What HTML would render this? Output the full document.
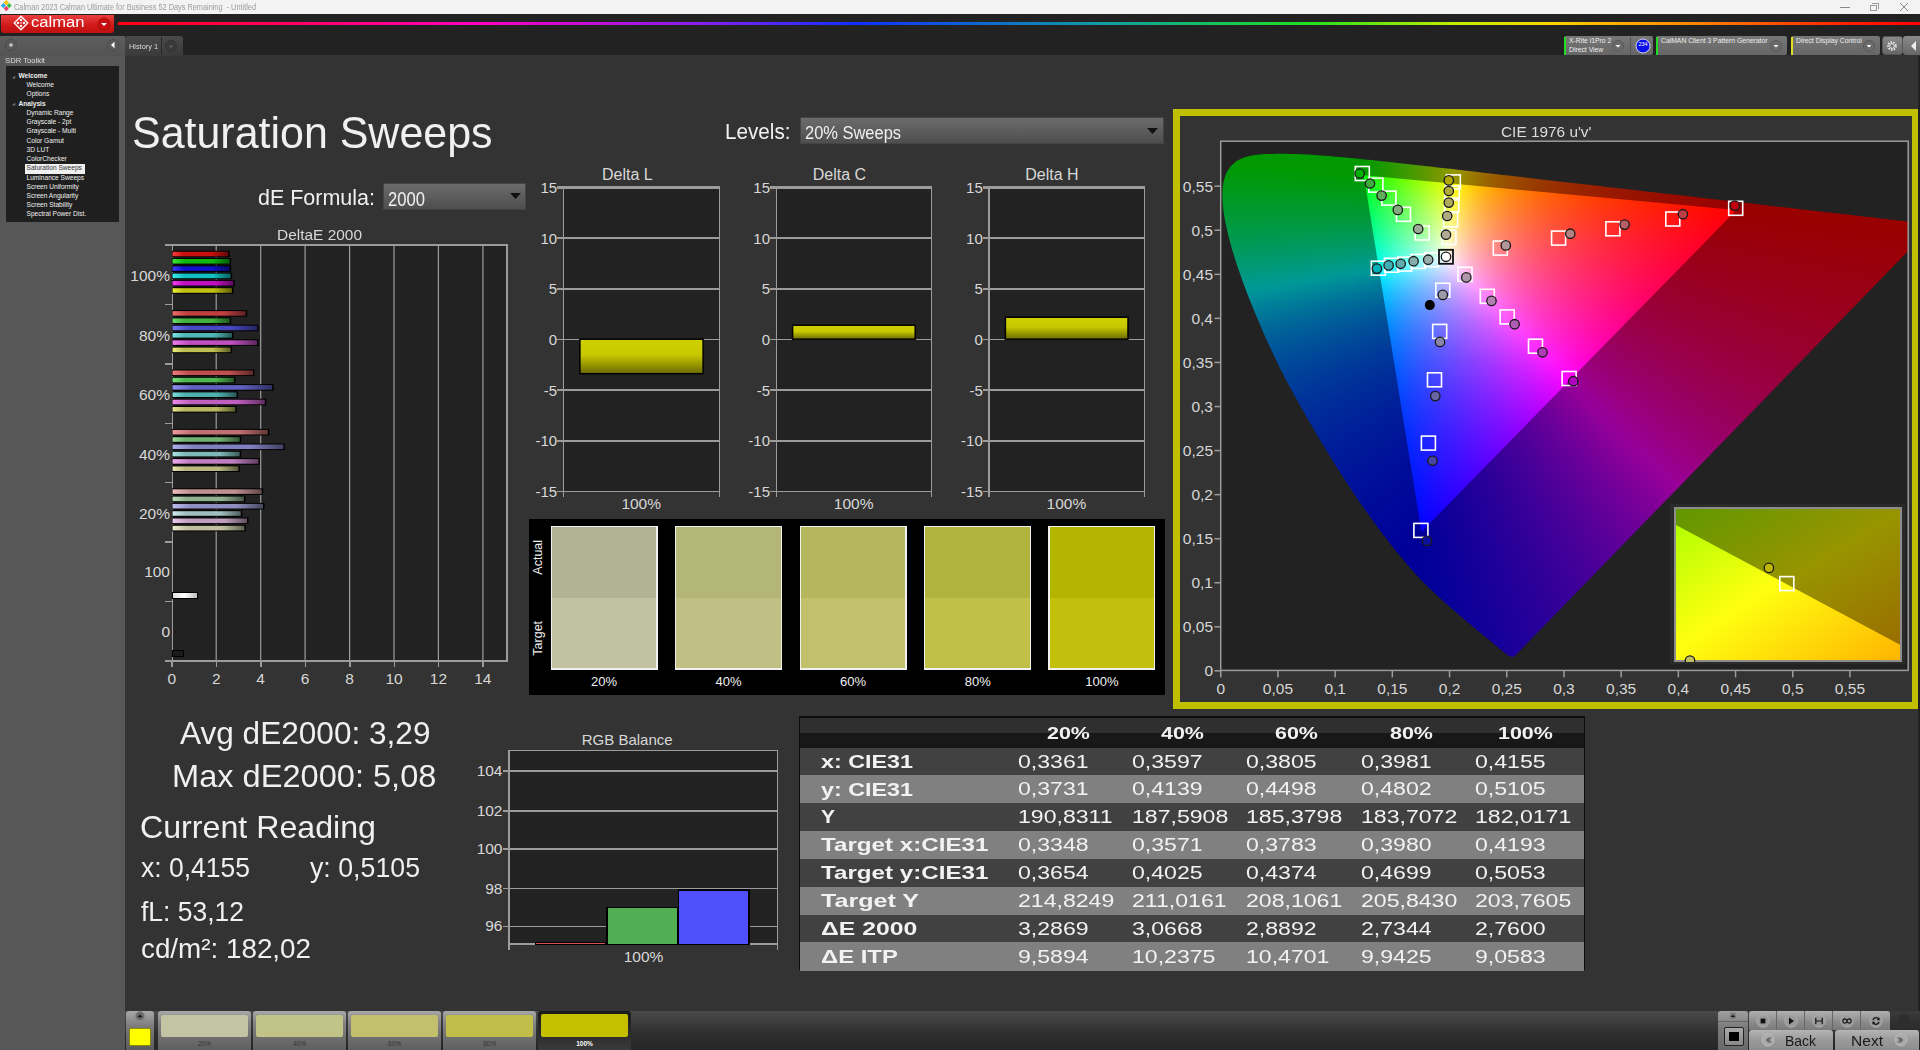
<!DOCTYPE html>
<html><head><meta charset="utf-8"><title>Calman</title><style>
*{margin:0;padding:0;box-sizing:border-box}
html,body{width:1920px;height:1050px;overflow:hidden;background:#333333;font-family:"Liberation Sans",sans-serif}
.t{position:absolute;white-space:nowrap;line-height:1;font-family:"Liberation Sans",sans-serif}
svg{position:absolute;left:0;top:0}
</style></head><body>
<div style="position:absolute;left:0px;top:0px;width:1920px;height:14px;background:#f3f3f3"></div>
<svg width="14" height="14" style="left:0;top:0"><rect x="4.5" y="0.8" width="3.6" height="3.6" fill="#f6c400" transform="rotate(45 6.3 2.6)"/><rect x="1.6" y="3.8" width="3.6" height="3.6" fill="#2aa8e8" transform="rotate(45 3.4 5.6)"/><rect x="7.4" y="3.8" width="3.6" height="3.6" fill="#3cc040" transform="rotate(45 9.2 5.6)"/><rect x="4.5" y="6.8" width="3.6" height="3.6" fill="#f03c6c" transform="rotate(45 6.3 8.6)"/></svg>
<div class="t" style="left:14.00px;top:2.78px;font-size:8.5px;color:#9c9c9c;transform:scaleX(0.8638);transform-origin:0 0;">Calman 2023 Calman Ultimate for Business 52 Days Remaining&nbsp; - Untitled</div>
<div style="position:absolute;left:1840px;top:7px;width:10px;height:1px;background:#888"></div>
<div style="position:absolute;left:1870px;top:5px;width:7px;height:6px;border:1px solid #999"></div>
<div style="position:absolute;left:1872px;top:3px;width:7px;height:6px;border-top:1px solid #999;border-right:1px solid #999"></div>
<svg width="12" height="12" style="left:1898px;top:1px"><path d="M2 2 L10 10 M10 2 L2 10" stroke="#888" stroke-width="1"/></svg>
<div style="position:absolute;left:0px;top:14px;width:1920px;height:41px;background:#222222"></div>
<div style="position:absolute;left:118px;top:22px;width:1802px;height:3px;background:linear-gradient(90deg,#ff0010 0%,#ff00c0 20%,#8020f0 33%,#1030ff 41%,#10a0a0 55%,#20e020 66%,#c0f000 74%,#ffd000 80%,#ff8000 88%,#ff2000 96%,#ff0000 100%)"></div>
<div style="position:absolute;left:1px;top:15px;width:113px;height:18px;background:linear-gradient(#e84040,#d01818 60%,#c01010);border-radius:0 0 3px 3px"></div>
<svg width="20" height="20" style="left:11.4px;top:13.4px"><g transform="rotate(45 10 10)" fill="none" stroke="#fff" stroke-width="1.3"><rect x="5.2" y="5.2" width="9.6" height="9.6"/></g><circle cx="10" cy="7" r="1.25" fill="#fff"/><circle cx="10" cy="13" r="1.25" fill="#fff"/><circle cx="7" cy="10" r="1.25" fill="#fff"/><circle cx="13" cy="10" r="1.25" fill="#fff"/><circle cx="10" cy="10" r="0.8" fill="#fff"/></svg>
<div class="t" style="left:31.00px;top:14.43px;font-size:15.5px;color:#ffffff;transform:scaleX(1.0707);transform-origin:0 0;">calman</div>
<svg width="14" height="14" style="left:97px;top:17px"><circle cx="7" cy="7" r="6" fill="#c81010" stroke="#b00a0a"/><path d="M4 6 L10 6 L7 9 Z" fill="#fff"/></svg>
<div style="position:absolute;left:1564px;top:36px;width:89px;height:19px;background:linear-gradient(#777,#666);border-radius:2px"></div>
<div style="position:absolute;left:1564px;top:37px;width:2px;height:18px;background:#22dd22"></div>
<div class="t" style="left:1569.00px;top:37.72px;font-size:6.8px;color:#eeeeee;">X-Rite i1Pro 2</div>
<div class="t" style="left:1569.00px;top:46.72px;font-size:6.8px;color:#eeeeee;">Direct View</div>
<div style="position:absolute;left:1630px;top:37px;width:1px;height:18px;background:#555"></div>
<svg width="16" height="16" style="left:1635px;top:38px"><circle cx="8" cy="8" r="7" fill="#0a10e8" stroke="#fff" stroke-width="0.8"/></svg>
<div class="t" style="left:1638.41px;top:42.33px;font-size:5.5px;color:#ffffff;">234</div>
<div style="position:absolute;left:1656px;top:36px;width:131px;height:19px;background:linear-gradient(#777,#666);border-radius:2px"></div>
<div style="position:absolute;left:1656px;top:37px;width:2px;height:18px;background:#22dd22"></div>
<div class="t" style="left:1661.00px;top:37.72px;font-size:6.8px;color:#eeeeee;">CalMAN Client 3 Pattern Generator</div>
<div style="position:absolute;left:1791px;top:36px;width:89px;height:19px;background:linear-gradient(#777,#666);border-radius:2px"></div>
<div style="position:absolute;left:1791px;top:37px;width:2px;height:18px;background:#e0e020"></div>
<div class="t" style="left:1796.00px;top:37.72px;font-size:6.8px;color:#eeeeee;">Direct Display Control</div>
<svg width="14" height="14" style="left:1611px;top:39px"><circle cx="7" cy="7" r="5.5" fill="#6a6a6a" stroke="#5a5a5a"/><path d="M4.6 6 L9.4 6 L7 8.6 Z" fill="#fff"/></svg>
<svg width="14" height="14" style="left:1769px;top:39px"><circle cx="7" cy="7" r="5.5" fill="#6a6a6a" stroke="#5a5a5a"/><path d="M4.6 6 L9.4 6 L7 8.6 Z" fill="#fff"/></svg>
<svg width="14" height="14" style="left:1862px;top:39px"><circle cx="7" cy="7" r="5.5" fill="#6a6a6a" stroke="#5a5a5a"/><path d="M4.6 6 L9.4 6 L7 8.6 Z" fill="#fff"/></svg>
<div style="position:absolute;left:1882px;top:36px;width:21px;height:19px;background:linear-gradient(#8a8a8a,#666);border-radius:3px;border:1px solid #555"></div>
<svg width="14" height="14" style="left:1885px;top:39px"><circle cx="7" cy="7" r="4" fill="none" stroke="#eee" stroke-width="1.6" stroke-dasharray="1.6 1.2"/><circle cx="7" cy="7" r="2.4" fill="none" stroke="#eee" stroke-width="1"/></svg>
<div style="position:absolute;left:1903px;top:36px;width:17px;height:19px;background:linear-gradient(#8a8a8a,#666);border-radius:3px 0 0 3px"></div>
<svg width="10" height="12" style="left:1909px;top:40px"><path d="M7 1 L2 6 L7 11 Z" fill="#eee"/></svg>
<div style="position:absolute;left:0px;top:36px;width:125px;height:1014px;background:#575757"></div>
<div style="position:absolute;left:0px;top:36px;width:125px;height:20px;background:linear-gradient(#5e5e5e,#545454);border-radius:3px 3px 0 0"></div>
<svg width="14" height="14" style="left:4px;top:38px"><circle cx="7" cy="7" r="5.5" fill="#5a5a5a" stroke="#4c4c4c"/><circle cx="7" cy="7" r="1.8" fill="#c8c8c8"/></svg>
<svg width="14" height="14" style="left:106px;top:38px"><circle cx="7" cy="7" r="5.5" fill="#5a5a5a" stroke="#4c4c4c"/><path d="M8.5 3.8 L5 7 L8.5 10.2 Z" fill="#fff"/></svg>
<div class="t" style="left:5.00px;top:57.20px;font-size:8px;color:#dddddd;transform:scaleX(0.9605);transform-origin:0 0;">SDR Toolkit</div>
<div style="position:absolute;left:6px;top:66px;width:113px;height:156px;background:#1f1f1f"></div>
<div class="t" style="left:18.50px;top:72.89px;font-size:6.6px;color:#f0f0f0;font-weight:bold;">Welcome</div>
<div class="t" style="left:12.00px;top:75.53px;font-size:3.5px;color:#777777;">&#9698;</div>
<div class="t" style="left:26.50px;top:82.13px;font-size:6.6px;color:#f0f0f0;">Welcome</div>
<div class="t" style="left:26.50px;top:91.37px;font-size:6.6px;color:#f0f0f0;">Options</div>
<div class="t" style="left:18.50px;top:100.61px;font-size:6.6px;color:#f0f0f0;font-weight:bold;">Analysis</div>
<div class="t" style="left:12.00px;top:103.25px;font-size:3.5px;color:#777777;">&#9698;</div>
<div class="t" style="left:26.50px;top:109.85px;font-size:6.6px;color:#f0f0f0;">Dynamic Range</div>
<div class="t" style="left:26.50px;top:119.09px;font-size:6.6px;color:#f0f0f0;">Grayscale - 2pt</div>
<div class="t" style="left:26.50px;top:128.33px;font-size:6.6px;color:#f0f0f0;">Grayscale - Multi</div>
<div class="t" style="left:26.50px;top:137.57px;font-size:6.6px;color:#f0f0f0;">Color Gamut</div>
<div class="t" style="left:26.50px;top:146.81px;font-size:6.6px;color:#f0f0f0;">3D LUT</div>
<div class="t" style="left:26.50px;top:156.05px;font-size:6.6px;color:#f0f0f0;">ColorChecker</div>
<div style="position:absolute;left:25px;top:163.5px;width:60px;height:10px;background:#f0f0f0"></div>
<div class="t" style="left:26.50px;top:165.29px;font-size:6.6px;color:#333333;">Saturation Sweeps</div>
<div class="t" style="left:26.50px;top:174.53px;font-size:6.6px;color:#f0f0f0;">Luminance Sweeps</div>
<div class="t" style="left:26.50px;top:183.77px;font-size:6.6px;color:#f0f0f0;">Screen Uniformity</div>
<div class="t" style="left:26.50px;top:193.01px;font-size:6.6px;color:#f0f0f0;">Screen Angularity</div>
<div class="t" style="left:26.50px;top:202.25px;font-size:6.6px;color:#f0f0f0;">Screen Stability</div>
<div class="t" style="left:26.50px;top:211.49px;font-size:6.6px;color:#f0f0f0;">Spectral Power Dist.</div>
<div style="position:absolute;left:125px;top:36px;width:58px;height:20px;background:linear-gradient(#4a4a4a,#3a3a3a);border-radius:3px 3px 0 0"></div>
<div style="position:absolute;left:161px;top:37px;width:1px;height:18px;background:#2a2a2a"></div>
<div class="t" style="left:128.50px;top:43.05px;font-size:7px;color:#dddddd;transform:scaleX(1.0500);transform-origin:0 0;">History 1</div>
<svg width="14" height="14" style="left:164px;top:39px"><circle cx="7" cy="7" r="5.5" fill="#3a3a3a" stroke="#333"/><path d="M5.5 7.5 H8.5 M7 6 V9" stroke="#777" stroke-width="0.6"/></svg>
<div class="t" style="left:131.80px;top:109.75px;font-size:45px;color:#f0f0f0;transform:scaleX(0.9544);transform-origin:0 0;">Saturation Sweeps</div>
<div class="t" style="left:257.60px;top:186.60px;font-size:22px;color:#f0f0f0;transform:scaleX(0.9764);transform-origin:0 0;">dE Formula:</div>
<div style="position:absolute;left:383px;top:183px;width:143px;height:27px;background:linear-gradient(#6c6c6c,#4e4e4e);border:1px solid #444"></div>
<div class="t" style="left:388.00px;top:188.50px;font-size:20px;color:#f0f0f0;transform:scaleX(0.8316);transform-origin:0 0;">2000</div>
<svg width="12" height="8" style="left:510px;top:193px"><path d="M0 0 H11 L5.5 6 Z" fill="#111"/></svg>
<div class="t" style="left:724.80px;top:121.10px;font-size:22px;color:#f0f0f0;transform:scaleX(0.9396);transform-origin:0 0;">Levels:</div>
<div style="position:absolute;left:800px;top:117px;width:364px;height:27px;background:linear-gradient(#6c6c6c,#4e4e4e);border:1px solid #444"></div>
<div class="t" style="left:804.80px;top:124.20px;font-size:18px;color:#f0f0f0;transform:scaleX(0.9137);transform-origin:0 0;">20% Sweeps</div>
<svg width="12" height="8" style="left:1147px;top:128px"><path d="M0 0 H11 L5.5 6 Z" fill="#111"/></svg>
<div class="t" style="left:179.50px;top:717.10px;font-size:32px;color:#f0f0f0;transform:scaleX(0.9868);transform-origin:0 0;">Avg dE2000: 3,29</div>
<div class="t" style="left:172.20px;top:760.10px;font-size:32px;color:#f0f0f0;transform:scaleX(1.0179);transform-origin:0 0;">Max dE2000: 5,08</div>
<div class="t" style="left:139.60px;top:811.40px;font-size:32px;color:#f0f0f0;transform:scaleX(1.0051);transform-origin:0 0;">Current Reading</div>
<div class="t" style="left:141.20px;top:854.85px;font-size:27px;color:#f0f0f0;transform:scaleX(0.9812);transform-origin:0 0;">x: 0,4155</div>
<div class="t" style="left:309.50px;top:854.85px;font-size:27px;color:#f0f0f0;transform:scaleX(0.9902);transform-origin:0 0;">y: 0,5105</div>
<div class="t" style="left:141.20px;top:899.45px;font-size:27px;color:#f0f0f0;transform:scaleX(0.9801);transform-origin:0 0;">fL: 53,12</div>
<div class="t" style="left:141.20px;top:935.65px;font-size:27px;color:#f0f0f0;transform:scaleX(1.0298);transform-origin:0 0;">cd/m&#178;: 182,02</div>
<div class="t" style="left:277.30px;top:226.82px;font-size:15.5px;color:#d8d8d8;transform:scaleX(0.9963);transform-origin:0 0;">DeltaE 2000</div>
<svg width="520" height="700" style="left:0px;top:0px" shape-rendering="crispEdges"><defs><linearGradient id="bg0"><stop offset="0" stop-color="rgb(245,61,61)"/><stop offset="0.2" stop-color="rgb(200,16,16)"/><stop offset="0.7" stop-color="rgb(200,16,16)"/><stop offset="1" stop-color="rgb(100,8,8)"/></linearGradient><linearGradient id="bg1"><stop offset="0" stop-color="rgb(61,229,61)"/><stop offset="0.2" stop-color="rgb(16,184,16)"/><stop offset="0.7" stop-color="rgb(16,184,16)"/><stop offset="1" stop-color="rgb(8,92,8)"/></linearGradient><linearGradient id="bg2"><stop offset="0" stop-color="rgb(61,61,245)"/><stop offset="0.2" stop-color="rgb(16,16,200)"/><stop offset="0.7" stop-color="rgb(16,16,200)"/><stop offset="1" stop-color="rgb(8,8,100)"/></linearGradient><linearGradient id="bg3"><stop offset="0" stop-color="rgb(61,237,237)"/><stop offset="0.2" stop-color="rgb(16,192,192)"/><stop offset="0.7" stop-color="rgb(16,192,192)"/><stop offset="1" stop-color="rgb(8,96,96)"/></linearGradient><linearGradient id="bg4"><stop offset="0" stop-color="rgb(237,61,237)"/><stop offset="0.2" stop-color="rgb(192,16,192)"/><stop offset="0.7" stop-color="rgb(192,16,192)"/><stop offset="1" stop-color="rgb(96,8,96)"/></linearGradient><linearGradient id="bg5"><stop offset="0" stop-color="rgb(237,237,61)"/><stop offset="0.2" stop-color="rgb(192,192,16)"/><stop offset="0.7" stop-color="rgb(192,192,16)"/><stop offset="1" stop-color="rgb(96,96,8)"/></linearGradient><linearGradient id="bg6"><stop offset="0" stop-color="rgb(237,109,109)"/><stop offset="0.2" stop-color="rgb(192,64,64)"/><stop offset="0.7" stop-color="rgb(192,64,64)"/><stop offset="1" stop-color="rgb(96,32,32)"/></linearGradient><linearGradient id="bg7"><stop offset="0" stop-color="rgb(109,221,109)"/><stop offset="0.2" stop-color="rgb(64,176,64)"/><stop offset="0.7" stop-color="rgb(64,176,64)"/><stop offset="1" stop-color="rgb(32,88,32)"/></linearGradient><linearGradient id="bg8"><stop offset="0" stop-color="rgb(117,117,237)"/><stop offset="0.2" stop-color="rgb(72,72,192)"/><stop offset="0.7" stop-color="rgb(72,72,192)"/><stop offset="1" stop-color="rgb(36,36,96)"/></linearGradient><linearGradient id="bg9"><stop offset="0" stop-color="rgb(125,229,229)"/><stop offset="0.2" stop-color="rgb(80,184,184)"/><stop offset="0.7" stop-color="rgb(80,184,184)"/><stop offset="1" stop-color="rgb(40,92,92)"/></linearGradient><linearGradient id="bg10"><stop offset="0" stop-color="rgb(237,125,237)"/><stop offset="0.2" stop-color="rgb(192,80,192)"/><stop offset="0.7" stop-color="rgb(192,80,192)"/><stop offset="1" stop-color="rgb(96,40,96)"/></linearGradient><linearGradient id="bg11"><stop offset="0" stop-color="rgb(237,237,125)"/><stop offset="0.2" stop-color="rgb(192,192,80)"/><stop offset="0.7" stop-color="rgb(192,192,80)"/><stop offset="1" stop-color="rgb(96,96,40)"/></linearGradient><linearGradient id="bg12"><stop offset="0" stop-color="rgb(237,125,125)"/><stop offset="0.2" stop-color="rgb(192,80,80)"/><stop offset="0.7" stop-color="rgb(192,80,80)"/><stop offset="1" stop-color="rgb(96,40,40)"/></linearGradient><linearGradient id="bg13"><stop offset="0" stop-color="rgb(125,229,125)"/><stop offset="0.2" stop-color="rgb(80,184,80)"/><stop offset="0.7" stop-color="rgb(80,184,80)"/><stop offset="1" stop-color="rgb(40,92,40)"/></linearGradient><linearGradient id="bg14"><stop offset="0" stop-color="rgb(141,141,237)"/><stop offset="0.2" stop-color="rgb(96,96,192)"/><stop offset="0.7" stop-color="rgb(96,96,192)"/><stop offset="1" stop-color="rgb(48,48,96)"/></linearGradient><linearGradient id="bg15"><stop offset="0" stop-color="rgb(125,221,221)"/><stop offset="0.2" stop-color="rgb(80,176,176)"/><stop offset="0.7" stop-color="rgb(80,176,176)"/><stop offset="1" stop-color="rgb(40,88,88)"/></linearGradient><linearGradient id="bg16"><stop offset="0" stop-color="rgb(237,141,237)"/><stop offset="0.2" stop-color="rgb(192,96,192)"/><stop offset="0.7" stop-color="rgb(192,96,192)"/><stop offset="1" stop-color="rgb(96,48,96)"/></linearGradient><linearGradient id="bg17"><stop offset="0" stop-color="rgb(229,229,141)"/><stop offset="0.2" stop-color="rgb(184,184,96)"/><stop offset="0.7" stop-color="rgb(184,184,96)"/><stop offset="1" stop-color="rgb(92,92,48)"/></linearGradient><linearGradient id="bg18"><stop offset="0" stop-color="rgb(237,157,157)"/><stop offset="0.2" stop-color="rgb(192,112,112)"/><stop offset="0.7" stop-color="rgb(192,112,112)"/><stop offset="1" stop-color="rgb(96,56,56)"/></linearGradient><linearGradient id="bg19"><stop offset="0" stop-color="rgb(157,221,157)"/><stop offset="0.2" stop-color="rgb(112,176,112)"/><stop offset="0.7" stop-color="rgb(112,176,112)"/><stop offset="1" stop-color="rgb(56,88,56)"/></linearGradient><linearGradient id="bg20"><stop offset="0" stop-color="rgb(173,173,237)"/><stop offset="0.2" stop-color="rgb(128,128,192)"/><stop offset="0.7" stop-color="rgb(128,128,192)"/><stop offset="1" stop-color="rgb(64,64,96)"/></linearGradient><linearGradient id="bg21"><stop offset="0" stop-color="rgb(173,229,229)"/><stop offset="0.2" stop-color="rgb(128,184,184)"/><stop offset="0.7" stop-color="rgb(128,184,184)"/><stop offset="1" stop-color="rgb(64,92,92)"/></linearGradient><linearGradient id="bg22"><stop offset="0" stop-color="rgb(237,173,237)"/><stop offset="0.2" stop-color="rgb(192,128,192)"/><stop offset="0.7" stop-color="rgb(192,128,192)"/><stop offset="1" stop-color="rgb(96,64,96)"/></linearGradient><linearGradient id="bg23"><stop offset="0" stop-color="rgb(229,229,173)"/><stop offset="0.2" stop-color="rgb(184,184,128)"/><stop offset="0.7" stop-color="rgb(184,184,128)"/><stop offset="1" stop-color="rgb(92,92,64)"/></linearGradient><linearGradient id="bg24"><stop offset="0" stop-color="rgb(237,189,189)"/><stop offset="0.2" stop-color="rgb(192,144,144)"/><stop offset="0.7" stop-color="rgb(192,144,144)"/><stop offset="1" stop-color="rgb(96,72,72)"/></linearGradient><linearGradient id="bg25"><stop offset="0" stop-color="rgb(189,221,189)"/><stop offset="0.2" stop-color="rgb(144,176,144)"/><stop offset="0.7" stop-color="rgb(144,176,144)"/><stop offset="1" stop-color="rgb(72,88,72)"/></linearGradient><linearGradient id="bg26"><stop offset="0" stop-color="rgb(189,189,237)"/><stop offset="0.2" stop-color="rgb(144,144,192)"/><stop offset="0.7" stop-color="rgb(144,144,192)"/><stop offset="1" stop-color="rgb(72,72,96)"/></linearGradient><linearGradient id="bg27"><stop offset="0" stop-color="rgb(205,237,237)"/><stop offset="0.2" stop-color="rgb(160,192,192)"/><stop offset="0.7" stop-color="rgb(160,192,192)"/><stop offset="1" stop-color="rgb(80,96,96)"/></linearGradient><linearGradient id="bg28"><stop offset="0" stop-color="rgb(237,205,237)"/><stop offset="0.2" stop-color="rgb(192,160,192)"/><stop offset="0.7" stop-color="rgb(192,160,192)"/><stop offset="1" stop-color="rgb(96,80,96)"/></linearGradient><linearGradient id="bg29"><stop offset="0" stop-color="rgb(237,237,205)"/><stop offset="0.2" stop-color="rgb(192,192,160)"/><stop offset="0.7" stop-color="rgb(192,192,160)"/><stop offset="1" stop-color="rgb(96,96,80)"/></linearGradient><linearGradient id="bw"><stop offset="0" stop-color="#e0e0e0"/><stop offset="0.5" stop-color="#ffffff"/><stop offset="1" stop-color="#c0c0c0"/></linearGradient></defs><rect x="172" y="245" width="335" height="415.5" fill="#222222"/><rect x="215.6" y="245" width="1.2" height="415.5" fill="#9c9c9c" shape-rendering="auto"/><rect x="260.1" y="245" width="1.2" height="415.5" fill="#9c9c9c" shape-rendering="auto"/><rect x="304.5" y="245" width="1.2" height="415.5" fill="#9c9c9c" shape-rendering="auto"/><rect x="349.0" y="245" width="1.2" height="415.5" fill="#9c9c9c" shape-rendering="auto"/><rect x="393.4" y="245" width="1.2" height="415.5" fill="#9c9c9c" shape-rendering="auto"/><rect x="437.8" y="245" width="1.2" height="415.5" fill="#9c9c9c" shape-rendering="auto"/><rect x="482.3" y="245" width="1.2" height="415.5" fill="#9c9c9c" shape-rendering="auto"/><rect x="165" y="244" width="343" height="2" fill="#9c9c9c"/><rect x="171.5" y="245" width="1.5" height="421.5" fill="#9c9c9c"/><rect x="506" y="245" width="1.5" height="415.5" fill="#9c9c9c"/><rect x="165" y="659.5" width="343" height="2" fill="#9c9c9c"/><rect x="165" y="244.5" width="7" height="1.5" fill="#9c9c9c"/><rect x="165" y="303.9" width="7" height="1.5" fill="#9c9c9c"/><rect x="165" y="363.2" width="7" height="1.5" fill="#9c9c9c"/><rect x="165" y="422.6" width="7" height="1.5" fill="#9c9c9c"/><rect x="165" y="481.9" width="7" height="1.5" fill="#9c9c9c"/><rect x="165" y="541.3" width="7" height="1.5" fill="#9c9c9c"/><rect x="165" y="600.6" width="7" height="1.5" fill="#9c9c9c"/><rect x="165" y="660.0" width="7" height="1.5" fill="#9c9c9c"/><rect x="171.3" y="660.5" width="1.5" height="6" fill="#9c9c9c"/><rect x="215.7" y="660.5" width="1.5" height="6" fill="#9c9c9c"/><rect x="260.2" y="660.5" width="1.5" height="6" fill="#9c9c9c"/><rect x="304.6" y="660.5" width="1.5" height="6" fill="#9c9c9c"/><rect x="349.1" y="660.5" width="1.5" height="6" fill="#9c9c9c"/><rect x="393.5" y="660.5" width="1.5" height="6" fill="#9c9c9c"/><rect x="437.9" y="660.5" width="1.5" height="6" fill="#9c9c9c"/><rect x="482.4" y="660.5" width="1.5" height="6" fill="#9c9c9c"/><rect x="172" y="250.7" width="57.7" height="6.6" fill="#000" shape-rendering="auto"/><rect x="172.5" y="251.7" width="55.7" height="4.6" fill="url(#bg0)" shape-rendering="auto"/><rect x="172" y="258.0" width="59.2" height="6.6" fill="#000" shape-rendering="auto"/><rect x="172.5" y="259.0" width="57.2" height="4.6" fill="url(#bg1)" shape-rendering="auto"/><rect x="172" y="265.3" width="59.2" height="6.6" fill="#000" shape-rendering="auto"/><rect x="172.5" y="266.3" width="57.2" height="4.6" fill="url(#bg2)" shape-rendering="auto"/><rect x="172" y="272.6" width="60.1" height="6.6" fill="#000" shape-rendering="auto"/><rect x="172.5" y="273.6" width="58.1" height="4.6" fill="url(#bg3)" shape-rendering="auto"/><rect x="172" y="279.9" width="62.8" height="6.6" fill="#000" shape-rendering="auto"/><rect x="172.5" y="280.9" width="60.8" height="4.6" fill="url(#bg4)" shape-rendering="auto"/><rect x="172" y="287.2" width="61.4" height="6.6" fill="#000" shape-rendering="auto"/><rect x="172.5" y="288.2" width="59.4" height="4.6" fill="url(#bg5)" shape-rendering="auto"/><rect x="172" y="310.1" width="75.2" height="6.6" fill="#000" shape-rendering="auto"/><rect x="172.5" y="311.1" width="73.2" height="4.6" fill="url(#bg6)" shape-rendering="auto"/><rect x="172" y="317.4" width="59.2" height="6.6" fill="#000" shape-rendering="auto"/><rect x="172.5" y="318.4" width="57.2" height="4.6" fill="url(#bg7)" shape-rendering="auto"/><rect x="172" y="324.7" width="86.5" height="6.6" fill="#000" shape-rendering="auto"/><rect x="172.5" y="325.7" width="84.5" height="4.6" fill="url(#bg8)" shape-rendering="auto"/><rect x="172" y="332.0" width="61.4" height="6.6" fill="#000" shape-rendering="auto"/><rect x="172.5" y="333.0" width="59.4" height="4.6" fill="url(#bg9)" shape-rendering="auto"/><rect x="172" y="339.3" width="86.5" height="6.6" fill="#000" shape-rendering="auto"/><rect x="172.5" y="340.3" width="84.5" height="4.6" fill="url(#bg10)" shape-rendering="auto"/><rect x="172" y="346.6" width="60.1" height="6.6" fill="#000" shape-rendering="auto"/><rect x="172.5" y="347.6" width="58.1" height="4.6" fill="url(#bg11)" shape-rendering="auto"/><rect x="172" y="369.5" width="82.5" height="6.6" fill="#000" shape-rendering="auto"/><rect x="172.5" y="370.5" width="80.5" height="4.6" fill="url(#bg12)" shape-rendering="auto"/><rect x="172" y="376.8" width="63.4" height="6.6" fill="#000" shape-rendering="auto"/><rect x="172.5" y="377.8" width="61.4" height="4.6" fill="url(#bg13)" shape-rendering="auto"/><rect x="172" y="384.1" width="101.7" height="6.6" fill="#000" shape-rendering="auto"/><rect x="172.5" y="385.1" width="99.7" height="4.6" fill="url(#bg14)" shape-rendering="auto"/><rect x="172" y="391.4" width="66.1" height="6.6" fill="#000" shape-rendering="auto"/><rect x="172.5" y="392.4" width="64.1" height="4.6" fill="url(#bg15)" shape-rendering="auto"/><rect x="172" y="398.7" width="94.3" height="6.6" fill="#000" shape-rendering="auto"/><rect x="172.5" y="399.7" width="92.3" height="4.6" fill="url(#bg16)" shape-rendering="auto"/><rect x="172" y="406.0" width="64.8" height="6.6" fill="#000" shape-rendering="auto"/><rect x="172.5" y="407.0" width="62.8" height="4.6" fill="url(#bg17)" shape-rendering="auto"/><rect x="172" y="428.9" width="97.4" height="6.6" fill="#000" shape-rendering="auto"/><rect x="172.5" y="429.9" width="95.4" height="4.6" fill="url(#bg18)" shape-rendering="auto"/><rect x="172" y="436.2" width="69.2" height="6.6" fill="#000" shape-rendering="auto"/><rect x="172.5" y="437.2" width="67.2" height="4.6" fill="url(#bg19)" shape-rendering="auto"/><rect x="172" y="443.5" width="113.0" height="6.6" fill="#000" shape-rendering="auto"/><rect x="172.5" y="444.5" width="111.0" height="4.6" fill="url(#bg20)" shape-rendering="auto"/><rect x="172" y="450.8" width="69.2" height="6.6" fill="#000" shape-rendering="auto"/><rect x="172.5" y="451.8" width="67.2" height="4.6" fill="url(#bg21)" shape-rendering="auto"/><rect x="172" y="458.1" width="87.9" height="6.6" fill="#000" shape-rendering="auto"/><rect x="172.5" y="459.1" width="85.9" height="4.6" fill="url(#bg22)" shape-rendering="auto"/><rect x="172" y="465.4" width="67.9" height="6.6" fill="#000" shape-rendering="auto"/><rect x="172.5" y="466.4" width="65.9" height="4.6" fill="url(#bg23)" shape-rendering="auto"/><rect x="172" y="488.3" width="91.2" height="6.6" fill="#000" shape-rendering="auto"/><rect x="172.5" y="489.3" width="89.2" height="4.6" fill="url(#bg24)" shape-rendering="auto"/><rect x="172" y="495.6" width="73.4" height="6.6" fill="#000" shape-rendering="auto"/><rect x="172.5" y="496.6" width="71.4" height="4.6" fill="url(#bg25)" shape-rendering="auto"/><rect x="172" y="502.9" width="92.5" height="6.6" fill="#000" shape-rendering="auto"/><rect x="172.5" y="503.9" width="90.5" height="4.6" fill="url(#bg26)" shape-rendering="auto"/><rect x="172" y="510.2" width="70.3" height="6.6" fill="#000" shape-rendering="auto"/><rect x="172.5" y="511.2" width="68.3" height="4.6" fill="url(#bg27)" shape-rendering="auto"/><rect x="172" y="517.5" width="76.5" height="6.6" fill="#000" shape-rendering="auto"/><rect x="172.5" y="518.5" width="74.5" height="4.6" fill="url(#bg28)" shape-rendering="auto"/><rect x="172" y="524.8" width="73.9" height="6.6" fill="#000" shape-rendering="auto"/><rect x="172.5" y="525.8" width="71.9" height="4.6" fill="url(#bg29)" shape-rendering="auto"/><rect x="172" y="592" width="26" height="6.5" fill="#000"/><rect x="172.5" y="593" width="24" height="4.5" fill="url(#bw)"/><rect x="172" y="650" width="12" height="7" fill="#000"/><rect x="173" y="651" width="10" height="5" fill="#1a1a1a"/></svg>
<div class="t" style="left:130.36px;top:268.32px;font-size:15.5px;color:#d8d8d8;">100%</div>
<div class="t" style="left:138.98px;top:327.72px;font-size:15.5px;color:#d8d8d8;">80%</div>
<div class="t" style="left:138.98px;top:387.12px;font-size:15.5px;color:#d8d8d8;">60%</div>
<div class="t" style="left:138.98px;top:446.52px;font-size:15.5px;color:#d8d8d8;">40%</div>
<div class="t" style="left:138.98px;top:505.93px;font-size:15.5px;color:#d8d8d8;">20%</div>
<div class="t" style="left:144.14px;top:564.33px;font-size:15.5px;color:#d8d8d8;">100</div>
<div class="t" style="left:161.38px;top:624.33px;font-size:15.5px;color:#d8d8d8;">0</div>
<div class="t" style="left:167.49px;top:671.33px;font-size:15.5px;color:#d8d8d8;">0</div>
<div class="t" style="left:211.93px;top:671.33px;font-size:15.5px;color:#d8d8d8;">2</div>
<div class="t" style="left:256.37px;top:671.33px;font-size:15.5px;color:#d8d8d8;">4</div>
<div class="t" style="left:300.81px;top:671.33px;font-size:15.5px;color:#d8d8d8;">6</div>
<div class="t" style="left:345.25px;top:671.33px;font-size:15.5px;color:#d8d8d8;">8</div>
<div class="t" style="left:385.38px;top:671.33px;font-size:15.5px;color:#d8d8d8;">10</div>
<div class="t" style="left:429.82px;top:671.33px;font-size:15.5px;color:#d8d8d8;">12</div>
<div class="t" style="left:474.26px;top:671.33px;font-size:15.5px;color:#d8d8d8;">14</div>
<svg width="1170" height="520" style="left:0px;top:0px" shape-rendering="crispEdges"><defs><linearGradient id="yb" x1="0" y1="0" x2="0" y2="1"><stop offset="0" stop-color="#d0d000"/><stop offset="0.45" stop-color="#c8c800"/><stop offset="1" stop-color="#6a6a00"/></linearGradient></defs><rect x="563.2" y="187.2" width="156.0" height="304.0" fill="#222222"/><rect x="557.2" y="186.2" width="162.5" height="2.5" fill="#9c9c9c"/><rect x="557.2" y="237.4" width="162.5" height="1.5" fill="#9c9c9c"/><rect x="557.2" y="288.0" width="162.5" height="1.5" fill="#9c9c9c"/><rect x="557.2" y="338.7" width="162.5" height="1.5" fill="#9c9c9c"/><rect x="557.2" y="389.4" width="162.5" height="1.5" fill="#9c9c9c"/><rect x="557.2" y="440.0" width="162.5" height="1.5" fill="#9c9c9c"/><rect x="557.2" y="490.7" width="162.5" height="1.5" fill="#9c9c9c"/><rect x="562.7" y="187.2" width="1.5" height="310.0" fill="#9c9c9c"/><rect x="718.7" y="187.2" width="1.5" height="310.0" fill="#9c9c9c"/><rect x="579.9" y="339.2" width="123.2" height="34.5" fill="url(#yb)" stroke="#000" stroke-width="1.5" shape-rendering="auto"/><rect x="776" y="187.2" width="155.20000000000005" height="304.0" fill="#222222"/><rect x="770" y="186.2" width="161.70000000000005" height="2.5" fill="#9c9c9c"/><rect x="770" y="237.4" width="161.70000000000005" height="1.5" fill="#9c9c9c"/><rect x="770" y="288.0" width="161.70000000000005" height="1.5" fill="#9c9c9c"/><rect x="770" y="338.7" width="161.70000000000005" height="1.5" fill="#9c9c9c"/><rect x="770" y="389.4" width="161.70000000000005" height="1.5" fill="#9c9c9c"/><rect x="770" y="440.0" width="161.70000000000005" height="1.5" fill="#9c9c9c"/><rect x="770" y="490.7" width="161.70000000000005" height="1.5" fill="#9c9c9c"/><rect x="775.5" y="187.2" width="1.5" height="310.0" fill="#9c9c9c"/><rect x="930.7" y="187.2" width="1.5" height="310.0" fill="#9c9c9c"/><rect x="792.6" y="325.2" width="122.6" height="14.0" fill="url(#yb)" stroke="#000" stroke-width="1.5" shape-rendering="auto"/><rect x="988.8" y="187.2" width="155.20000000000005" height="304.0" fill="#222222"/><rect x="982.8" y="186.2" width="161.70000000000005" height="2.5" fill="#9c9c9c"/><rect x="982.8" y="237.4" width="161.70000000000005" height="1.5" fill="#9c9c9c"/><rect x="982.8" y="288.0" width="161.70000000000005" height="1.5" fill="#9c9c9c"/><rect x="982.8" y="338.7" width="161.70000000000005" height="1.5" fill="#9c9c9c"/><rect x="982.8" y="389.4" width="161.70000000000005" height="1.5" fill="#9c9c9c"/><rect x="982.8" y="440.0" width="161.70000000000005" height="1.5" fill="#9c9c9c"/><rect x="982.8" y="490.7" width="161.70000000000005" height="1.5" fill="#9c9c9c"/><rect x="988.3" y="187.2" width="1.5" height="310.0" fill="#9c9c9c"/><rect x="1143.5" y="187.2" width="1.5" height="310.0" fill="#9c9c9c"/><rect x="1005.4" y="317.2" width="122.6" height="22.0" fill="url(#yb)" stroke="#000" stroke-width="1.5" shape-rendering="auto"/></svg>
<div class="t" style="left:602.05px;top:167.40px;font-size:16px;color:#d8d8d8;">Delta L</div>
<div class="t" style="left:540.51px;top:179.95px;font-size:15px;color:#d8d8d8;">15</div>
<div class="t" style="left:540.51px;top:230.62px;font-size:15px;color:#d8d8d8;">10</div>
<div class="t" style="left:548.86px;top:281.28px;font-size:15px;color:#d8d8d8;">5</div>
<div class="t" style="left:548.86px;top:331.95px;font-size:15px;color:#d8d8d8;">0</div>
<div class="t" style="left:543.86px;top:382.62px;font-size:15px;color:#d8d8d8;">-5</div>
<div class="t" style="left:535.52px;top:433.28px;font-size:15px;color:#d8d8d8;">-10</div>
<div class="t" style="left:535.52px;top:483.95px;font-size:15px;color:#d8d8d8;">-15</div>
<div class="t" style="left:621.38px;top:495.82px;font-size:15.5px;color:#d8d8d8;">100%</div>
<div class="t" style="left:812.82px;top:167.40px;font-size:16px;color:#d8d8d8;">Delta C</div>
<div class="t" style="left:753.31px;top:179.95px;font-size:15px;color:#d8d8d8;">15</div>
<div class="t" style="left:753.31px;top:230.62px;font-size:15px;color:#d8d8d8;">10</div>
<div class="t" style="left:761.66px;top:281.28px;font-size:15px;color:#d8d8d8;">5</div>
<div class="t" style="left:761.66px;top:331.95px;font-size:15px;color:#d8d8d8;">0</div>
<div class="t" style="left:756.66px;top:382.62px;font-size:15px;color:#d8d8d8;">-5</div>
<div class="t" style="left:748.32px;top:433.28px;font-size:15px;color:#d8d8d8;">-10</div>
<div class="t" style="left:748.32px;top:483.95px;font-size:15px;color:#d8d8d8;">-15</div>
<div class="t" style="left:833.78px;top:495.82px;font-size:15.5px;color:#d8d8d8;">100%</div>
<div class="t" style="left:1025.32px;top:167.40px;font-size:16px;color:#d8d8d8;">Delta H</div>
<div class="t" style="left:966.11px;top:179.95px;font-size:15px;color:#d8d8d8;">15</div>
<div class="t" style="left:966.11px;top:230.62px;font-size:15px;color:#d8d8d8;">10</div>
<div class="t" style="left:974.46px;top:281.28px;font-size:15px;color:#d8d8d8;">5</div>
<div class="t" style="left:974.46px;top:331.95px;font-size:15px;color:#d8d8d8;">0</div>
<div class="t" style="left:969.46px;top:382.62px;font-size:15px;color:#d8d8d8;">-5</div>
<div class="t" style="left:961.12px;top:433.28px;font-size:15px;color:#d8d8d8;">-10</div>
<div class="t" style="left:961.12px;top:483.95px;font-size:15px;color:#d8d8d8;">-15</div>
<div class="t" style="left:1046.58px;top:495.82px;font-size:15.5px;color:#d8d8d8;">100%</div>
<div style="position:absolute;left:528.5px;top:518.5px;width:636.5px;height:176px;background:#000"></div>
<div style="position:absolute;left:550.5px;top:526px;width:107px;height:143.5px;background:#f0f0f0"></div>
<div style="position:absolute;left:551.7px;top:527.2px;width:104.6px;height:70.8px;background:rgb(177, 180, 148)"></div>
<div style="position:absolute;left:551.7px;top:598px;width:104.6px;height:70.3px;background:rgb(193, 194, 161)"></div>
<div class="t" style="left:590.99px;top:674.95px;font-size:13px;color:#f0f0f0;">20%</div>
<div style="position:absolute;left:675.0px;top:526px;width:107px;height:143.5px;background:#f0f0f0"></div>
<div style="position:absolute;left:676.2px;top:527.2px;width:104.6px;height:70.8px;background:rgb(179, 182, 119)"></div>
<div style="position:absolute;left:676.2px;top:598px;width:104.6px;height:70.3px;background:rgb(192, 192, 132)"></div>
<div class="t" style="left:715.49px;top:674.95px;font-size:13px;color:#f0f0f0;">40%</div>
<div style="position:absolute;left:799.6px;top:526px;width:107px;height:143.5px;background:#f0f0f0"></div>
<div style="position:absolute;left:800.8px;top:527.2px;width:104.6px;height:70.8px;background:rgb(180, 183, 94)"></div>
<div style="position:absolute;left:800.8px;top:598px;width:104.6px;height:70.3px;background:rgb(194, 192, 106)"></div>
<div class="t" style="left:840.09px;top:674.95px;font-size:13px;color:#f0f0f0;">60%</div>
<div style="position:absolute;left:924.2px;top:526px;width:107px;height:143.5px;background:#f0f0f0"></div>
<div style="position:absolute;left:925.4px;top:527.2px;width:104.6px;height:70.8px;background:rgb(177, 179, 63)"></div>
<div style="position:absolute;left:925.4px;top:598px;width:104.6px;height:70.3px;background:rgb(192, 191, 72)"></div>
<div class="t" style="left:964.69px;top:674.95px;font-size:13px;color:#f0f0f0;">80%</div>
<div style="position:absolute;left:1048.4px;top:526px;width:107px;height:143.5px;background:#f0f0f0"></div>
<div style="position:absolute;left:1049.6px;top:527.2px;width:104.6px;height:70.8px;background:rgb(179, 181, 0)"></div>
<div style="position:absolute;left:1049.6px;top:598px;width:104.6px;height:70.3px;background:rgb(194, 192, 12)"></div>
<div class="t" style="left:1085.28px;top:674.95px;font-size:13px;color:#f0f0f0;">100%</div>
<div class="t" style="left:530px;top:557px;font-size:12.5px;color:#f0f0f0;transform:translate(0,0) rotate(-90deg);transform-origin:0 0;width:0">&nbsp;</div>
<div class="t" style="left:521.2px;top:551.1px;font-size:12.5px;color:#f0f0f0;transform:rotate(-90deg);transform-origin:17.4px 6.25px">Actual</div>
<div class="t" style="left:521.2px;top:631.8px;font-size:12.5px;color:#f0f0f0;transform:rotate(-90deg);transform-origin:17.4px 6.25px">Target</div>
<svg width="800" height="1000" style="left:0px;top:0px" shape-rendering="crispEdges"><rect x="508.5" y="750.3" width="269.20000000000005" height="194.10000000000002" fill="#222222"/><rect x="508.5" y="749.8" width="269.20000000000005" height="1.5" fill="#9c9c9c"/><rect x="502.5" y="770.3" width="275.20000000000005" height="1.5" fill="#9c9c9c"/><rect x="502.5" y="810.0" width="275.20000000000005" height="1.5" fill="#9c9c9c"/><rect x="502.5" y="848.25" width="275.20000000000005" height="1.5" fill="#9c9c9c"/><rect x="502.5" y="887.9" width="275.20000000000005" height="1.5" fill="#9c9c9c"/><rect x="502.5" y="925.5" width="275.20000000000005" height="1.5" fill="#9c9c9c"/><rect x="508.0" y="750.3" width="1.5" height="200.10000000000002" fill="#9c9c9c"/><rect x="776.7" y="750.3" width="1.5" height="200.10000000000002" fill="#9c9c9c"/><rect x="508.5" y="943.4" width="269.20000000000005" height="1.5" fill="#9c9c9c"/><rect x="535" y="941.5" width="71" height="3" fill="#000"/><rect x="536" y="942.5" width="69" height="1.5" fill="#d85050"/><rect x="606" y="906.5" width="72" height="38" fill="#000"/><rect x="607.5" y="908" width="69" height="36" fill="#52ae52"/><rect x="677.5" y="889" width="72" height="55.5" fill="#000"/><rect x="679" y="890.5" width="69" height="53.5" fill="#5050fa"/></svg>
<div class="t" style="left:581.76px;top:732.25px;font-size:15px;color:#d8d8d8;">RGB Balance</div>
<div class="t" style="left:476.64px;top:763.23px;font-size:15.5px;color:#d8d8d8;">104</div>
<div class="t" style="left:476.64px;top:802.93px;font-size:15.5px;color:#d8d8d8;">102</div>
<div class="t" style="left:476.64px;top:841.18px;font-size:15.5px;color:#d8d8d8;">100</div>
<div class="t" style="left:485.26px;top:880.83px;font-size:15.5px;color:#d8d8d8;">98</div>
<div class="t" style="left:485.26px;top:918.43px;font-size:15.5px;color:#d8d8d8;">96</div>
<div class="t" style="left:623.68px;top:948.83px;font-size:15.5px;color:#d8d8d8;">100%</div>
<div style="position:absolute;left:1173px;top:109px;width:746px;height:600px;border:7.3px solid #c0c000;background:#333333"></div>
<div class="t" style="left:1500.55px;top:123.75px;font-size:15px;color:#dcdcdc;transform:scaleX(1.0251);transform-origin:0 0;">CIE 1976 u'v'</div>
<div style="position:absolute;left:1220.7px;top:141.2px;width:687.5px;height:529.2px;background:#222222"></div>
<div style="position:absolute;left:1220.7px;top:141.2px;width:687.5px;height:529.2px;overflow:hidden"><div style="position:absolute;left:-1220.7px;top:-141.2px;width:1920px;height:700px"><div style="position:absolute;left:1200px;top:125px;width:736px;height:560px;clip-path:path('M314.5,531.3 L314.4,531.4 L314.3,531.5 L314.2,531.6 L313.9,531.7 L313.7,531.8 L313.3,531.9 L312.8,531.8 L312.3,531.8 L311.6,531.8 L310.9,531.7 L310.1,531.4 L309.3,531.0 L308.4,530.5 L307.4,529.9 L306.4,529.1 L305.2,528.2 L303.9,527.2 L302.3,526.0 L300.6,524.6 L298.7,523.0 L296.7,521.3 L294.4,519.4 L292.0,517.3 L289.2,515.0 L286.3,512.6 L283.2,510.1 L279.8,507.3 L276.2,504.4 L272.2,501.1 L267.9,497.5 L263.0,493.3 L257.5,488.6 L251.7,483.6 L245.9,478.5 L240.4,473.6 L235.5,469.1 L231.4,465.2 L227.8,461.8 L224.5,458.6 L221.3,455.2 L217.9,451.5 L214.0,447.2 L209.8,442.4 L205.3,437.2 L200.6,431.6 L195.7,425.7 L190.7,419.4 L185.6,412.8 L180.3,405.9 L174.9,398.5 L169.3,390.8 L163.6,382.8 L157.8,374.4 L152.0,365.8 L146.0,356.7 L140.0,347.3 L133.8,337.5 L127.7,327.5 L121.5,317.4 L115.5,307.2 L109.5,296.9 L103.4,286.4 L97.4,275.7 L91.5,265.0 L85.8,254.4 L80.4,243.9 L75.3,233.5 L70.4,223.1 L65.6,212.7 L61.2,202.6 L56.9,192.6 L53.0,183.1 L49.2,173.8 L45.8,164.8 L42.5,156.0 L39.6,147.6 L36.8,139.5 L34.4,131.8 L32.1,124.6 L30.2,117.7 L28.5,111.2 L27.1,105.1 L25.8,99.3 L24.7,93.7 L23.8,88.5 L23.2,83.7 L22.7,79.2 L22.5,75.0 L22.4,71.0 L22.4,67.2 L22.6,63.6 L23.0,60.3 L23.5,57.2 L24.2,54.3 L25.1,51.5 L26.1,49.0 L27.2,46.6 L28.5,44.4 L29.9,42.4 L31.4,40.6 L33.1,38.9 L34.8,37.4 L36.6,36.1 L38.6,34.9 L40.6,33.9 L42.8,33.0 L45.0,32.2 L47.2,31.5 L49.5,30.9 L51.9,30.5 L54.3,30.1 L56.8,29.8 L59.4,29.6 L61.9,29.3 L64.5,29.1 L67.2,29.0 L69.9,28.9 L72.6,28.9 L75.3,28.8 L78.0,28.8 L80.7,28.8 L83.4,28.8 L86.1,28.8 L88.8,28.9 L91.6,28.9 L94.3,29.0 L97.1,29.1 L99.9,29.2 L102.7,29.3 L105.6,29.5 L108.5,29.6 L111.4,29.8 L114.3,30.0 L117.3,30.2 L120.4,30.4 L123.5,30.6 L126.6,30.9 L129.7,31.1 L132.9,31.4 L136.2,31.7 L139.5,32.0 L142.8,32.3 L146.2,32.6 L149.7,32.9 L153.2,33.3 L156.8,33.6 L160.4,34.0 L164.0,34.4 L167.8,34.7 L171.6,35.1 L175.5,35.5 L179.4,36.0 L183.4,36.4 L187.5,36.8 L191.7,37.3 L195.9,37.7 L200.2,38.2 L204.6,38.7 L209.0,39.2 L213.5,39.7 L218.1,40.2 L222.8,40.8 L227.5,41.3 L232.4,41.8 L237.3,42.4 L242.3,43.0 L247.4,43.5 L252.5,44.1 L257.8,44.7 L263.1,45.3 L268.5,45.9 L274.0,46.6 L279.6,47.2 L285.2,47.9 L290.9,48.5 L296.8,49.2 L302.7,49.9 L308.7,50.6 L314.7,51.3 L320.9,52.0 L327.1,52.7 L333.4,53.4 L339.8,54.2 L346.2,54.9 L352.8,55.7 L359.3,56.4 L366.0,57.2 L372.7,57.9 L379.5,58.7 L386.3,59.5 L393.1,60.3 L400.0,61.1 L406.9,61.9 L413.9,62.7 L420.9,63.5 L427.9,64.3 L434.9,65.1 L441.8,65.9 L448.2,66.7 L454.1,67.3 L460.0,68.0 L466.3,68.7 L473.6,69.6 L482.3,70.6 L493.0,71.8 L505.4,73.2 L518.8,74.8 L532.4,76.3 L545.5,77.8 L557.5,79.2 L568.4,80.5 L578.8,81.7 L588.8,82.8 L598.3,83.9 L607.4,85.0 L615.9,86.0 L623.9,86.9 L631.4,87.7 L638.4,88.5 L645.0,89.3 L651.3,90.0 L657.4,90.7 L663.2,91.4 L668.7,92.0 L673.9,92.6 L678.8,93.2 L683.4,93.7 L687.7,94.2 L691.6,94.7 L694.9,95.0 L698.0,95.4 L701.0,95.7 L704.1,96.1 L707.7,96.5 L712.0,97.0 L717.0,97.6 L722.1,98.2 L726.9,98.7 L731.0,99.2 L733.9,99.5 Z')"><div style="filter:blur(3px)"><div style="height:8px;background:linear-gradient(90deg,#009900,#009900,#009900,#009900,#009900,#009900,#009900,#009900,#009900,#009900,#009900,#009900,#009900,#009900,#009900,#009900,#009900,#009900,#009900,#009900,#049900,#0e9900,#189900,#229900,#2d9900,#389900,#439900,#4f9900,#5c9900,#699900,#769900,#849900,#939900,#999000,#998300,#997800,#996e00,#996500,#995d00,#995600,#995000,#994a00,#994500,#994000,#993c00,#993700,#993400,#993000,#992d00,#992a00,#992700,#992400,#992200,#992000,#991d00,#991b00,#991900,#991800,#991600,#991400,#991300,#991100,#991000,#990e00,#990d00,#990c00,#990a00,#990900,#990800,#990700,#990600,#990500,#990400,#990300,#990200,#990200,#990100,#990000,#990000,#990000,#990000,#990000,#990000,#990000,#990000,#990000,#990000,#990000,#990000,#990000,#990000,#990000,#990000)"></div><div style="height:8px;background:linear-gradient(90deg,#009900,#009900,#009900,#009900,#009900,#009900,#009900,#009900,#009900,#009900,#009900,#009900,#009900,#009900,#009900,#009900,#009900,#009900,#009900,#009900,#039900,#0d9900,#179900,#219900,#2c9900,#379900,#439900,#4f9900,#5c9900,#699900,#779900,#859900,#949900,#998f00,#998200,#997600,#996c00,#996300,#995c00,#995500,#994e00,#994900,#994300,#993f00,#993a00,#993600,#993200,#992f00,#992c00,#992900,#992600,#992300,#992100,#991e00,#991c00,#991a00,#991800,#991600,#991500,#991300,#991200,#991000,#990f00,#990d00,#990c00,#990b00,#990a00,#990800,#990700,#990600,#990500,#990400,#990300,#990200,#990200,#990100,#990000,#990000,#990000,#990000,#990000,#990000,#990000,#990000,#990000,#990000,#990000,#990000,#990000,#990000,#990000,#990000,#990000)"></div><div style="height:8px;background:linear-gradient(90deg,#009900,#009900,#009900,#009900,#009900,#009900,#009900,#009900,#009900,#009900,#009900,#009900,#009900,#009900,#009900,#009900,#009900,#009900,#009900,#009900,#019900,#0b9900,#159900,#209900,#2b9900,#379900,#429900,#4f9900,#5c9900,#699900,#779900,#869900,#969900,#998d00,#998000,#997500,#996b00,#996200,#995a00,#995300,#994d00,#994700,#994200,#993d00,#993900,#993500,#993100,#992e00,#992a00,#992700,#992500,#992200,#992000,#991d00,#991b00,#991900,#991700,#991500,#991400,#991200,#991100,#990f00,#990e00,#990c00,#990b00,#990a00,#990900,#990800,#990600,#990500,#990400,#990300,#990300,#990200,#990100,#990000,#990000,#990000,#990000,#990000,#990000,#990000,#990000,#990000,#990000,#990000,#990000,#990000,#990000,#990000,#990000,#990000,#990000)"></div><div style="height:8px;background:linear-gradient(90deg,#009900,#009900,#009900,#009900,#009900,#009900,#009900,#009900,#009900,#009900,#009900,#009900,#009900,#009900,#009900,#009900,#009900,#009900,#009900,#009900,#009900,#0a9900,#149900,#1f9900,#2a9900,#369900,#429900,#4f9900,#5c9900,#6a9900,#789900,#879900,#979900,#998c00,#997e00,#997300,#996900,#996000,#995800,#995200,#994b00,#994600,#994000,#993c00,#993700,#993300,#993000,#992c00,#992900,#992600,#992300,#992100,#991e00,#991c00,#991a00,#991800,#991600,#991400,#991300,#991100,#991000,#990e00,#990d00,#990b00,#990a00,#990900,#990800,#990700,#990600,#990500,#990400,#990300,#990200,#990100,#990000,#990000,#990000,#990000,#990000,#990000,#990000,#990000,#990000,#990000,#990000,#990000,#990000,#990000,#990000,#990000,#990000,#990000,#990000)"></div><div style="height:8px;background:linear-gradient(90deg,#009900,#009900,#009900,#009900,#009900,#009900,#009900,#009900,#009900,#009900,#009900,#009900,#009900,#009900,#009900,#009900,#009900,#009900,#009900,#009900,#009900,#089900,#139900,#1e9900,#299900,#359900,#429900,#4e9900,#5c9900,#6a9900,#799900,#889900,#999900,#998a00,#997d00,#997100,#996700,#995f00,#995700,#995000,#994a00,#994400,#993f00,#993a00,#993600,#993200,#992e00,#992b00,#992800,#992500,#992200,#992000,#991d00,#991b00,#991900,#991700,#991500,#991300,#991200,#991000,#990e00,#990d00,#990c00,#990a00,#990900,#990800,#990700,#990600,#990500,#990400,#990300,#990200,#990100,#990000,#990000,#990000,#990000,#990000,#990000,#990000,#990000,#990000,#990000,#990000,#990000,#990000,#990000,#990000,#990000,#990000,#990000,#990000,#990000)"></div><div style="height:8px;background:linear-gradient(90deg,#009906,#009906,#009906,#009906,#009906,#009905,#009904,#009904,#009903,#009902,#009902,#009901,#009900,#009900,#009900,#009900,#009900,#009900,#009900,#009900,#009900,#079900,#129900,#1d9900,#289900,#349900,#419900,#4e9900,#5c9900,#6b9900,#7a9900,#8a9900,#999800,#998800,#997b00,#997000,#996600,#995d00,#995500,#994e00,#994800,#994200,#993d00,#993900,#993400,#993000,#992d00,#992a00,#992600,#992400,#992100,#991e00,#991c00,#991a00,#991800,#991600,#991400,#991200,#991100,#990f00,#990d00,#990c00,#990b00,#990900,#990800,#990700,#990600,#990500,#990400,#990300,#990200,#990100,#990000,#990000,#990000,#990000,#990000,#990000,#990000,#990000,#990000,#990000,#990000,#990000,#990000,#990000,#990000,#990000,#990000,#990000,#990000,#990000,#990000)"></div><div style="height:8px;background:linear-gradient(90deg,#00990e,#00990e,#00990e,#00990e,#00990d,#00990d,#00990c,#00990b,#00990b,#00990a,#00990a,#009909,#009909,#009908,#009907,#009907,#009906,#009905,#009904,#009903,#009903,#059902,#109901,#1b9900,#279900,#349900,#419900,#4e9900,#5c9900,#6b9900,#7a9900,#8b9900,#999600,#998700,#997900,#996e00,#996400,#995b00,#995400,#994d00,#994600,#994100,#993c00,#993700,#993300,#992f00,#992b00,#992800,#992500,#992200,#992000,#991d00,#991b00,#991900,#991700,#991500,#991300,#991100,#990f00,#990e00,#990c00,#990b00,#990a00,#990800,#990700,#990600,#990500,#990400,#990300,#990200,#990100,#990000,#990000,#990000,#990000,#990000,#990000,#990000,#990000,#990000,#990000,#990000,#990000,#990000,#990000,#990000,#990000,#990000,#990000,#990000,#990000,#990000,#990000)"></div><div style="height:8px;background:linear-gradient(90deg,#009915,#009915,#009915,#009915,#009915,#009914,#009914,#009913,#009913,#009913,#009912,#009912,#009911,#009911,#009910,#009910,#00990f,#00990e,#00990e,#00990d,#00990d,#04990c,#0f990b,#1a990a,#26990a,#339909,#409908,#4e9907,#5c9906,#6b9905,#7b9904,#8c9903,#999502,#998501,#997800,#996c00,#996200,#995a00,#995200,#994b00,#994500,#993f00,#993a00,#993600,#993100,#992e00,#992a00,#992700,#992400,#992100,#991e00,#991c00,#991a00,#991700,#991500,#991300,#991200,#991000,#990e00,#990d00,#990b00,#990a00,#990900,#990700,#990600,#990500,#990400,#990300,#990200,#990100,#990000,#990000,#990000,#990000,#990000,#990000,#990000,#990000,#990000,#990000,#990000,#990000,#990000,#990000,#990000,#990000,#990000,#990000,#990000,#990000,#990000,#990000,#990000)"></div><div style="height:8px;background:linear-gradient(90deg,#00991d,#00991d,#00991d,#00991d,#00991d,#00991c,#00991c,#00991c,#00991b,#00991b,#00991b,#00991a,#00991a,#00991a,#009919,#009919,#009919,#009918,#009918,#009917,#009917,#029916,#0d9916,#199915,#259915,#329914,#409914,#4e9913,#5c9912,#6c9912,#7c9911,#8d9910,#99930f,#99830c,#99760a,#996a09,#996007,#995806,#995005,#994904,#994303,#993e02,#993901,#993401,#993000,#992c00,#992900,#992500,#992200,#992000,#991d00,#991b00,#991800,#991600,#991400,#991200,#991100,#990f00,#990d00,#990c00,#990a00,#990900,#990800,#990600,#990500,#990400,#990300,#990200,#990100,#990000,#990000,#990000,#990000,#990000,#990000,#990000,#990000,#990000,#990000,#990000,#990000,#990000,#990000,#990000,#990000,#990000,#990000,#990000,#990000,#990000,#990000,#990000,#990000)"></div><div style="height:8px;background:linear-gradient(90deg,#009925,#009925,#009925,#009925,#009925,#009925,#009924,#009924,#009924,#009924,#009924,#009923,#009923,#009923,#009923,#009923,#009922,#009922,#009922,#009922,#009921,#009921,#0c9921,#189921,#249920,#319920,#3f9920,#4d991f,#5d991f,#6c991f,#7d991e,#8f991e,#99911c,#998118,#997415,#996913,#995f11,#99560f,#994e0d,#99470c,#99410a,#993c09,#993708,#993207,#992e06,#992b06,#992705,#992404,#992103,#991e03,#991c02,#991902,#991701,#991501,#991300,#991100,#990f00,#990e00,#990c00,#990b00,#990900,#990800,#990700,#990500,#990400,#990300,#990200,#990100,#990000,#990000,#990000,#990000,#990000,#990000,#990000,#990000,#990000,#990000,#990000,#990000,#990000,#990000,#990000,#990000,#990000,#990000,#990000,#990000,#990000,#990000,#990000,#990000,#990000)"></div><div style="height:8px;background:linear-gradient(90deg,#00992d,#00992d,#00992d,#00992d,#00992d,#00992d,#00992d,#00992d,#00992d,#00992d,#00992d,#00992d,#00992d,#00992d,#00992d,#00992d,#00992d,#00992d,#00992d,#00992d,#00992d,#00992d,#0a992d,#16992d,#23992c,#30992c,#3e992c,#4d992c,#5d992c,#6d992c,#7e992c,#90992c,#998f29,#997f25,#997221,#99671d,#995d1b,#995418,#994c16,#994614,#994012,#993a11,#99350f,#99310e,#992d0d,#99290c,#99260b,#99220a,#992009,#991d08,#991a07,#991807,#991606,#991405,#991205,#991004,#990e04,#990d03,#990b03,#990a02,#990802,#990702,#990601,#990401,#990301,#990200,#990100,#990000,#990000,#990000,#990000,#990000,#990000,#990000,#990000,#990000,#990000,#990000,#990000,#990000,#990000,#990000,#990000,#990000,#990000,#990000,#990000,#990000,#990000,#990000,#990000,#990000,#990000)"></div><div style="height:8px;background:linear-gradient(90deg,#009935,#009935,#009935,#009936,#009936,#009936,#009936,#009936,#009936,#009936,#009936,#009937,#009937,#009937,#009937,#009937,#009937,#009938,#009938,#009938,#009938,#009938,#089939,#159939,#229939,#2f9939,#3e993a,#4d993a,#5d993a,#6e993b,#7f993b,#92993b,#998d37,#997d31,#99702c,#996528,#995b25,#995221,#994b1f,#99441c,#993e1a,#993918,#993416,#992f14,#992b13,#992812,#992410,#99210f,#991e0e,#991b0d,#99190c,#99170b,#99140b,#99120a,#991009,#990f08,#990d08,#990b07,#990a07,#990806,#990706,#990605,#990505,#990304,#990204,#990103,#990003,#990003,#990002,#990002,#990002,#990001,#990001,#990001,#990001,#990000,#990000,#990000,#990000,#990000,#990000,#990000,#990000,#990000,#990000,#990000,#990000,#990000,#990000,#990000,#990000,#990000,#990000)"></div><div style="height:8px;background:linear-gradient(90deg,#00993e,#00993e,#00993e,#00993e,#00993f,#00993f,#00993f,#00993f,#009940,#009940,#009940,#009941,#009941,#009941,#009942,#009942,#009943,#009943,#009943,#009944,#009944,#009945,#069945,#139946,#209947,#2e9947,#3d9948,#4d9948,#5d9949,#6e994a,#80994b,#94994c,#998b46,#997b3e,#996e38,#996333,#99592f,#99502b,#994927,#994224,#993c22,#99371f,#99321d,#992e1b,#992a19,#992618,#992316,#992015,#991d14,#991a12,#991811,#991510,#99130f,#99110e,#990f0e,#990d0d,#990c0c,#990a0b,#99090b,#99070a,#990609,#990509,#990408,#990208,#990107,#990007,#990006,#990006,#990005,#990005,#990005,#990004,#990004,#990004,#990003,#990003,#990003,#990002,#990002,#990002,#990002,#990001,#990001,#990001,#990001,#990000,#990000,#990000,#990000,#990000,#990000,#990000,#990000)"></div><div style="height:8px;background:linear-gradient(90deg,#009947,#009947,#009947,#009947,#009948,#009948,#009949,#009949,#00994a,#00994a,#00994b,#00994b,#00994c,#00994c,#00994d,#00994d,#00994e,#00994f,#009950,#009950,#009951,#009952,#059953,#129954,#1f9954,#2d9955,#3c9956,#4c9958,#5d9959,#6f995a,#81995b,#95995d,#998954,#99794c,#996c45,#99613e,#995739,#994e35,#994731,#99402d,#993a2a,#993527,#993024,#992c22,#992820,#99241e,#99211c,#991e1b,#991b19,#991918,#991616,#991415,#991214,#991013,#990e12,#990c11,#990b10,#99090f,#99080f,#99060e,#99050d,#99040c,#99020c,#99010b,#99000b,#99000a,#99000a,#990009,#990009,#990008,#990008,#990007,#990007,#990006,#990006,#990006,#990005,#990005,#990005,#990004,#990004,#990004,#990003,#990003,#990003,#990003,#990002,#990002,#990002,#990002,#990001,#990001,#990001)"></div><div style="height:8px;background:linear-gradient(90deg,#009950,#009950,#009950,#009951,#009951,#009952,#009953,#009953,#009954,#009955,#009955,#009956,#009957,#009958,#009958,#009959,#00995a,#00995b,#00995c,#00995d,#00995e,#00995f,#039961,#109962,#1e9963,#2c9965,#3c9966,#4c9968,#5d9969,#6f996b,#83996d,#97996f,#998764,#99775a,#996a51,#995f4a,#995544,#994c3f,#99453a,#993e36,#993832,#99332f,#992e2c,#992a29,#992627,#992324,#992022,#991d20,#991a1f,#99171d,#99151c,#99131a,#991019,#990f18,#990d16,#990b15,#990914,#990813,#990613,#990512,#990411,#990310,#99010f,#99000f,#99000e,#99000d,#99000d,#99000c,#99000c,#99000b,#99000b,#99000a,#99000a,#990009,#990009,#990008,#990008,#990008,#990007,#990007,#990006,#990006,#990006,#990006,#990005,#990005,#990005,#990004,#990004,#990004,#990004,#990003,#990003)"></div><div style="height:8px;background:linear-gradient(90deg,#00995a,#00995a,#00995a,#00995a,#00995b,#00995c,#00995d,#00995e,#00995e,#00995f,#009960,#009961,#009962,#009963,#009964,#009966,#009967,#009968,#009969,#00996b,#00996c,#00996e,#00996f,#0e9971,#1c9973,#2b9974,#3b9976,#4c9978,#5d997b,#70997d,#84997f,#999982,#998573,#997568,#99685e,#995c56,#99534f,#994a49,#994343,#993c3f,#99373a,#993137,#992d33,#992830,#99252d,#99212b,#991e28,#991b26,#991824,#991622,#991321,#99111f,#990f1e,#990d1c,#990b1b,#990a1a,#990819,#990718,#990517,#990416,#990315,#990114,#990013,#990012,#990011,#990011,#990010,#99000f,#99000f,#99000e,#99000e,#99000d,#99000d,#99000c,#99000c,#99000b,#99000b,#99000a,#99000a,#990009,#990009,#990009,#990008,#990008,#990008,#990007,#990007,#990007,#990006,#990006,#990006,#990005,#990005)"></div><div style="height:8px;background:linear-gradient(90deg,#009964,#009964,#009964,#009964,#009965,#009966,#009967,#009968,#009969,#00996b,#00996c,#00996d,#00996e,#009970,#009971,#009972,#009974,#009975,#009977,#009979,#00997b,#00997c,#00997e,#0c9981,#1b9983,#2a9985,#3a9988,#4b998a,#5e998d,#719990,#859993,#999794,#998384,#997376,#99666b,#995a62,#99515a,#994853,#99414d,#993a48,#993543,#99303f,#992b3b,#992737,#992334,#991f31,#991c2f,#99192c,#99172a,#991428,#991226,#991024,#990e23,#990c21,#990a20,#99081e,#99071d,#99051c,#99041b,#99031a,#990219,#990018,#990017,#990016,#990015,#990014,#990013,#990013,#990012,#990011,#990011,#990010,#99000f,#99000f,#99000e,#99000e,#99000d,#99000d,#99000c,#99000c,#99000b,#99000b,#99000b,#99000a,#99000a,#990009,#990009,#990009,#990008,#990008,#990008,#990007,#990007)"></div><div style="height:8px;background:linear-gradient(90deg,#00996e,#00996e,#00996e,#00996f,#009970,#009971,#009972,#009973,#009975,#009976,#009978,#009979,#00997b,#00997c,#00997e,#009980,#009982,#009983,#009985,#009988,#00998a,#00998c,#00998f,#0a9991,#199994,#299997,#399899,#499599,#599299,#6a8f99,#7b8b99,#8c8899,#998195,#997185,#996379,#99586e,#994e65,#99465e,#993f57,#993851,#99334b,#992e47,#992942,#99253f,#99213b,#991e38,#991b35,#991832,#991530,#99132e,#99102b,#990e29,#990c28,#990b26,#990924,#990723,#990621,#990420,#99031f,#99021e,#99001c,#99001b,#99001a,#990019,#990018,#990017,#990017,#990016,#990015,#990014,#990014,#990013,#990012,#990012,#990011,#990011,#990010,#99000f,#99000f,#99000e,#99000e,#99000d,#99000d,#99000d,#99000c,#99000c,#99000b,#99000b,#99000b,#99000a,#99000a,#99000a,#990009)"></div><div style="height:8px;background:linear-gradient(90deg,#009979,#009979,#009979,#009979,#00997b,#00997c,#00997e,#00997f,#009981,#009982,#009984,#009986,#009988,#009989,#00998c,#00998e,#009990,#009992,#009995,#009997,#009899,#009699,#009399,#089099,#158d99,#248a99,#328799,#408499,#4f8199,#5e7e99,#6e7b99,#7d7899,#8d7599,#996e95,#996187,#99567b,#994c71,#994468,#993d61,#99365a,#993154,#992c4f,#99274a,#992346,#991f42,#991c3f,#99193b,#991638,#991436,#991133,#990f31,#990d2f,#990b2d,#99092b,#990729,#990627,#990426,#990324,#990223,#990022,#990020,#99001f,#99001e,#99001d,#99001c,#99001b,#99001a,#990019,#990018,#990017,#990017,#990016,#990015,#990015,#990014,#990013,#990013,#990012,#990012,#990011,#990010,#990010,#99000f,#99000f,#99000f,#99000e,#99000e,#99000d,#99000d,#99000c,#99000c,#99000c,#99000b)"></div><div style="height:8px;background:linear-gradient(90deg,#009984,#009984,#009984,#009984,#009986,#009988,#009989,#00998b,#00998d,#00998f,#009991,#009993,#009995,#009997,#009899,#009699,#009399,#009199,#008e99,#008c99,#008999,#008799,#008499,#058199,#127f99,#1f7c99,#2c7999,#397699,#477399,#557099,#636d99,#716a99,#7f6799,#8e6499,#995e95,#995388,#994a7d,#994273,#993a6b,#993464,#992f5d,#992a57,#992552,#99214e,#991e49,#991a45,#991742,#99153f,#99123c,#991039,#990e36,#990b34,#990a32,#990830,#99062e,#99052c,#99032a,#990229,#990027,#990026,#990024,#990023,#990022,#990021,#99001f,#99001e,#99001d,#99001c,#99001b,#99001b,#99001a,#990019,#990018,#990017,#990017,#990016,#990015,#990015,#990014,#990014,#990013,#990012,#990012,#990011,#990011,#990010,#990010,#99000f,#99000f,#99000f,#99000e,#99000e,#99000d)"></div><div style="height:8px;background:linear-gradient(90deg,#00998f,#00998f,#00998f,#009990,#009992,#009994,#009995,#009998,#009899,#009699,#009499,#009299,#008f99,#008d99,#008b99,#008999,#008699,#008499,#008199,#007f99,#007c99,#007a99,#007799,#037599,#0f7299,#1b6f99,#276d99,#336a99,#406799,#4c6499,#596299,#665f99,#745c99,#815999,#8f5699,#995196,#994789,#993f7f,#993876,#99326d,#992d66,#992860,#99235a,#991f55,#991c51,#99194c,#991648,#991345,#991042,#990e3f,#990c3c,#990a39,#990837,#990635,#990532,#990331,#99022f,#99012d,#99002b,#99002a,#990028,#990027,#990025,#990024,#990023,#990022,#990021,#990020,#99001f,#99001e,#99001d,#99001c,#99001b,#99001a,#99001a,#990019,#990018,#990017,#990017,#990016,#990016,#990015,#990014,#990014,#990013,#990013,#990012,#990012,#990011,#990011,#990010,#990010,#99000f)"></div><div style="height:8px;background:linear-gradient(90deg,#009799,#009799,#009799,#009699,#009499,#009299,#009099,#008e99,#008c99,#008a99,#008899,#008699,#008499,#008199,#007f99,#007d99,#007b99,#007899,#007699,#007499,#007199,#006f99,#006c99,#016a99,#0c6799,#176599,#226299,#2e6099,#395d99,#455a99,#515899,#5d5599,#695299,#764f99,#824c99,#8f4999,#994596,#993d8a,#993680,#993077,#992a70,#992669,#992163,#991e5d,#991a58,#991753,#99144f,#99114b,#990f48,#990d45,#990a41,#99093f,#99073c,#99053a,#990337,#990235,#990133,#990031,#990030,#99002e,#99002c,#99002b,#990029,#990028,#990027,#990025,#990024,#990023,#990022,#990021,#990020,#99001f,#99001e,#99001d,#99001c,#99001c,#99001b,#99001a,#990019,#990019,#990018,#990017,#990017,#990016,#990016,#990015,#990015,#990014,#990013,#990013,#990012,#990012,#990012)"></div><div style="height:8px;background:linear-gradient(90deg,#008c99,#008c99,#008c99,#008b99,#008999,#008799,#008599,#008399,#008199,#007f99,#007d99,#007b99,#007999,#007799,#007599,#007399,#007099,#006e99,#006c99,#006a99,#006799,#006599,#006399,#006099,#095e99,#145b99,#1e5999,#295699,#345499,#3f5199,#4a4f99,#554c99,#614999,#6c4799,#784499,#844199,#903e99,#993b96,#99348b,#992e82,#992879,#992472,#991f6b,#991c65,#99185f,#99155a,#991256,#991052,#990d4e,#990b4a,#990947,#990744,#990541,#99043f,#99023c,#99013a,#990038,#990036,#990034,#990032,#990030,#99002f,#99002d,#99002c,#99002a,#990029,#990028,#990026,#990025,#990024,#990023,#990022,#990021,#990020,#99001f,#99001e,#99001e,#99001d,#99001c,#99001b,#99001b,#99001a,#990019,#990019,#990018,#990017,#990017,#990016,#990016,#990015,#990015,#990014,#990014)"></div><div style="height:8px;background:linear-gradient(90deg,#008299,#008299,#008299,#008299,#008099,#007e99,#007c99,#007a99,#007899,#007699,#007499,#007299,#007099,#006e99,#006c99,#006a99,#006799,#006599,#006399,#006199,#005f99,#005c99,#005a99,#005899,#075699,#115399,#1b5199,#254e99,#2f4c99,#3a4a99,#444799,#4e4599,#594299,#643f99,#6f3d99,#7a3a99,#853899,#903599,#993196,#992b8c,#992683,#99217b,#991d73,#991a6d,#991667,#991362,#99105d,#990e58,#990c54,#990950,#99074d,#99064a,#990447,#990244,#990141,#99003f,#99003c,#99003a,#990038,#990036,#990034,#990033,#990031,#99002f,#99002e,#99002c,#99002b,#99002a,#990029,#990027,#990026,#990025,#990024,#990023,#990022,#990021,#990020,#990020,#99001f,#99001e,#99001d,#99001c,#99001c,#99001b,#99001a,#99001a,#990019,#990019,#990018,#990017,#990017,#990016,#990016)"></div><div style="height:8px;background:linear-gradient(90deg,#007999,#007999,#007999,#007999,#007799,#007599,#007399,#007199,#006f99,#006d99,#006b99,#006a99,#006899,#006699,#006499,#006199,#005f99,#005d99,#005b99,#005999,#005799,#005599,#005399,#005099,#054e99,#0f4c99,#184a99,#214799,#2b4599,#354399,#3e4099,#483e99,#523b99,#5c3999,#673799,#713499,#7b3199,#862f99,#912c99,#992997,#99248d,#991f84,#991b7c,#991875,#99146f,#991169,#990f64,#990c5f,#990a5b,#990856,#990653,#99044f,#99024c,#990149,#990046,#990044,#990041,#99003f,#99003d,#99003a,#990038,#990037,#990035,#990033,#990032,#990030,#99002f,#99002d,#99002c,#99002b,#990029,#990028,#990027,#990026,#990025,#990024,#990023,#990022,#990021,#990021,#990020,#99001f,#99001e,#99001e,#99001d,#99001c,#99001b,#99001b,#99001a,#99001a,#990019,#990018,#990018)"></div><div style="height:8px;background:linear-gradient(90deg,#007199,#007199,#007199,#007199,#006f99,#006d99,#006b99,#006999,#006899,#006699,#006499,#006299,#006099,#005e99,#005c99,#005a99,#005899,#005699,#005499,#005299,#005099,#004e99,#004c99,#004a99,#044899,#0c4599,#154399,#1e4199,#273f99,#303d99,#3a3a99,#433899,#4c3699,#563399,#5f3199,#692f99,#732c99,#7d2a99,#872799,#912599,#992297,#991d8d,#991985,#99167d,#991277,#990f70,#990d6b,#990a66,#990861,#99065d,#990459,#990255,#990151,#99004e,#99004b,#990048,#990046,#990043,#990041,#99003f,#99003d,#99003b,#990039,#990037,#990035,#990034,#990032,#990031,#99002f,#99002e,#99002d,#99002b,#99002a,#990029,#990028,#990027,#990026,#990025,#990024,#990023,#990022,#990022,#990021,#990020,#99001f,#99001f,#99001e,#99001d,#99001c,#99001c,#99001b,#99001b,#99001a)"></div><div style="height:8px;background:linear-gradient(90deg,#006a99,#006a99,#006a99,#006999,#006899,#006699,#006499,#006299,#006199,#005f99,#005d99,#005b99,#005999,#005799,#005699,#005499,#005299,#005099,#004e99,#004c99,#004a99,#004899,#004699,#004499,#024299,#0a4099,#133d99,#1b3b99,#243999,#2d3799,#353599,#3e3399,#473099,#502e99,#592c99,#622a99,#6b2799,#752599,#7e2399,#882099,#911e99,#991b97,#99178e,#991486,#99107f,#990e78,#990b72,#99096d,#990667,#990463,#99035f,#99015b,#990057,#990054,#990050,#99004d,#99004b,#990048,#990045,#990043,#990041,#99003f,#99003d,#99003b,#990039,#990037,#990036,#990034,#990033,#990031,#990030,#99002f,#99002d,#99002c,#99002b,#99002a,#990029,#990028,#990027,#990026,#990025,#990024,#990023,#990022,#990022,#990021,#990020,#99001f,#99001f,#99001e,#99001d,#99001d,#99001c)"></div><div style="height:8px;background:linear-gradient(90deg,#006399,#006399,#006399,#006399,#006199,#005f99,#005e99,#005c99,#005a99,#005899,#005799,#005599,#005399,#005199,#004f99,#004e99,#004c99,#004a99,#004899,#004699,#004499,#004299,#004099,#003e99,#013c99,#093a99,#113899,#193699,#213499,#293299,#313099,#3a2e99,#422c99,#4b2a99,#532799,#5c2599,#652399,#6e2199,#761e99,#7f1c99,#891a99,#921799,#991597,#99118e,#990e87,#990c80,#990979,#990773,#99056e,#990369,#990165,#990060,#99005d,#990059,#990055,#990052,#99004f,#99004d,#99004a,#990047,#990045,#990043,#990041,#99003f,#99003d,#99003b,#990039,#990038,#990036,#990035,#990033,#990032,#990031,#99002f,#99002e,#99002d,#99002c,#99002b,#99002a,#990029,#990028,#990027,#990026,#990025,#990024,#990023,#990023,#990022,#990021,#990020,#990020,#99001f,#99001e)"></div><div style="height:8px;background:linear-gradient(90deg,#005d99,#005d99,#005d99,#005d99,#005b99,#005999,#005899,#005699,#005499,#005399,#005199,#004f99,#004d99,#004c99,#004a99,#004899,#004699,#004599,#004399,#004199,#003f99,#003d99,#003b99,#003999,#003799,#073599,#0f3499,#163299,#1e3099,#262e99,#2e2c99,#362999,#3e2799,#462599,#4e2399,#562199,#5f1f99,#671d99,#6f1b99,#781899,#811699,#891499,#921299,#990f97,#990c8f,#990a87,#990781,#99057a,#990375,#990170,#99006b,#990066,#990062,#99005e,#99005b,#990057,#990054,#990051,#99004e,#99004c,#990049,#990047,#990045,#990043,#990041,#99003f,#99003d,#99003b,#99003a,#990038,#990036,#990035,#990034,#990032,#990031,#990030,#99002f,#99002d,#99002c,#99002b,#99002a,#990029,#990028,#990028,#990027,#990026,#990025,#990024,#990023,#990023,#990022,#990021,#990021)"></div><div style="height:8px;background:linear-gradient(90deg,#005899,#005899,#005899,#005799,#005599,#005499,#005299,#005199,#004f99,#004d99,#004c99,#004a99,#004899,#004799,#004599,#004399,#004199,#004099,#003e99,#003c99,#003a99,#003999,#003799,#003599,#003399,#063199,#0d2f99,#142d99,#1c2b99,#232999,#2b2899,#322699,#3a2499,#412299,#492099,#511d99,#591b99,#611999,#691799,#711599,#791399,#821199,#8a0f99,#920d99,#990a97,#99088f,#990588,#990382,#99017c,#990076,#990071,#99006c,#990068,#990064,#990060,#99005c,#990059,#990056,#990053,#990050,#99004e,#99004b,#990049,#990047,#990044,#990042,#990041,#99003f,#99003d,#99003b,#99003a,#990038,#990037,#990035,#990034,#990033,#990032,#990030,#99002f,#99002e,#99002d,#99002c,#99002b,#99002a,#990029,#990028,#990027,#990027,#990026,#990025,#990024,#990023,#990023)"></div><div style="height:8px;background:linear-gradient(90deg,#005399,#005399,#005399,#005299,#005099,#004f99,#004d99,#004c99,#004a99,#004899,#004799,#004599,#004499,#004299,#004099,#003f99,#003d99,#003b99,#003999,#003899,#003699,#003499,#003299,#003199,#002f99,#042d99,#0b2b99,#122999,#192899,#202699,#282499,#2f2299,#362099,#3d1e99,#451c99,#4c1a99,#541899,#5c1699,#631499,#6b1299,#731099,#7b0e99,#820c99,#8a0a99,#930899,#990697,#990390,#990189,#990082,#99007d,#990077,#990072,#99006e,#990069,#990065,#990062,#99005e,#99005b,#990058,#990055,#990052,#99004f,#99004d,#99004b,#990048,#990046,#990044,#990042,#990040,#99003f,#99003d,#99003b,#99003a,#990038,#990037,#990036,#990034,#990033,#990032,#990031,#990030,#99002f,#99002e,#99002d,#99002c,#99002b,#99002a,#990029,#990028,#990027,#990026,#990026,#990025)"></div><div style="height:8px;background:linear-gradient(90deg,#004e99,#004e99,#004e99,#004d99,#004c99,#004a99,#004999,#004799,#004599,#004499,#004299,#004199,#003f99,#003e99,#003c99,#003a99,#003999,#003799,#003599,#003499,#003299,#003099,#002f99,#002d99,#002b99,#032999,#0a2899,#102699,#172499,#1e2299,#252099,#2c1f99,#331d99,#3a1b99,#411999,#481799,#4f1599,#571399,#5e1199,#650f99,#6d0d99,#740b99,#7c0999,#830799,#8b0599,#930399,#990197,#990090,#990089,#990083,#99007e,#990078,#990073,#99006f,#99006b,#990067,#990063,#990060,#99005c,#990059,#990056,#990054,#990051,#99004f,#99004c,#99004a,#990048,#990046,#990044,#990042,#990040,#99003f,#99003d,#99003c,#99003a,#990039,#990037,#990036,#990035,#990034,#990032,#990031,#990030,#99002f,#99002e,#99002d,#99002c,#99002b,#99002a,#99002a,#990029,#990028,#990027)"></div><div style="height:8px;background:linear-gradient(90deg,#004999,#004999,#004999,#004999,#004799,#004699,#004499,#004399,#004199,#004099,#003e99,#003d99,#003b99,#003a99,#003899,#003699,#003599,#003399,#003299,#003099,#002e99,#002d99,#002b99,#002999,#002899,#022699,#082499,#0f2399,#152199,#1c1f99,#221d99,#291c99,#301a99,#361899,#3d1699,#441499,#4b1299,#521199,#590f99,#600d99,#670b99,#6e0999,#760799,#7d0599,#840399,#8c0199,#930099,#990098,#990090,#99008a,#990084,#99007e,#990079,#990075,#990070,#99006c,#990068,#990064,#990061,#99005e,#99005b,#990058,#990055,#990053,#990050,#99004e,#99004c,#99004a,#990048,#990046,#990044,#990042,#990040,#99003f,#99003d,#99003c,#99003a,#990039,#990038,#990036,#990035,#990034,#990033,#990032,#990031,#990030,#99002f,#99002e,#99002d,#99002c,#99002b,#99002a,#990029)"></div><div style="height:8px;background:linear-gradient(90deg,#004599,#004599,#004599,#004599,#004399,#004299,#004099,#003f99,#003d99,#003c99,#003a99,#003999,#003799,#003699,#003499,#003399,#003199,#003099,#002e99,#002d99,#002b99,#002999,#002899,#002699,#002499,#012399,#072199,#0d2099,#131e99,#1a1c99,#201a99,#261999,#2d1799,#331599,#3a1499,#401299,#471099,#4e0e99,#540c99,#5b0b99,#620999,#690799,#700599,#770399,#7e0199,#850099,#8c0099,#930099,#990098,#990091,#99008a,#990085,#99007f,#99007a,#990076,#990071,#99006d,#990069,#990066,#990062,#99005f,#99005c,#990059,#990057,#990054,#990052,#99004f,#99004d,#99004b,#990049,#990047,#990045,#990044,#990042,#990040,#99003f,#99003d,#99003c,#99003a,#990039,#990038,#990037,#990035,#990034,#990033,#990032,#990031,#990030,#99002f,#99002e,#99002d,#99002c,#99002b)"></div><div style="height:8px;background:linear-gradient(90deg,#004199,#004199,#004199,#004199,#003f99,#003e99,#003c99,#003b99,#003a99,#003899,#003799,#003599,#003499,#003299,#003199,#002f99,#002e99,#002c99,#002b99,#002999,#002899,#002699,#002599,#002399,#002299,#002099,#061e99,#0c1d99,#121b99,#181999,#1e1899,#241699,#2a1499,#301399,#371199,#3d0f99,#430e99,#4a0c99,#500a99,#570899,#5d0799,#640599,#6b0399,#710199,#780099,#7f0099,#860099,#8c0099,#930099,#990098,#990091,#99008b,#990085,#990080,#99007b,#990077,#990072,#99006e,#99006b,#990067,#990064,#990061,#99005e,#99005b,#990058,#990056,#990053,#990051,#99004f,#99004d,#99004b,#990049,#990047,#990045,#990043,#990042,#990040,#99003f,#99003d,#99003c,#99003b,#990039,#990038,#990037,#990036,#990035,#990034,#990032,#990031,#990030,#990030,#99002f,#99002e)"></div><div style="height:8px;background:linear-gradient(90deg,#003e99,#003e99,#003e99,#003d99,#003c99,#003a99,#003999,#003899,#003699,#003599,#003399,#003299,#003199,#002f99,#002e99,#002c99,#002b99,#002999,#002899,#002699,#002599,#002399,#002299,#002099,#001f99,#001d99,#051c99,#0a1a99,#101899,#161799,#1c1599,#221499,#281299,#2e1099,#340f99,#3a0d99,#400b99,#460a99,#4c0899,#530699,#590599,#5f0399,#660199,#6c0099,#730099,#790099,#800099,#860099,#8d0099,#940099,#990098,#990091,#99008b,#990086,#990081,#99007c,#990078,#990073,#99006f,#99006c,#990068,#990065,#990062,#99005f,#99005c,#99005a,#990057,#990055,#990052,#990050,#99004e,#99004c,#99004a,#990048,#990047,#990045,#990043,#990042,#990040,#99003f,#99003d,#99003c,#99003b,#99003a,#990038,#990037,#990036,#990035,#990034,#990033,#990032,#990031,#990030)"></div><div style="height:8px;background:linear-gradient(90deg,#003a99,#003a99,#003a99,#003a99,#003899,#003799,#003699,#003499,#003399,#003299,#003099,#002f99,#002e99,#002c99,#002b99,#002999,#002899,#002699,#002599,#002499,#002299,#002199,#001f99,#001e99,#001c99,#001b99,#041999,#091899,#0f1699,#141599,#1a1399,#201199,#251099,#2b0e99,#310d99,#370b99,#3d0999,#430899,#490699,#4f0599,#550399,#5b0199,#610099,#670099,#6d0099,#740099,#7a0099,#800099,#870099,#8d0099,#940099,#990098,#990092,#99008c,#990087,#990082,#99007d,#990079,#990074,#990071,#99006d,#990069,#990066,#990063,#990060,#99005d,#99005b,#990058,#990056,#990054,#990052,#99004f,#99004d,#99004c,#99004a,#990048,#990046,#990045,#990043,#990042,#990040,#99003f,#99003d,#99003c,#99003b,#99003a,#990039,#990037,#990036,#990035,#990034,#990033,#990032)"></div><div style="height:8px;background:linear-gradient(90deg,#003799,#003799,#003799,#003799,#003599,#003499,#003399,#003199,#003099,#002f99,#002d99,#002c99,#002b99,#002999,#002899,#002799,#002599,#002499,#002299,#002199,#002099,#001e99,#001d99,#001b99,#001a99,#001899,#031799,#081599,#0d1499,#131299,#181199,#1e0f99,#230e99,#290c99,#2f0b99,#340999,#3a0899,#400699,#450499,#4b0399,#510199,#570099,#5d0099,#630099,#690099,#6f0099,#750099,#7b0099,#810099,#870099,#8e0099,#940099,#990098,#990092,#99008c,#990087,#990082,#99007e,#990079,#990075,#990072,#99006e,#99006b,#990067,#990064,#990061,#99005f,#99005c,#99005a,#990057,#990055,#990053,#990051,#99004f,#99004d,#99004b,#990049,#990048,#990046,#990044,#990043,#990042,#990040,#99003f,#99003d,#99003c,#99003b,#99003a,#990039,#990038,#990037,#990035,#990034)"></div><div style="height:8px;background:linear-gradient(90deg,#003499,#003499,#003499,#003499,#003299,#003199,#003099,#002e99,#002d99,#002c99,#002b99,#002999,#002899,#002799,#002599,#002499,#002399,#002199,#002099,#001e99,#001d99,#001c99,#001a99,#001999,#001799,#001699,#021599,#071399,#0c1299,#111099,#170f99,#1c0d99,#210c99,#270a99,#2c0999,#320799,#370699,#3d0499,#420399,#480199,#4e0099,#530099,#590099,#5f0099,#640099,#6a0099,#700099,#760099,#7c0099,#820099,#880099,#8e0099,#940099,#990098,#990092,#99008d,#990088,#990083,#99007e,#99007a,#990076,#990073,#99006f,#99006c,#990068,#990065,#990063,#990060,#99005d,#99005b,#990059,#990056,#990054,#990052,#990050,#99004e,#99004c,#99004b,#990049,#990047,#990046,#990044,#990043,#990041,#990040,#99003f,#99003e,#99003c,#99003b,#99003a,#990039,#990038,#990037)"></div><div style="height:8px;background:linear-gradient(90deg,#003199,#003199,#003199,#003199,#003099,#002e99,#002d99,#002c99,#002b99,#002999,#002899,#002799,#002599,#002499,#002399,#002199,#002099,#001f99,#001e99,#001c99,#001b99,#001999,#001899,#001799,#001599,#001499,#011399,#061199,#0b1099,#100e99,#150d99,#1a0b99,#200a99,#250999,#2a0799,#2f0699,#350499,#3a0399,#3f0199,#450099,#4a0099,#500099,#550099,#5b0099,#600099,#660099,#6c0099,#710099,#770099,#7d0099,#830099,#880099,#8e0099,#940099,#990098,#990092,#99008d,#990088,#990083,#99007f,#99007b,#990077,#990073,#990070,#99006d,#99006a,#990067,#990064,#990061,#99005f,#99005c,#99005a,#990058,#990055,#990053,#990051,#99004f,#99004e,#99004c,#99004a,#990049,#990047,#990046,#990044,#990043,#990041,#990040,#99003f,#99003e,#99003c,#99003b,#99003a,#990039)"></div><div style="height:8px;background:linear-gradient(90deg,#002f99,#002f99,#002f99,#002e99,#002d99,#002c99,#002a99,#002999,#002899,#002799,#002699,#002499,#002399,#002299,#002099,#001f99,#001e99,#001d99,#001b99,#001a99,#001999,#001799,#001699,#001599,#001399,#001299,#001199,#050f99,#0a0e99,#0f0d99,#140b99,#190a99,#1e0899,#230799,#280599,#2d0499,#320399,#370199,#3d0099,#420099,#470099,#4c0099,#520099,#570099,#5c0099,#620099,#670099,#6d0099,#720099,#780099,#7e0099,#830099,#890099,#8e0099,#940099,#990098,#990093,#99008d,#990089,#990084,#990080,#99007c,#990078,#990074,#990071,#99006e,#99006b,#990068,#990065,#990062,#990060,#99005d,#99005b,#990059,#990057,#990055,#990053,#990051,#99004f,#99004d,#99004b,#99004a,#990048,#990047,#990045,#990044,#990043,#990041,#990040,#99003f,#99003e,#99003c,#99003b)"></div><div style="height:8px;background:linear-gradient(90deg,#002c99,#002c99,#002c99,#002c99,#002a99,#002999,#002899,#002799,#002699,#002499,#002399,#002299,#002199,#001f99,#001e99,#001d99,#001c99,#001a99,#001999,#001899,#001799,#001599,#001499,#001399,#001199,#001099,#000f99,#040d99,#090c99,#0e0b99,#120999,#170899,#1c0799,#210599,#260499,#2b0399,#300199,#350099,#3a0099,#3f0099,#440099,#490099,#4e0099,#540099,#590099,#5e0099,#630099,#690099,#6e0099,#730099,#790099,#7e0099,#840099,#890099,#8f0099,#940099,#990098,#990093,#99008e,#990089,#990085,#990080,#99007c,#990079,#990075,#990072,#99006f,#99006c,#990069,#990066,#990063,#990061,#99005e,#99005c,#99005a,#990058,#990056,#990054,#990052,#990050,#99004e,#99004d,#99004b,#99004a,#990048,#990047,#990045,#990044,#990042,#990041,#990040,#99003f,#99003e)"></div><div style="height:8px;background:linear-gradient(90deg,#002a99,#002a99,#002a99,#002999,#002899,#002799,#002699,#002599,#002399,#002299,#002199,#002099,#001f99,#001d99,#001c99,#001b99,#001a99,#001899,#001799,#001699,#001599,#001399,#001299,#001199,#001099,#000e99,#000d99,#030c99,#080a99,#0c0999,#110899,#160799,#1b0599,#1f0499,#240399,#290199,#2e0099,#330099,#380099,#3c0099,#410099,#460099,#4b0099,#500099,#550099,#5b0099,#600099,#650099,#6a0099,#6f0099,#740099,#7a0099,#7f0099,#840099,#8a0099,#8f0099,#940099,#990098,#990093,#99008e,#990089,#990085,#990081,#99007d,#990079,#990076,#990073,#99006f,#99006c,#99006a,#990067,#990064,#990062,#99005f,#99005d,#99005b,#990059,#990057,#990055,#990053,#990051,#990050,#99004e,#99004c,#99004b,#990049,#990048,#990046,#990045,#990044,#990042,#990041,#990040)"></div><div style="height:8px;background:linear-gradient(90deg,#002799,#002799,#002799,#002799,#002699,#002599,#002499,#002299,#002199,#002099,#001f99,#001e99,#001d99,#001b99,#001a99,#001999,#001899,#001799,#001599,#001499,#001399,#001299,#001099,#000f99,#000e99,#000d99,#000b99,#020a99,#070999,#0b0899,#100699,#140599,#190499,#1e0299,#220199,#270099,#2c0099,#300099,#350099,#3a0099,#3f0099,#440099,#480099,#4d0099,#520099,#570099,#5c0099,#610099,#660099,#6b0099,#700099,#750099,#7a0099,#800099,#850099,#8a0099,#8f0099,#950099,#990098,#990093,#99008e,#99008a,#990086,#990082,#99007e,#99007a,#990077,#990073,#990070,#99006d,#99006b,#990068,#990065,#990063,#990060,#99005e,#99005c,#99005a,#990058,#990056,#990054,#990052,#990051,#99004f,#99004d,#99004c,#99004a,#990049,#990047,#990046,#990045,#990044,#990042)"></div><div style="height:8px;background:linear-gradient(90deg,#002599,#002599,#002599,#002599,#002499,#002399,#002199,#002099,#001f99,#001e99,#001d99,#001c99,#001b99,#001999,#001899,#001799,#001699,#001599,#001499,#001299,#001199,#001099,#000f99,#000e99,#000c99,#000b99,#000a99,#020999,#060799,#0a0699,#0f0599,#130499,#180299,#1c0199,#210099,#250099,#2a0099,#2e0099,#330099,#380099,#3c0099,#410099,#460099,#4a0099,#4f0099,#540099,#590099,#5e0099,#630099,#670099,#6c0099,#710099,#760099,#7b0099,#800099,#850099,#8a0099,#8f0099,#950099,#990098,#990093,#99008f,#99008a,#990086,#990082,#99007e,#99007b,#990077,#990074,#990071,#99006e,#99006b,#990069,#990066,#990064,#990061,#99005f,#99005d,#99005b,#990059,#990057,#990055,#990053,#990052,#990050,#99004e,#99004d,#99004b,#99004a,#990049,#990047,#990046,#990045)"></div><div style="height:8px;background:linear-gradient(90deg,#002399,#002399,#002399,#002399,#002299,#002199,#001f99,#001e99,#001d99,#001c99,#001b99,#001a99,#001999,#001899,#001799,#001599,#001499,#001399,#001299,#001199,#001099,#000e99,#000d99,#000c99,#000b99,#000a99,#000899,#010799,#050699,#090599,#0e0499,#120299,#160199,#1b0099,#1f0099,#240099,#280099,#2c0099,#310099,#350099,#3a0099,#3f0099,#430099,#480099,#4c0099,#510099,#560099,#5a0099,#5f0099,#640099,#690099,#6d0099,#720099,#770099,#7c0099,#810099,#860099,#8b0099,#900099,#950099,#990098,#990093,#99008f,#99008b,#990086,#990083,#99007f,#99007b,#990078,#990075,#990072,#99006f,#99006c,#99006a,#990067,#990065,#990062,#990060,#99005e,#99005c,#99005a,#990058,#990056,#990054,#990053,#990051,#990050,#99004e,#99004c,#99004b,#99004a,#990048,#990047)"></div><div style="height:8px;background:linear-gradient(90deg,#002199,#002199,#002199,#002199,#002099,#001f99,#001e99,#001d99,#001b99,#001a99,#001999,#001899,#001799,#001699,#001599,#001499,#001399,#001199,#001099,#000f99,#000e99,#000d99,#000c99,#000b99,#000999,#000899,#000799,#000699,#040599,#080499,#0d0299,#110199,#150099,#190099,#1e0099,#220099,#260099,#2b0099,#2f0099,#330099,#380099,#3c0099,#410099,#450099,#4a0099,#4e0099,#530099,#570099,#5c0099,#610099,#650099,#6a0099,#6e0099,#730099,#780099,#7d0099,#810099,#860099,#8b0099,#900099,#950099,#990098,#990094,#99008f,#99008b,#990087,#990083,#99007f,#99007c,#990079,#990076,#990073,#990070,#99006d,#99006b,#990068,#990066,#990063,#990061,#99005f,#99005d,#99005b,#990059,#990057,#990055,#990054,#990052,#990051,#99004f,#99004e,#99004c,#99004b,#990049)"></div><div style="height:8px;background:linear-gradient(90deg,#001f99,#001f99,#001f99,#001f99,#001e99,#001d99,#001c99,#001b99,#001a99,#001999,#001899,#001699,#001599,#001499,#001399,#001299,#001199,#001099,#000f99,#000e99,#000d99,#000b99,#000a99,#000999,#000899,#000799,#000699,#000599,#030399,#080299,#0c0199,#100099,#140099,#180099,#1c0099,#200099,#250099,#290099,#2d0099,#310099,#360099,#3a0099,#3e0099,#430099,#470099,#4c0099,#500099,#540099,#590099,#5d0099,#620099,#660099,#6b0099,#6f0099,#740099,#790099,#7d0099,#820099,#870099,#8b0099,#900099,#950099,#990098,#990094,#99008f,#99008b,#990087,#990084,#990080,#99007d,#990079,#990076,#990073,#990071,#99006e,#99006b,#990069,#990067,#990064,#990062,#990060,#99005e,#99005c,#99005a,#990058,#990056,#990055,#990053,#990052,#990050,#99004f,#99004d,#99004c)"></div><div style="height:8px;background:linear-gradient(90deg,#001e99,#001e99,#001e99,#001d99,#001c99,#001b99,#001a99,#001999,#001899,#001799,#001699,#001599,#001499,#001399,#001299,#001199,#001099,#000e99,#000d99,#000c99,#000b99,#000a99,#000999,#000899,#000799,#000699,#000599,#000399,#030299,#070199,#0b0099,#0f0099,#130099,#170099,#1b0099,#1f0099,#230099,#270099,#2b0099,#300099,#340099,#380099,#3c0099,#400099,#450099,#490099,#4d0099,#520099,#560099,#5a0099,#5f0099,#630099,#670099,#6c0099,#700099,#750099,#790099,#7e0099,#830099,#870099,#8c0099,#900099,#950099,#990098,#990094,#990090,#99008c,#990088,#990084,#990081,#99007d,#99007a,#990077,#990074,#990071,#99006f,#99006c,#99006a,#990067,#990065,#990063,#990061,#99005f,#99005d,#99005b,#990059,#990057,#990056,#990054,#990053,#990051,#990050,#99004e)"></div><div style="height:8px;background:linear-gradient(90deg,#001c99,#001c99,#001c99,#001c99,#001b99,#001a99,#001899,#001799,#001699,#001599,#001499,#001399,#001299,#001199,#001099,#000f99,#000e99,#000d99,#000c99,#000b99,#000a99,#000999,#000899,#000799,#000699,#000499,#000399,#000299,#020199,#060099,#0a0099,#0e0099,#120099,#160099,#1a0099,#1e0099,#220099,#260099,#2a0099,#2e0099,#320099,#360099,#3a0099,#3e0099,#420099,#470099,#4b0099,#4f0099,#530099,#570099,#5c0099,#600099,#640099,#690099,#6d0099,#710099,#760099,#7a0099,#7f0099,#830099,#870099,#8c0099,#900099,#950099,#990098,#990094,#990090,#99008c,#990088,#990084,#990081,#99007e,#99007b,#990078,#990075,#990072,#99006f,#99006d,#99006a,#990068,#990066,#990064,#990062,#990060,#99005e,#99005c,#99005a,#990058,#990057,#990055,#990054,#990052,#990051)"></div><div style="height:8px;background:linear-gradient(90deg,#001a99,#001a99,#001a99,#001a99,#001999,#001899,#001799,#001699,#001599,#001499,#001399,#001299,#001199,#001099,#000f99,#000e99,#000d99,#000c99,#000b99,#000a99,#000999,#000899,#000699,#000599,#000499,#000399,#000299,#000199,#010099,#050099,#090099,#0d0099,#110099,#150099,#180099,#1c0099,#200099,#240099,#280099,#2c0099,#300099,#340099,#380099,#3c0099,#400099,#440099,#480099,#4c0099,#510099,#550099,#590099,#5d0099,#610099,#650099,#6a0099,#6e0099,#720099,#760099,#7b0099,#7f0099,#830099,#880099,#8c0099,#910099,#950099,#990098,#990094,#990090,#99008c,#990088,#990085,#990082,#99007e,#99007b,#990078,#990075,#990073,#990070,#99006e,#99006b,#990069,#990067,#990065,#990063,#990061,#99005f,#99005d,#99005b,#990059,#990058,#990056,#990054,#990053)"></div><div style="height:8px;background:linear-gradient(90deg,#001999,#001999,#001999,#001899,#001799,#001699,#001599,#001499,#001399,#001299,#001299,#001199,#001099,#000f99,#000e99,#000c99,#000b99,#000a99,#000999,#000899,#000799,#000699,#000599,#000499,#000399,#000299,#000199,#000099,#010099,#040099,#080099,#0c0099,#100099,#130099,#170099,#1b0099,#1f0099,#230099,#270099,#2a0099,#2e0099,#320099,#360099,#3a0099,#3e0099,#420099,#460099,#4a0099,#4e0099,#520099,#560099,#5a0099,#5e0099,#620099,#670099,#6b0099,#6f0099,#730099,#770099,#7b0099,#800099,#840099,#880099,#8d0099,#910099,#950099,#990098,#990094,#990090,#99008c,#990089,#990085,#990082,#99007f,#99007c,#990079,#990076,#990073,#990071,#99006e,#99006c,#99006a,#990068,#990065,#990063,#990061,#990060,#99005e,#99005c,#99005a,#990059,#990057,#990055)"></div><div style="height:8px;background:linear-gradient(90deg,#001799,#001799,#001799,#001799,#001699,#001599,#001499,#001399,#001299,#001199,#001099,#000f99,#000e99,#000d99,#000c99,#000b99,#000a99,#000999,#000899,#000799,#000699,#000599,#000499,#000399,#000299,#000199,#000099,#000099,#000099,#040099,#070099,#0b0099,#0f0099,#120099,#160099,#1a0099,#1e0099,#210099,#250099,#290099,#2d0099,#300099,#340099,#380099,#3c0099,#400099,#440099,#480099,#4c0099,#500099,#540099,#570099,#5b0099,#5f0099,#640099,#680099,#6c0099,#700099,#740099,#780099,#7c0099,#800099,#840099,#890099,#8d0099,#910099,#950099,#990098,#990094,#990090,#99008d,#990089,#990086,#990082,#99007f,#99007c,#990079,#990077,#990074,#990072,#99006f,#99006d,#99006a,#990068,#990066,#990064,#990062,#990060,#99005f,#99005d,#99005b,#990059,#990058)"></div><div style="height:8px;background:linear-gradient(90deg,#001699,#001699,#001699,#001599,#001599,#001499,#001399,#001299,#001199,#001099,#000f99,#000e99,#000d99,#000c99,#000b99,#000a99,#000999,#000899,#000799,#000699,#000599,#000499,#000399,#000299,#000199,#000099,#000099,#000099,#000099,#030099,#070099,#0a0099,#0e0099,#110099,#150099,#190099,#1c0099,#200099,#240099,#270099,#2b0099,#2f0099,#330099,#360099,#3a0099,#3e0099,#420099,#450099,#490099,#4d0099,#510099,#550099,#590099,#5d0099,#610099,#650099,#690099,#6d0099,#710099,#750099,#790099,#7d0099,#810099,#850099,#890099,#8d0099,#910099,#950099,#990099,#990094,#990091,#99008d,#990089,#990086,#990083,#990080,#99007d,#99007a,#990077,#990075,#990072,#990070,#99006d,#99006b,#990069,#990067,#990065,#990063,#990061,#99005f,#99005e,#99005c,#99005a)"></div><div style="height:8px;background:linear-gradient(90deg,#001499,#001499,#001499,#001499,#001399,#001299,#001199,#001099,#000f99,#000f99,#000e99,#000d99,#000c99,#000b99,#000a99,#000999,#000899,#000799,#000699,#000599,#000499,#000399,#000299,#000199,#000099,#000099,#000099,#000099,#000099,#030099,#060099,#090099,#0d0099,#110099,#140099,#180099,#1b0099,#1f0099,#220099,#260099,#2a0099,#2d0099,#310099,#350099,#380099,#3c0099,#400099,#430099,#470099,#4b0099,#4f0099,#520099,#560099,#5a0099,#5e0099,#620099,#660099,#6a0099,#6d0099,#710099,#750099,#790099,#7d0099,#810099,#850099,#890099,#8d0099,#910099,#950099,#990099,#990095,#990091,#99008d,#99008a,#990086,#990083,#990080,#99007d,#99007b,#990078,#990075,#990073,#990070,#99006e,#99006c,#99006a,#990068,#990066,#990064,#990062,#990060,#99005e,#99005d)"></div><div style="height:8px;background:linear-gradient(90deg,#001399,#001399,#001399,#001399,#001299,#001199,#001099,#000f99,#000e99,#000d99,#000c99,#000b99,#000b99,#000a99,#000999,#000899,#000799,#000699,#000599,#000499,#000399,#000299,#000199,#000099,#000099,#000099,#000099,#000099,#000099,#020099,#050099,#090099,#0c0099,#100099,#130099,#170099,#1a0099,#1e0099,#210099,#250099,#280099,#2c0099,#2f0099,#330099,#360099,#3a0099,#3e0099,#410099,#450099,#490099,#4c0099,#500099,#540099,#580099,#5b0099,#5f0099,#630099,#670099,#6a0099,#6e0099,#720099,#760099,#7a0099,#7e0099,#820099,#860099,#8a0099,#8d0099,#910099,#950099,#990099,#990095,#990091,#99008d,#99008a,#990087,#990084,#990081,#99007e,#99007b,#990078,#990076,#990073,#990071,#99006f,#99006d,#99006a,#990068,#990066,#990065,#990063,#990061,#99005f)"></div><div style="height:8px;background:linear-gradient(90deg,#001299,#001299,#001299,#001299,#001199,#001099,#000f99,#000e99,#000d99,#000c99,#000b99,#000a99,#000999,#000999,#000899,#000799,#000699,#000599,#000499,#000399,#000299,#000199,#000099,#000099,#000099,#000099,#000099,#000099,#000099,#010099,#050099,#080099,#0b0099,#0f0099,#120099,#160099,#190099,#1c0099,#200099,#230099,#270099,#2a0099,#2e0099,#310099,#350099,#380099,#3c0099,#3f0099,#430099,#470099,#4a0099,#4e0099,#510099,#550099,#590099,#5c0099,#600099,#640099,#680099,#6b0099,#6f0099,#730099,#770099,#7a0099,#7e0099,#820099,#860099,#8a0099,#8e0099,#920099,#950099,#990099,#990095,#990091,#99008e,#99008a,#990087,#990084,#990081,#99007e,#99007c,#990079,#990076,#990074,#990072,#99006f,#99006d,#99006b,#990069,#990067,#990065,#990063,#990062)"></div><div style="height:8px;background:linear-gradient(90deg,#001199,#001199,#001199,#001099,#000f99,#000f99,#000e99,#000d99,#000c99,#000b99,#000a99,#000999,#000899,#000799,#000799,#000699,#000599,#000499,#000399,#000299,#000199,#000099,#000099,#000099,#000099,#000099,#000099,#000099,#000099,#010099,#040099,#070099,#0b0099,#0e0099,#110099,#150099,#180099,#1b0099,#1f0099,#220099,#250099,#290099,#2c0099,#300099,#330099,#370099,#3a0099,#3e0099,#410099,#450099,#480099,#4c0099,#4f0099,#530099,#560099,#5a0099,#5e0099,#610099,#650099,#690099,#6c0099,#700099,#740099,#770099,#7b0099,#7f0099,#830099,#860099,#8a0099,#8e0099,#920099,#960099,#990099,#990095,#990091,#99008e,#99008b,#990087,#990084,#990082,#99007f,#99007c,#990079,#990077,#990075,#990072,#990070,#99006e,#99006c,#99006a,#990068,#990066,#990064)"></div><div style="height:8px;background:linear-gradient(90deg,#000f99,#000f99,#000f99,#000f99,#000e99,#000d99,#000d99,#000c99,#000b99,#000a99,#000999,#000899,#000799,#000699,#000699,#000599,#000499,#000399,#000299,#000199,#000099,#000099,#000099,#000099,#000099,#000099,#000099,#000099,#000099,#000099,#030099,#070099,#0a0099,#0d0099,#100099,#140099,#170099,#1a0099,#1e0099,#210099,#240099,#280099,#2b0099,#2e0099,#320099,#350099,#380099,#3c0099,#3f0099,#430099,#460099,#4a0099,#4d0099,#510099,#540099,#580099,#5b0099,#5f0099,#620099,#660099,#690099,#6d0099,#710099,#740099,#780099,#7c0099,#7f0099,#830099,#870099,#8a0099,#8e0099,#920099,#960099,#990099,#990095,#990091,#99008e,#99008b,#990088,#990085,#990082,#99007f,#99007d,#99007a,#990077,#990075,#990073,#990071,#99006f,#99006c,#99006a,#990069,#990067)"></div><div style="height:8px;background:linear-gradient(90deg,#000e99,#000e99,#000e99,#000e99,#000d99,#000c99,#000b99,#000b99,#000a99,#000999,#000899,#000799,#000699,#000599,#000599,#000499,#000399,#000299,#000199,#000099,#000099,#000099,#000099,#000099,#000099,#000099,#000099,#000099,#000099,#000099,#030099,#060099,#090099,#0c0099,#100099,#130099,#160099,#190099,#1c0099,#200099,#230099,#260099,#2a0099,#2d0099,#300099,#330099,#370099,#3a0099,#3d0099,#410099,#440099,#480099,#4b0099,#4e0099,#520099,#550099,#590099,#5c0099,#600099,#630099,#670099,#6a0099,#6e0099,#710099,#750099,#790099,#7c0099,#800099,#830099,#870099,#8b0099,#8e0099,#920099,#960099,#990099,#990095,#990092,#99008e,#99008b,#990088,#990085,#990082,#990080,#99007d,#99007a,#990078,#990076,#990073,#990071,#99006f,#99006d,#99006b,#990069)"></div><div style="height:8px;background:linear-gradient(90deg,#000d99,#000d99,#000d99,#000d99,#000c99,#000b99,#000a99,#000a99,#000999,#000899,#000799,#000699,#000599,#000599,#000499,#000399,#000299,#000199,#000099,#000099,#000099,#000099,#000099,#000099,#000099,#000099,#000099,#000099,#000099,#000099,#020099,#050099,#090099,#0c0099,#0f0099,#120099,#150099,#180099,#1b0099,#1f0099,#220099,#250099,#280099,#2b0099,#2f0099,#320099,#350099,#380099,#3c0099,#3f0099,#420099,#460099,#490099,#4c0099,#500099,#530099,#570099,#5a0099,#5d0099,#610099,#640099,#680099,#6b0099,#6f0099,#720099,#760099,#790099,#7d0099,#800099,#840099,#870099,#8b0099,#8e0099,#920099,#960099,#990099,#990095,#990092,#99008e,#99008b,#990088,#990085,#990083,#990080,#99007d,#99007b,#990079,#990076,#990074,#990072,#990070,#99006e,#99006c)"></div><div style="height:8px;background:linear-gradient(90deg,#000c99,#000c99,#000c99,#000c99,#000b99,#000a99,#000999,#000999,#000899,#000799,#000699,#000599,#000499,#000499,#000399,#000299,#000199,#000099,#000099,#000099,#000099,#000099,#000099,#000099,#000099,#000099,#000099,#000099,#000099,#000099,#020099,#050099,#080099,#0b0099,#0e0099,#110099,#140099,#170099,#1a0099,#1e0099,#210099,#240099,#270099,#2a0099,#2d0099,#300099,#340099,#370099,#3a0099,#3d0099,#410099,#440099,#470099,#4a0099,#4e0099,#510099,#540099,#580099,#5b0099,#5e0099,#620099,#650099,#680099,#6c0099,#6f0099,#730099,#760099,#7a0099,#7d0099,#810099,#840099,#880099,#8b0099,#8f0099,#920099,#960099,#990099,#990095,#990092,#99008f,#99008c,#990089,#990086,#990083,#990080,#99007e,#99007b,#990079,#990077,#990074,#990072,#990070,#99006e)"></div><div style="height:8px;background:linear-gradient(90deg,#000b99,#000b99,#000b99,#000b99,#000a99,#000999,#000899,#000899,#000799,#000699,#000599,#000499,#000499,#000399,#000299,#000199,#000099,#000099,#000099,#000099,#000099,#000099,#000099,#000099,#000099,#000099,#000099,#000099,#000099,#000099,#010099,#040099,#070099,#0a0099,#0d0099,#100099,#130099,#160099,#190099,#1c0099,#200099,#230099,#260099,#290099,#2c0099,#2f0099,#320099,#350099,#390099,#3c0099,#3f0099,#420099,#450099,#490099,#4c0099,#4f0099,#520099,#550099,#590099,#5c0099,#5f0099,#630099,#660099,#690099,#6d0099,#700099,#730099,#770099,#7a0099,#7e0099,#810099,#840099,#880099,#8b0099,#8f0099,#920099,#960099,#990099,#990095,#990092,#99008f,#99008c,#990089,#990086,#990083,#990081,#99007e,#99007c,#990079,#990077,#990075,#990073,#990071)"></div><div style="height:8px;background:linear-gradient(90deg,#000a99,#000a99,#000a99,#000a99,#000999,#000899,#000899,#000799,#000699,#000599,#000499,#000499,#000399,#000299,#000199,#000099,#000099,#000099,#000099,#000099,#000099,#000099,#000099,#000099,#000099,#000099,#000099,#000099,#000099,#000099,#010099,#040099,#070099,#0a0099,#0d0099,#100099,#120099,#150099,#180099,#1b0099,#1f0099,#220099,#250099,#280099,#2b0099,#2e0099,#310099,#340099,#370099,#3a0099,#3d0099,#400099,#440099,#470099,#4a0099,#4d0099,#500099,#530099,#570099,#5a0099,#5d0099,#600099,#640099,#670099,#6a0099,#6d0099,#710099,#740099,#770099,#7b0099,#7e0099,#810099,#850099,#880099,#8c0099,#8f0099,#920099,#960099,#990099,#990095,#990092,#99008f,#99008c,#990089,#990086,#990084,#990081,#99007f,#99007c,#99007a,#990078,#990076,#990073)"></div><div style="height:8px;background:linear-gradient(90deg,#000999,#000999,#000999,#000999,#000899,#000799,#000799,#000699,#000599,#000499,#000399,#000399,#000299,#000199,#000099,#000099,#000099,#000099,#000099,#000099,#000099,#000099,#000099,#000099,#000099,#000099,#000099,#000099,#000099,#000099,#000099,#030099,#060099,#090099,#0c0099,#0f0099,#120099,#150099,#180099,#1b0099,#1d0099,#200099,#230099,#260099,#290099,#2c0099,#2f0099,#330099,#360099,#390099,#3c0099,#3f0099,#420099,#450099,#480099,#4b0099,#4e0099,#510099,#550099,#580099,#5b0099,#5e0099,#610099,#640099,#680099,#6b0099,#6e0099,#710099,#750099,#780099,#7b0099,#7e0099,#820099,#850099,#880099,#8c0099,#8f0099,#920099,#960099,#990099,#990095,#990092,#99008f,#99008c,#990089,#990087,#990084,#990081,#99007f,#99007d,#99007a,#990078,#990076)"></div><div style="height:8px;background:linear-gradient(90deg,#000899,#000899,#000899,#000899,#000799,#000799,#000699,#000599,#000499,#000399,#000399,#000299,#000199,#000099,#000099,#000099,#000099,#000099,#000099,#000099,#000099,#000099,#000099,#000099,#000099,#000099,#000099,#000099,#000099,#000099,#000099,#030099,#060099,#080099,#0b0099,#0e0099,#110099,#140099,#170099,#1a0099,#1d0099,#1f0099,#220099,#250099,#280099,#2b0099,#2e0099,#310099,#340099,#370099,#3a0099,#3d0099,#400099,#430099,#460099,#490099,#4c0099,#4f0099,#530099,#560099,#590099,#5c0099,#5f0099,#620099,#650099,#680099,#6c0099,#6f0099,#720099,#750099,#780099,#7c0099,#7f0099,#820099,#850099,#890099,#8c0099,#8f0099,#930099,#960099,#990099,#990096,#990092,#99008f,#99008c,#99008a,#990087,#990084,#990082,#99007f,#99007d,#99007b,#990079)"></div><div style="height:8px;background:linear-gradient(90deg,#000799,#000799,#000799,#000799,#000699,#000699,#000599,#000499,#000399,#000399,#000299,#000199,#000099,#000099,#000099,#000099,#000099,#000099,#000099,#000099,#000099,#000099,#000099,#000099,#000099,#000099,#000099,#000099,#000099,#000099,#000099,#020099,#050099,#080099,#0b0099,#0d0099,#100099,#130099,#160099,#190099,#1c0099,#1e0099,#210099,#240099,#270099,#2a0099,#2d0099,#300099,#330099,#360099,#390099,#3c0099,#3f0099,#420099,#450099,#480099,#4b0099,#4e0099,#510099,#540099,#570099,#5a0099,#5d0099,#600099,#630099,#660099,#690099,#6c0099,#6f0099,#730099,#760099,#790099,#7c0099,#7f0099,#830099,#860099,#890099,#8c0099,#8f0099,#930099,#960099,#990099,#990096,#990093,#990090,#99008d,#99008a,#990087,#990085,#990082,#990080,#99007d,#99007b)"></div><div style="height:8px;background:linear-gradient(90deg,#000799,#000799,#000799,#000699,#000699,#000599,#000499,#000399,#000399,#000299,#000199,#000099,#000099,#000099,#000099,#000099,#000099,#000099,#000099,#000099,#000099,#000099,#000099,#000099,#000099,#000099,#000099,#000099,#000099,#000099,#000099,#020099,#040099,#070099,#0a0099,#0d0099,#0f0099,#120099,#150099,#180099,#1b0099,#1d0099,#200099,#230099,#260099,#290099,#2c0099,#2f0099,#310099,#340099,#370099,#3a0099,#3d0099,#400099,#430099,#460099,#490099,#4c0099,#4f0099,#520099,#550099,#580099,#5b0099,#5e0099,#610099,#640099,#670099,#6a0099,#6d0099,#700099,#730099,#760099,#790099,#7d0099,#800099,#830099,#860099,#890099,#8c0099,#900099,#930099,#960099,#990099,#990096,#990093,#990090,#99008d,#99008a,#990088,#990085,#990083,#990080,#99007e)"></div><div style="height:8px;background:linear-gradient(90deg,#000699,#000699,#000699,#000699,#000599,#000499,#000499,#000399,#000299,#000199,#000199,#000099,#000099,#000099,#000099,#000099,#000099,#000099,#000099,#000099,#000099,#000099,#000099,#000099,#000099,#000099,#000099,#000099,#000099,#000099,#000099,#020099,#040099,#070099,#0a0099,#0c0099,#0f0099,#120099,#150099,#180099,#1a0099,#1d0099,#200099,#230099,#260099,#280099,#2b0099,#2e0099,#310099,#340099,#370099,#3a0099,#3c0099,#3f0099,#420099,#450099,#480099,#4b0099,#4e0099,#510099,#540099,#570099,#5a0099,#5d0099,#600099,#630099,#660099,#690099,#6c0099,#6f0099,#720099,#750099,#780099,#7c0099,#7f0099,#820099,#850099,#880099,#8b0099,#8e0099,#910099,#950099,#980099,#990097,#990094,#990091,#99008e,#99008b,#990089,#990086,#990084,#990081,#99007f)"></div><div style="height:8px;background:linear-gradient(90deg,#000699,#000699,#000699,#000699,#000599,#000499,#000499,#000399,#000299,#000199,#000199,#000099,#000099,#000099,#000099,#000099,#000099,#000099,#000099,#000099,#000099,#000099,#000099,#000099,#000099,#000099,#000099,#000099,#000099,#000099,#000099,#020099,#040099,#070099,#0a0099,#0c0099,#0f0099,#120099,#150099,#180099,#1a0099,#1d0099,#200099,#230099,#260099,#280099,#2b0099,#2e0099,#310099,#340099,#370099,#3a0099,#3c0099,#3f0099,#420099,#450099,#480099,#4b0099,#4e0099,#510099,#540099,#570099,#5a0099,#5d0099,#600099,#630099,#660099,#690099,#6c0099,#6f0099,#720099,#750099,#780099,#7c0099,#7f0099,#820099,#850099,#880099,#8b0099,#8e0099,#910099,#950099,#980099,#990097,#990094,#990091,#99008e,#99008b,#990089,#990086,#990084,#990081,#99007f)"></div></div></div>
</div></div><div style="position:absolute;left:1353px;top:165px;width:390px;height:378px;clip-path:path('M383.4,45.1 L10.8,10.2 L68.5,366.7 Z')"><div style="filter:blur(2.5px)"><div style="height:6px;background:linear-gradient(90deg,#00ff00,#00ff00,#09ff00,#1bff00,#2bff00,#3bff00,#4bff00,#5aff00,#69ff00,#79ff00,#88ff00,#98ff00,#a8ff00,#b9ff00,#c9ff00,#daff00,#ecff00,#fdff00,#ffef00,#ffe000,#ffd200,#ffc500,#ffba00,#ffaf00,#ffa600,#ff9d00,#ff9500,#ff8d00,#ff8600,#ff7f00,#ff7900,#ff7300,#ff6d00,#ff6800,#ff6300,#ff5e00,#ff5900,#ff5500,#ff5100,#ff4d00,#ff4900,#ff4600,#ff4200,#ff3f00,#ff3c00,#ff3900,#ff3600,#ff3300,#ff3000,#ff2e00,#ff2b00,#ff2900,#ff2600,#ff2400,#ff2200,#ff1f00,#ff1d00,#ff1b00,#ff1900,#ff1700,#ff1500,#ff1300,#ff1100,#ff0f00,#ff0d00,#ff0c00)"></div><div style="height:6px;background:linear-gradient(90deg,#00ff00,#00ff00,#06ff00,#19ff00,#29ff00,#39ff00,#49ff00,#59ff00,#68ff00,#78ff00,#88ff00,#98ff00,#a8ff00,#b9ff00,#caff00,#dbff00,#edff00,#ffff00,#ffee00,#ffde00,#ffd000,#ffc400,#ffb800,#ffad00,#ffa400,#ff9b00,#ff9300,#ff8b00,#ff8400,#ff7d00,#ff7700,#ff7100,#ff6b00,#ff6600,#ff6100,#ff5c00,#ff5800,#ff5300,#ff4f00,#ff4b00,#ff4800,#ff4400,#ff4100,#ff3d00,#ff3a00,#ff3700,#ff3400,#ff3200,#ff2f00,#ff2c00,#ff2a00,#ff2700,#ff2500,#ff2200,#ff2000,#ff1e00,#ff1c00,#ff1a00,#ff1800,#ff1500,#ff1300,#ff1200,#ff1000,#ff0e00,#ff0c00,#ff0a00)"></div><div style="height:6px;background:linear-gradient(90deg,#00ff12,#00ff11,#02ff10,#16ff0e,#27ff0d,#38ff0b,#48ff0a,#58ff08,#68ff06,#78ff04,#88ff01,#98ff00,#a9ff00,#baff00,#cbff00,#dcff00,#eeff00,#fffd00,#ffec00,#ffdc00,#ffce00,#ffc200,#ffb600,#ffac00,#ffa200,#ff9900,#ff9100,#ff8900,#ff8200,#ff7b00,#ff7500,#ff6f00,#ff6900,#ff6400,#ff5f00,#ff5a00,#ff5600,#ff5200,#ff4e00,#ff4a00,#ff4600,#ff4200,#ff3f00,#ff3c00,#ff3900,#ff3600,#ff3300,#ff3000,#ff2d00,#ff2a00,#ff2800,#ff2500,#ff2300,#ff2100,#ff1e00,#ff1c00,#ff1a00,#ff1800,#ff1600,#ff1400,#ff1200,#ff1000,#ff0e00,#ff0c00,#ff0a00,#ff0800)"></div><div style="height:6px;background:linear-gradient(90deg,#00ff22,#00ff21,#00ff20,#14ff1f,#25ff1e,#36ff1d,#46ff1c,#56ff1b,#67ff19,#77ff18,#87ff17,#98ff15,#a9ff14,#baff12,#ccff10,#ddff0f,#f0ff0d,#fffb0b,#ffea08,#ffda05,#ffcc03,#ffc000,#ffb400,#ffa900,#ffa000,#ff9700,#ff8f00,#ff8700,#ff8000,#ff7900,#ff7300,#ff6d00,#ff6700,#ff6200,#ff5d00,#ff5800,#ff5400,#ff5000,#ff4c00,#ff4800,#ff4400,#ff4100,#ff3d00,#ff3a00,#ff3700,#ff3400,#ff3100,#ff2e00,#ff2b00,#ff2900,#ff2600,#ff2400,#ff2100,#ff1f00,#ff1d00,#ff1b00,#ff1800,#ff1600,#ff1400,#ff1200,#ff1000,#ff0e00,#ff0c00,#ff0a00,#ff0800,#ff0600)"></div><div style="height:6px;background:linear-gradient(90deg,#00ff31,#00ff30,#00ff2f,#11ff2f,#23ff2e,#34ff2d,#45ff2c,#55ff2b,#66ff2b,#76ff2a,#87ff29,#98ff28,#a9ff27,#bbff26,#ccff24,#dfff23,#f1ff22,#fffa20,#ffe81d,#ffd819,#ffca17,#ffbe14,#ffb212,#ffa70f,#ff9e0d,#ff950b,#ff8d0a,#ff8508,#ff7e06,#ff7705,#ff7103,#ff6b01,#ff6500,#ff6000,#ff5b00,#ff5700,#ff5200,#ff4e00,#ff4a00,#ff4600,#ff4200,#ff3f00,#ff3b00,#ff3800,#ff3500,#ff3200,#ff2f00,#ff2c00,#ff2a00,#ff2700,#ff2500,#ff2200,#ff2000,#ff1d00,#ff1b00,#ff1900,#ff1700,#ff1500,#ff1300,#ff1100,#ff0f00,#ff0d00,#ff0b00,#ff0900,#ff0700,#ff0400)"></div><div style="height:6px;background:linear-gradient(90deg,#00ff3f,#00ff3f,#00ff3e,#0eff3e,#21ff3d,#32ff3d,#43ff3c,#54ff3c,#65ff3b,#75ff3b,#86ff3a,#98ff39,#a9ff39,#bbff38,#cdff37,#e0ff36,#f3ff36,#fff833,#ffe62f,#ffd62b,#ffc827,#ffbb24,#ffb021,#ffa51e,#ff9c1c,#ff931a,#ff8b18,#ff8316,#ff7c14,#ff7512,#ff6f10,#ff690f,#ff630d,#ff5e0c,#ff590a,#ff5509,#ff5008,#ff4c07,#ff4805,#ff4404,#ff4103,#ff3d02,#ff3a01,#ff3600,#ff3300,#ff3000,#ff2d00,#ff2b00,#ff2800,#ff2500,#ff2300,#ff2000,#ff1e00,#ff1c00,#ff1900,#ff1700,#ff1500,#ff1300,#ff1100,#ff0f00,#ff0d00,#ff0b00,#ff0900,#ff0700,#ff0500,#ff0200)"></div><div style="height:6px;background:linear-gradient(90deg,#00ff4e,#00ff4d,#00ff4d,#0bff4d,#1eff4d,#30ff4c,#41ff4c,#53ff4c,#64ff4c,#75ff4b,#86ff4b,#98ff4b,#a9ff4a,#bcff4a,#ceff4a,#e1ff49,#f5ff49,#fff646,#ffe440,#ffd43c,#ffc637,#ffb933,#ffae30,#ffa32d,#ff9a2a,#ff9127,#ff8824,#ff8122,#ff7a20,#ff731e,#ff6d1c,#ff671a,#ff6118,#ff5c17,#ff5715,#ff5313,#ff4e12,#ff4a11,#ff4610,#ff420e,#ff3f0d,#ff3b0c,#ff380b,#ff350a,#ff3209,#ff2f08,#ff2c07,#ff2906,#ff2605,#ff2404,#ff2103,#ff1f02,#ff1c01,#ff1a00,#ff1800,#ff1600,#ff1300,#ff1100,#ff0f00,#ff0d00,#ff0b00,#ff0900,#ff0700,#ff0500,#ff0200,#ff0000)"></div><div style="height:6px;background:linear-gradient(90deg,#00ff5c,#00ff5c,#00ff5c,#07ff5c,#1cff5c,#2eff5c,#40ff5c,#51ff5c,#62ff5c,#74ff5c,#86ff5c,#97ff5c,#aaff5c,#bcff5c,#cfff5c,#e2ff5c,#f6ff5c,#fff458,#ffe251,#ffd24c,#ffc447,#ffb742,#ffac3e,#ffa13a,#ff9737,#ff8e33,#ff8630,#ff7f2e,#ff782b,#ff7129,#ff6b26,#ff6524,#ff5f22,#ff5a20,#ff551f,#ff511d,#ff4c1b,#ff481a,#ff4419,#ff4017,#ff3d16,#ff3915,#ff3613,#ff3312,#ff3011,#ff2d10,#ff2a0f,#ff270e,#ff240d,#ff220c,#ff1f0b,#ff1d0a,#ff1b09,#ff1809,#ff1608,#ff1407,#ff1206,#ff0f05,#ff0d05,#ff0b04,#ff0903,#ff0702,#ff0502,#ff0301,#ff0000,#ff0000)"></div><div style="height:6px;background:linear-gradient(90deg,#00ff6a,#00ff6a,#00ff6b,#03ff6b,#19ff6b,#2cff6b,#3eff6c,#50ff6c,#61ff6c,#73ff6d,#85ff6d,#97ff6d,#aaff6e,#bdff6e,#d0ff6e,#e4ff6f,#f8ff6f,#fff26a,#ffe062,#ffd05c,#ffc256,#ffb550,#ffa94c,#ff9f47,#ff9543,#ff8c3f,#ff843c,#ff7c39,#ff7536,#ff6f33,#ff6931,#ff632e,#ff5d2c,#ff582a,#ff5328,#ff4f26,#ff4a24,#ff4623,#ff4221,#ff3f20,#ff3b1e,#ff371d,#ff341b,#ff311a,#ff2e19,#ff2b18,#ff2816,#ff2515,#ff2314,#ff2013,#ff1e12,#ff1b11,#ff1910,#ff1610,#ff140f,#ff120e,#ff100d,#ff0e0c,#ff0b0b,#ff090b,#ff070a,#ff0509,#ff0309,#ff0008,#ff0007,#ff0006)"></div><div style="height:6px;background:linear-gradient(90deg,#00ff79,#00ff79,#00ff7a,#00ff7a,#16ff7b,#2aff7b,#3cff7c,#4eff7c,#60ff7d,#72ff7d,#85ff7e,#97ff7f,#aaff7f,#bdff80,#d1ff81,#e5ff82,#faff82,#fff07b,#ffde73,#ffce6b,#ffc065,#ffb35f,#ffa759,#ff9d54,#ff9350,#ff8a4b,#ff8248,#ff7a44,#ff7341,#ff6d3e,#ff673b,#ff6138,#ff5b36,#ff5633,#ff5131,#ff4d2f,#ff482d,#ff442b,#ff4029,#ff3d28,#ff3926,#ff3624,#ff3223,#ff2f21,#ff2c20,#ff291f,#ff261e,#ff231c,#ff211b,#ff1e1a,#ff1c19,#ff1918,#ff1717,#ff1516,#ff1215,#ff1014,#ff0e13,#ff0c12,#ff0912,#ff0711,#ff0510,#ff030f,#ff000e,#ff000e,#ff000d,#ff000c)"></div><div style="height:6px;background:linear-gradient(90deg,#00ff87,#00ff88,#00ff89,#00ff89,#13ff8a,#27ff8b,#3aff8c,#4dff8d,#5fff8d,#71ff8e,#84ff8f,#97ff90,#aaff91,#beff92,#d2ff94,#e7ff95,#fcff96,#ffee8d,#ffdc83,#ffcc7b,#ffbd73,#ffb16d,#ffa566,#ff9a61,#ff915c,#ff8857,#ff8053,#ff784f,#ff714b,#ff6a48,#ff6445,#ff5f42,#ff593f,#ff543c,#ff4f3a,#ff4b38,#ff4635,#ff4233,#ff3e31,#ff3b2f,#ff372e,#ff342c,#ff302a,#ff2d29,#ff2a27,#ff2726,#ff2424,#ff2223,#ff1f22,#ff1c21,#ff1a1f,#ff171e,#ff151d,#ff131c,#ff101b,#ff0e1a,#ff0c19,#ff0a18,#ff0717,#ff0516,#ff0316,#ff0015,#ff0014,#ff0013,#ff0012,#ff0012)"></div><div style="height:6px;background:linear-gradient(90deg,#00ff96,#00ff97,#00ff98,#00ff99,#10ff9a,#25ff9b,#38ff9c,#4bff9d,#5eff9e,#71ffa0,#84ffa1,#97ffa2,#aaffa4,#beffa5,#d3ffa7,#e8ffa8,#feffaa,#ffec9f,#ffd994,#ffc98a,#ffbb82,#ffae7b,#ffa374,#ff986e,#ff8e68,#ff8663,#ff7d5e,#ff765a,#ff6f56,#ff6852,#ff624f,#ff5c4b,#ff5748,#ff5245,#ff4d43,#ff4940,#ff443e,#ff403b,#ff3c39,#ff3937,#ff3535,#ff3233,#ff2e31,#ff2b30,#ff282e,#ff252d,#ff222b,#ff202a,#ff1d28,#ff1a27,#ff1826,#ff1624,#ff1323,#ff1122,#ff0e21,#ff0c20,#ff0a1f,#ff081e,#ff051d,#ff031c,#ff001b,#ff001a,#ff0019,#ff0018,#ff0018,#ff0017)"></div><div style="height:6px;background:linear-gradient(90deg,#00ffa5,#00ffa6,#00ffa7,#00ffa9,#0dffaa,#22ffab,#36ffad,#49ffae,#5cffb0,#70ffb1,#83ffb3,#97ffb5,#abffb7,#bfffb8,#d4ffba,#eaffbc,#fffebe,#ffe9b0,#ffd7a4,#ffc79a,#ffb991,#ffac89,#ffa081,#ff967a,#ff8c74,#ff836f,#ff7b69,#ff7365,#ff6d60,#ff665c,#ff6058,#ff5a55,#ff5551,#ff504e,#ff4b4b,#ff4648,#ff4246,#ff3e43,#ff3a41,#ff373f,#ff333d,#ff303b,#ff2c39,#ff2937,#ff2635,#ff2333,#ff2032,#ff1e30,#ff1b2f,#ff192d,#ff162c,#ff142a,#ff1129,#ff0f28,#ff0c27,#ff0a26,#ff0824,#ff0523,#ff0322,#ff0021,#ff0020,#ff001f,#ff001e,#ff001e,#ff001d,#ff001c)"></div><div style="height:6px;background:linear-gradient(90deg,#00ffb4,#00ffb6,#00ffb7,#00ffb9,#09ffba,#1fffbc,#34ffbe,#47ffc0,#5bffc1,#6fffc3,#82ffc5,#96ffc8,#abffca,#c0ffcc,#d5ffce,#ebffd1,#fffcd1,#ffe7c2,#ffd5b5,#ffc5aa,#ffb6a0,#ffa996,#ff9e8e,#ff9387,#ff8a80,#ff817a,#ff7974,#ff716f,#ff6a6a,#ff6466,#ff5e62,#ff585e,#ff535a,#ff4e57,#ff4954,#ff4451,#ff404e,#ff3c4b,#ff3849,#ff3446,#ff3144,#ff2e42,#ff2a40,#ff273e,#ff243c,#ff213a,#ff1e38,#ff1c36,#ff1935,#ff1733,#ff1432,#ff1230,#ff0f2f,#ff0d2e,#ff0a2c,#ff082b,#ff062a,#ff0329,#ff0028,#ff0027,#ff0026,#ff0024,#ff0024,#ff0023,#ff0022,#ff0021)"></div><div style="height:6px;background:linear-gradient(90deg,#00ffc4,#00ffc5,#00ffc7,#00ffc9,#05ffcb,#1cffcd,#31ffcf,#46ffd1,#5affd4,#6effd6,#82ffd8,#96ffdb,#abffdd,#c1ffe0,#d6ffe3,#edffe6,#fffae5,#ffe5d4,#ffd2c6,#ffc2b9,#ffb4ae,#ffa7a4,#ff9b9c,#ff9194,#ff878c,#ff7e86,#ff7680,#ff6f7a,#ff6875,#ff6170,#ff5b6b,#ff5667,#ff5063,#ff4b60,#ff475c,#ff4259,#ff3e56,#ff3a53,#ff3650,#ff324e,#ff2f4b,#ff2b49,#ff2846,#ff2544,#ff2242,#ff1f40,#ff1c3e,#ff1a3d,#ff173b,#ff1539,#ff1238,#ff1036,#ff0d35,#ff0b33,#ff0832,#ff0631,#ff032f,#ff002e,#ff002d,#ff002c,#ff002b,#ff0029,#ff0028,#ff0027,#ff0026,#ff0025)"></div><div style="height:6px;background:linear-gradient(90deg,#00ffd4,#00ffd6,#00ffd8,#00ffda,#00ffdc,#19ffde,#2fffe1,#44ffe3,#58ffe6,#6dffe9,#81ffec,#96ffef,#abfff2,#c1fff5,#d8fff8,#effffc,#fff8f8,#ffe2e6,#ffd0d7,#ffc0c9,#ffb1bd,#ffa4b3,#ff99a9,#ff8ea0,#ff8598,#ff7c91,#ff748b,#ff6c85,#ff657f,#ff5f7a,#ff5975,#ff5370,#ff4e6c,#ff4968,#ff4465,#ff4061,#ff3c5e,#ff385b,#ff3458,#ff3055,#ff2d52,#ff2950,#ff264d,#ff234b,#ff2049,#ff1d47,#ff1a45,#ff1843,#ff1541,#ff123f,#ff103e,#ff0d3c,#ff0b3a,#ff0839,#ff0637,#ff0336,#ff0035,#ff0033,#ff0032,#ff0031,#ff0030,#ff002e,#ff002d,#ff002c,#ff002b,#ff002a)"></div><div style="height:6px;background:linear-gradient(90deg,#00ffe4,#00ffe6,#00ffe9,#00ffeb,#00ffee,#16fff0,#2cfff3,#42fff6,#57fff9,#6bfffc,#80feff,#94fbff,#a7f8ff,#baf4ff,#cdf1ff,#e0edff,#f3e9ff,#ffe0f9,#ffcde8,#ffbdd9,#ffafcc,#ffa2c1,#ff96b6,#ff8cad,#ff82a4,#ff799d,#ff7196,#ff6a8f,#ff6389,#ff5d84,#ff577e,#ff517a,#ff4c75,#ff4771,#ff426d,#ff3e69,#ff3966,#ff3562,#ff325f,#ff2e5c,#ff2b59,#ff2757,#ff2454,#ff2152,#ff1e4f,#ff1b4d,#ff184b,#ff1649,#ff1347,#ff1045,#ff0e43,#ff0b42,#ff0940,#ff063e,#ff043d,#ff003b,#ff003a,#ff0038,#ff0037,#ff0036,#ff0034,#ff0033,#ff0032,#ff0031,#ff0030,#ff002f)"></div><div style="height:6px;background:linear-gradient(90deg,#00fff4,#00fff7,#00fffa,#00fffd,#00feff,#12fbff,#29f8ff,#3df5ff,#51f2ff,#64efff,#76ecff,#88e8ff,#9ae5ff,#ace1ff,#bedeff,#d0daff,#e2d7ff,#f3d3ff,#ffcbf9,#ffbae9,#ffacdb,#ff9fcf,#ff94c4,#ff89ba,#ff7fb1,#ff77a8,#ff6fa1,#ff679a,#ff6093,#ff5a8d,#ff5488,#ff4f83,#ff497e,#ff4479,#ff4075,#ff3b71,#ff376e,#ff336a,#ff2f67,#ff2c64,#ff2860,#ff255e,#ff225b,#ff1f58,#ff1c56,#ff1953,#ff1651,#ff134f,#ff114d,#ff0e4b,#ff0c49,#ff0947,#ff0645,#ff0444,#ff0142,#ff0041,#ff003f,#ff003e,#ff003c,#ff003b,#ff0039,#ff0038,#ff0037,#ff0036,#ff0034,#ff0033)"></div><div style="height:6px;background:linear-gradient(90deg,#00f9ff,#00f6ff,#00f3ff,#00f0ff,#00edff,#0eeaff,#23e7ff,#37e4ff,#49e1ff,#5bdeff,#6ddbff,#7ed8ff,#8fd4ff,#a0d1ff,#b1ceff,#c2caff,#d3c7ff,#e3c3ff,#f4bfff,#ffb8fa,#ffa9eb,#ff9cdd,#ff91d1,#ff86c7,#ff7dbd,#ff74b4,#ff6cac,#ff65a4,#ff5e9e,#ff5897,#ff5291,#ff4c8c,#ff4787,#ff4282,#ff3d7e,#ff3979,#ff3575,#ff3172,#ff2d6e,#ff2a6b,#ff2668,#ff2365,#ff2062,#ff1d5f,#ff1a5c,#ff175a,#ff1457,#ff1155,#ff0e53,#ff0c51,#ff094f,#ff074d,#ff044b,#ff0149,#ff0047,#ff0046,#ff0044,#ff0043,#ff0041,#ff0040,#ff003e,#ff003d,#ff003c,#ff003a,#ff0039,#ff0038)"></div><div style="height:6px;background:linear-gradient(90deg,#00e9ff,#00e7ff,#00e4ff,#00e1ff,#00deff,#09dbff,#1ed8ff,#31d5ff,#43d2ff,#54cfff,#65ccff,#75c9ff,#86c5ff,#96c2ff,#a6bfff,#b6bbff,#c5b8ff,#d5b5ff,#e5b1ff,#f5aeff,#ffa6fa,#ff9aec,#ff8edf,#ff84d3,#ff7ac9,#ff71c0,#ff69b7,#ff62af,#ff5ba8,#ff55a1,#ff4f9b,#ff4a95,#ff4490,#ff408b,#ff3b86,#ff3781,#ff337d,#ff2f79,#ff2b76,#ff2772,#ff246f,#ff216b,#ff1d68,#ff1a65,#ff1763,#ff1460,#ff125e,#ff0f5b,#ff0c59,#ff0957,#ff0754,#ff0452,#ff0150,#ff004f,#ff004d,#ff004b,#ff0049,#ff0048,#ff0046,#ff0044,#ff0043,#ff0042,#ff0040,#ff003f,#ff003e,#ff003c)"></div><div style="height:6px;background:linear-gradient(90deg,#00dbff,#00d9ff,#00d6ff,#00d3ff,#00d0ff,#05cdff,#1acaff,#2cc7ff,#3dc4ff,#4ec1ff,#5ebeff,#6dbbff,#7db8ff,#8cb5ff,#9bb2ff,#aaaeff,#b9abff,#c8a8ff,#d7a4ff,#e6a1ff,#f59dff,#ff97fa,#ff8bed,#ff81e0,#ff77d5,#ff6fcb,#ff67c2,#ff5fba,#ff59b2,#ff52ab,#ff4da4,#ff479e,#ff4299,#ff3d93,#ff398e,#ff348a,#ff3085,#ff2c81,#ff287d,#ff2579,#ff2276,#ff1e72,#ff1b6f,#ff186c,#ff1569,#ff1266,#ff0f64,#ff0c61,#ff0a5f,#ff075c,#ff045a,#ff0158,#ff0056,#ff0054,#ff0052,#ff0050,#ff004e,#ff004d,#ff004b,#ff0049,#ff0048,#ff0046,#ff0045,#ff0043,#ff0042,#ff0041)"></div><div style="height:6px;background:linear-gradient(90deg,#00cfff,#00ccff,#00c9ff,#00c6ff,#00c4ff,#00c1ff,#16beff,#28bbff,#38b8ff,#48b5ff,#57b2ff,#66afff,#75acff,#84a9ff,#92a6ff,#a0a3ff,#af9fff,#bd9cff,#cb99ff,#d995ff,#e792ff,#f58eff,#ff88fb,#ff7eee,#ff75e2,#ff6cd7,#ff64ce,#ff5dc5,#ff56bd,#ff50b5,#ff4aae,#ff45a8,#ff3fa2,#ff3b9c,#ff3697,#ff3292,#ff2e8d,#ff2a89,#ff2684,#ff2380,#ff1f7d,#ff1c79,#ff1976,#ff1673,#ff136f,#ff106d,#ff0d6a,#ff0a67,#ff0765,#ff0462,#ff0160,#ff005d,#ff005b,#ff0059,#ff0057,#ff0055,#ff0053,#ff0052,#ff0050,#ff004e,#ff004c,#ff004b,#ff0049,#ff0048,#ff0046,#ff0045)"></div><div style="height:6px;background:linear-gradient(90deg,#00c3ff,#00c0ff,#00beff,#00bbff,#00b8ff,#00b5ff,#12b3ff,#23b0ff,#33adff,#42aaff,#51a7ff,#60a4ff,#6ea1ff,#7c9eff,#8a9bff,#9798ff,#a595ff,#b291ff,#c08eff,#ce8bff,#db87ff,#e884ff,#f681ff,#ff7bfb,#ff72ee,#ff69e3,#ff61d9,#ff5ad0,#ff53c7,#ff4dbf,#ff47b8,#ff42b1,#ff3daa,#ff38a4,#ff349f,#ff2f9a,#ff2b95,#ff2790,#ff248c,#ff2088,#ff1d84,#ff1980,#ff167c,#ff1379,#ff1076,#ff0d73,#ff0a70,#ff076d,#ff046a,#ff0168,#ff0065,#ff0063,#ff0061,#ff005f,#ff005c,#ff005a,#ff0058,#ff0057,#ff0055,#ff0053,#ff0051,#ff0050,#ff004e,#ff004c,#ff004b,#ff0049)"></div><div style="height:6px;background:linear-gradient(90deg,#00b8ff,#00b5ff,#00b3ff,#00b0ff,#00aeff,#00abff,#0ea8ff,#1fa5ff,#2fa3ff,#3da0ff,#4c9dff,#599aff,#6797ff,#7594ff,#8291ff,#8f8eff,#9c8bff,#a988ff,#b684ff,#c381ff,#d07eff,#dd7bff,#e977ff,#f674ff,#ff6ffb,#ff66ef,#ff5ee4,#ff57da,#ff51d1,#ff4ac9,#ff45c1,#ff3fba,#ff3ab3,#ff35ad,#ff31a7,#ff2da2,#ff299d,#ff2598,#ff2193,#ff1e8f,#ff1a8b,#ff1787,#ff1483,#ff1180,#ff0e7c,#ff0b79,#ff0876,#ff0573,#ff0170,#ff006e,#ff006b,#ff0068,#ff0066,#ff0064,#ff0062,#ff005f,#ff005d,#ff005b,#ff005a,#ff0058,#ff0056,#ff0054,#ff0053,#ff0051,#ff004f,#ff004e)"></div><div style="height:6px;background:linear-gradient(90deg,#00aeff,#00acff,#00a9ff,#00a6ff,#00a4ff,#00a1ff,#0b9fff,#1c9cff,#2b99ff,#3996ff,#4793ff,#5491ff,#618eff,#6e8bff,#7b88ff,#8785ff,#9482ff,#a07fff,#ad7cff,#b979ff,#c575ff,#d272ff,#de6fff,#ea6bff,#f768ff,#ff63fb,#ff5bf0,#ff54e5,#ff4edc,#ff48d3,#ff42cb,#ff3cc3,#ff37bc,#ff33b6,#ff2eb0,#ff2aaa,#ff26a4,#ff229f,#ff1f9b,#ff1b96,#ff1892,#ff148e,#ff118a,#ff0e86,#ff0b83,#ff087f,#ff057c,#ff0179,#ff0076,#ff0073,#ff0071,#ff006e,#ff006b,#ff0069,#ff0067,#ff0065,#ff0062,#ff0060,#ff005e,#ff005c,#ff005b,#ff0059,#ff0057,#ff0055,#ff0054,#ff0052)"></div><div style="height:6px;background:linear-gradient(90deg,#00a5ff,#00a3ff,#00a0ff,#009dff,#009bff,#0098ff,#0896ff,#1893ff,#2790ff,#358eff,#428bff,#4f88ff,#5b85ff,#6882ff,#747fff,#807dff,#8c7aff,#9877ff,#a474ff,#b070ff,#bc6dff,#c86aff,#d467ff,#df64ff,#eb60ff,#f75dff,#ff58fb,#ff51f0,#ff4be6,#ff45dd,#ff3fd5,#ff3acd,#ff35c5,#ff30be,#ff2cb8,#ff27b2,#ff23ac,#ff20a7,#ff1ca2,#ff189d,#ff1599,#ff1294,#ff0e90,#ff0b8d,#ff0889,#ff0585,#ff0182,#ff007f,#ff007c,#ff0079,#ff0076,#ff0073,#ff0071,#ff006e,#ff006c,#ff006a,#ff0067,#ff0065,#ff0063,#ff0061,#ff005f,#ff005d,#ff005c,#ff005a,#ff0058,#ff0056)"></div><div style="height:6px;background:linear-gradient(90deg,#009dff,#009aff,#0098ff,#0095ff,#0093ff,#0090ff,#048dff,#158bff,#2388ff,#3186ff,#3e83ff,#4a80ff,#567dff,#627bff,#6e78ff,#7a75ff,#8672ff,#916fff,#9d6cff,#a869ff,#b366ff,#bf63ff,#ca60ff,#d55dff,#e159ff,#ec56ff,#f753ff,#ff4efc,#ff48f1,#ff42e7,#ff3cde,#ff37d6,#ff32ce,#ff2dc7,#ff29c1,#ff25ba,#ff21b4,#ff1daf,#ff19a9,#ff16a4,#ff12a0,#ff0f9b,#ff0c97,#ff0893,#ff058f,#ff018c,#ff0088,#ff0085,#ff0082,#ff007f,#ff007c,#ff0079,#ff0076,#ff0074,#ff0071,#ff006f,#ff006c,#ff006a,#ff0068,#ff0066,#ff0064,#ff0062,#ff0060,#ff005e,#ff005c,#ff005b)"></div><div style="height:6px;background:linear-gradient(90deg,#0095ff,#0092ff,#0090ff,#008dff,#008bff,#0088ff,#0186ff,#1283ff,#2081ff,#2d7eff,#397bff,#4679ff,#5176ff,#5d73ff,#6970ff,#746eff,#7f6bff,#8a68ff,#9565ff,#a062ff,#ab5fff,#b65cff,#c159ff,#cc56ff,#d753ff,#e250ff,#ed4cff,#f749ff,#ff45fc,#ff3ff2,#ff39e8,#ff34e0,#ff2fd8,#ff2ad0,#ff26c9,#ff22c2,#ff1ebc,#ff1ab6,#ff16b1,#ff13ac,#ff0fa7,#ff0ca2,#ff099e,#ff059a,#ff0296,#ff0092,#ff008e,#ff008b,#ff0087,#ff0084,#ff0081,#ff007e,#ff007b,#ff0079,#ff0076,#ff0074,#ff0071,#ff006f,#ff006d,#ff006b,#ff0069,#ff0066,#ff0065,#ff0063,#ff0061,#ff005f)"></div><div style="height:6px;background:linear-gradient(90deg,#008dff,#008bff,#0088ff,#0086ff,#0084ff,#0081ff,#007fff,#0f7cff,#1d7aff,#2a77ff,#3674ff,#4172ff,#4d6fff,#586cff,#636aff,#6e67ff,#7964ff,#8461ff,#8f5fff,#995cff,#a459ff,#ae56ff,#b953ff,#c350ff,#ce4dff,#d849ff,#e346ff,#ed43ff,#f840ff,#ff3cfc,#ff36f2,#ff31e9,#ff2ce1,#ff27d9,#ff23d1,#ff1fcb,#ff1bc4,#ff17be,#ff13b8,#ff10b3,#ff0cae,#ff09a9,#ff05a4,#ff02a0,#ff009c,#ff0098,#ff0094,#ff0091,#ff008d,#ff008a,#ff0087,#ff0084,#ff0081,#ff007e,#ff007b,#ff0079,#ff0076,#ff0074,#ff0072,#ff006f,#ff006d,#ff006b,#ff0069,#ff0067,#ff0065,#ff0063)"></div><div style="height:6px;background:linear-gradient(90deg,#0086ff,#0084ff,#0082ff,#007fff,#007dff,#007aff,#0078ff,#0c76ff,#1a73ff,#2670ff,#326eff,#3e6bff,#4969ff,#5466ff,#5e63ff,#6961ff,#745eff,#7e5bff,#8858ff,#9356ff,#9d53ff,#a750ff,#b14dff,#bb4aff,#c647ff,#d044ff,#da41ff,#e43dff,#ee3aff,#f837ff,#ff33fc,#ff2ef3,#ff29ea,#ff24e2,#ff20da,#ff1cd3,#ff18cc,#ff14c6,#ff10c0,#ff0dba,#ff09b5,#ff06b0,#ff02ab,#ff00a7,#ff00a2,#ff009e,#ff009a,#ff0097,#ff0093,#ff0090,#ff008c,#ff0089,#ff0086,#ff0083,#ff0080,#ff007e,#ff007b,#ff0079,#ff0076,#ff0074,#ff0072,#ff0070,#ff006d,#ff006b,#ff0069,#ff0068)"></div><div style="height:6px;background:linear-gradient(90deg,#0080ff,#007dff,#007bff,#0079ff,#0076ff,#0074ff,#0072ff,#096fff,#176dff,#236aff,#2f68ff,#3a65ff,#4563ff,#4f60ff,#5a5eff,#645bff,#6e58ff,#7956ff,#8353ff,#8d50ff,#964dff,#a04aff,#aa47ff,#b444ff,#be41ff,#c73eff,#d13bff,#db38ff,#e535ff,#ee32ff,#f82fff,#ff2bfc,#ff26f3,#ff21eb,#ff1de3,#ff19db,#ff15d4,#ff11ce,#ff0dc7,#ff0ac2,#ff06bc,#ff02b7,#ff00b2,#ff00ad,#ff00a9,#ff00a4,#ff00a0,#ff009d,#ff0099,#ff0095,#ff0092,#ff008f,#ff008c,#ff0089,#ff0086,#ff0083,#ff0080,#ff007e,#ff007b,#ff0079,#ff0076,#ff0074,#ff0072,#ff0070,#ff006e,#ff006c)"></div><div style="height:6px;background:linear-gradient(90deg,#007aff,#0077ff,#0075ff,#0073ff,#0071ff,#006eff,#006cff,#0769ff,#1467ff,#2065ff,#2c62ff,#3760ff,#415dff,#4b5bff,#5658ff,#6055ff,#6a53ff,#7350ff,#7d4dff,#874bff,#9048ff,#9a45ff,#a442ff,#ad3fff,#b63cff,#c039ff,#c936ff,#d333ff,#dc30ff,#e62dff,#ef2aff,#f826ff,#ff23fc,#ff1ef3,#ff1aeb,#ff16e3,#ff12dc,#ff0ed5,#ff0acf,#ff06c9,#ff02c3,#ff00be,#ff00b9,#ff00b4,#ff00af,#ff00ab,#ff00a7,#ff00a3,#ff009f,#ff009b,#ff0097,#ff0094,#ff0091,#ff008e,#ff008b,#ff0088,#ff0085,#ff0082,#ff0080,#ff007d,#ff007b,#ff0079,#ff0076,#ff0074,#ff0072,#ff0070)"></div><div style="height:6px;background:linear-gradient(90deg,#0074ff,#0072ff,#006fff,#006dff,#006bff,#0069ff,#0066ff,#0464ff,#1262ff,#1e5fff,#295dff,#335aff,#3e58ff,#4855ff,#5253ff,#5b50ff,#654eff,#6f4bff,#7848ff,#8146ff,#8b43ff,#9440ff,#9d3dff,#a63bff,#b038ff,#b935ff,#c232ff,#cb2fff,#d42cff,#dd28ff,#e625ff,#ef22ff,#f81fff,#ff1bfc,#ff17f4,#ff12ec,#ff0ee4,#ff0add,#ff06d7,#ff02d0,#ff00ca,#ff00c5,#ff00bf,#ff00ba,#ff00b6,#ff00b1,#ff00ad,#ff00a8,#ff00a4,#ff00a1,#ff009d,#ff009a,#ff0096,#ff0093,#ff0090,#ff008d,#ff008a,#ff0087,#ff0085,#ff0082,#ff0080,#ff007d,#ff007b,#ff0079,#ff0076,#ff0074)"></div><div style="height:6px;background:linear-gradient(90deg,#006eff,#006cff,#006aff,#0068ff,#0066ff,#0063ff,#0061ff,#015fff,#0f5cff,#1b5aff,#2658ff,#3055ff,#3a53ff,#4450ff,#4e4eff,#574bff,#6149ff,#6a46ff,#7344ff,#7c41ff,#853eff,#8e3cff,#9739ff,#a036ff,#a933ff,#b230ff,#bb2dff,#c42aff,#cd27ff,#d524ff,#de21ff,#e71eff,#f01aff,#f917ff,#ff13fd,#ff0ff4,#ff0bec,#ff07e5,#ff02de,#ff00d8,#ff00d2,#ff00cc,#ff00c6,#ff00c1,#ff00bc,#ff00b7,#ff00b3,#ff00ae,#ff00aa,#ff00a6,#ff00a3,#ff009f,#ff009c,#ff0098,#ff0095,#ff0092,#ff008f,#ff008c,#ff0089,#ff0087,#ff0084,#ff0082,#ff007f,#ff007d,#ff007b,#ff0079)"></div><div style="height:6px;background:linear-gradient(90deg,#0069ff,#0067ff,#0065ff,#0063ff,#0060ff,#005eff,#005cff,#005aff,#0d57ff,#1955ff,#2353ff,#2d50ff,#374eff,#414cff,#4a49ff,#5447ff,#5d44ff,#6642ff,#6f3fff,#783cff,#803aff,#8937ff,#9234ff,#9b32ff,#a32fff,#ac2cff,#b429ff,#bd26ff,#c623ff,#ce20ff,#d71dff,#df1aff,#e816ff,#f013ff,#f90fff,#ff0bfd,#ff07f5,#ff03ed,#ff00e6,#ff00df,#ff00d9,#ff00d3,#ff00cd,#ff00c8,#ff00c2,#ff00be,#ff00b9,#ff00b4,#ff00b0,#ff00ac,#ff00a8,#ff00a4,#ff00a1,#ff009d,#ff009a,#ff0097,#ff0094,#ff0091,#ff008e,#ff008b,#ff0089,#ff0086,#ff0084,#ff0081,#ff007f,#ff007d)"></div><div style="height:6px;background:linear-gradient(90deg,#0064ff,#0062ff,#0060ff,#005eff,#005cff,#005aff,#0057ff,#0055ff,#0b53ff,#1651ff,#214eff,#2b4cff,#344aff,#3e47ff,#4745ff,#5042ff,#5940ff,#623dff,#6a3bff,#7338ff,#7c36ff,#8433ff,#8d30ff,#952eff,#9e2bff,#a628ff,#ae25ff,#b722ff,#bf1fff,#c71cff,#d019ff,#d816ff,#e012ff,#e80fff,#f10bff,#f907ff,#ff03fd,#ff00f5,#ff00ee,#ff00e7,#ff00e0,#ff00da,#ff00d4,#ff00ce,#ff00c9,#ff00c4,#ff00bf,#ff00ba,#ff00b6,#ff00b2,#ff00ae,#ff00aa,#ff00a6,#ff00a3,#ff009f,#ff009c,#ff0099,#ff0096,#ff0093,#ff0090,#ff008d,#ff008b,#ff0088,#ff0086,#ff0083,#ff0081)"></div><div style="height:6px;background:linear-gradient(90deg,#0060ff,#005eff,#005bff,#0059ff,#0057ff,#0055ff,#0053ff,#0051ff,#084eff,#144cff,#1e4aff,#2848ff,#3245ff,#3b43ff,#4440ff,#4d3eff,#553cff,#5e39ff,#6637ff,#6f34ff,#7732ff,#802fff,#882cff,#902aff,#9827ff,#a024ff,#a821ff,#b11eff,#b91bff,#c118ff,#c915ff,#d112ff,#d90eff,#e10bff,#e907ff,#f103ff,#f900ff,#ff00fd,#ff00f5,#ff00ee,#ff00e7,#ff00e1,#ff00db,#ff00d5,#ff00cf,#ff00ca,#ff00c5,#ff00c0,#ff00bc,#ff00b8,#ff00b3,#ff00af,#ff00ac,#ff00a8,#ff00a4,#ff00a1,#ff009e,#ff009b,#ff0098,#ff0095,#ff0092,#ff008f,#ff008d,#ff008a,#ff0088,#ff0085)"></div><div style="height:6px;background:linear-gradient(90deg,#005bff,#0059ff,#0057ff,#0055ff,#0053ff,#0051ff,#004fff,#004cff,#064aff,#1248ff,#1c46ff,#2643ff,#2f41ff,#383fff,#413cff,#493aff,#5238ff,#5a35ff,#6333ff,#6b30ff,#732eff,#7b2bff,#8329ff,#8b26ff,#9323ff,#9b20ff,#a31eff,#ab1bff,#b318ff,#bb15ff,#c211ff,#ca0eff,#d20bff,#da07ff,#e203ff,#ea00ff,#f100ff,#f900ff,#ff00fd,#ff00f6,#ff00ee,#ff00e8,#ff00e2,#ff00dc,#ff00d6,#ff00d0,#ff00cb,#ff00c6,#ff00c2,#ff00bd,#ff00b9,#ff00b5,#ff00b1,#ff00ad,#ff00aa,#ff00a6,#ff00a3,#ff00a0,#ff009d,#ff009a,#ff0097,#ff0094,#ff0091,#ff008f,#ff008c,#ff008a)"></div><div style="height:6px;background:linear-gradient(90deg,#0057ff,#0055ff,#0053ff,#0051ff,#004fff,#004dff,#004aff,#0048ff,#0446ff,#1044ff,#1a42ff,#233fff,#2c3dff,#353bff,#3e39ff,#4636ff,#4f34ff,#5731ff,#5f2fff,#672dff,#6f2aff,#7727ff,#7f25ff,#8722ff,#8e20ff,#961dff,#9e1aff,#a517ff,#ad14ff,#b511ff,#bc0eff,#c40aff,#cc07ff,#d303ff,#db00ff,#e300ff,#ea00ff,#f200ff,#f900ff,#ff00fd,#ff00f6,#ff00ef,#ff00e8,#ff00e2,#ff00dc,#ff00d7,#ff00d2,#ff00cd,#ff00c8,#ff00c3,#ff00bf,#ff00ba,#ff00b6,#ff00b3,#ff00af,#ff00ab,#ff00a8,#ff00a4,#ff00a1,#ff009e,#ff009b,#ff0098,#ff0096,#ff0093,#ff0090,#ff008e)"></div><div style="height:6px;background:linear-gradient(90deg,#0053ff,#0051ff,#004fff,#004dff,#004bff,#0049ff,#0047ff,#0044ff,#0242ff,#0e40ff,#183eff,#213cff,#2a3aff,#3337ff,#3b35ff,#4333ff,#4b30ff,#532eff,#5b2bff,#6329ff,#6b27ff,#7324ff,#7a21ff,#821fff,#8a1cff,#9119ff,#9917ff,#a014ff,#a811ff,#af0eff,#b70aff,#be07ff,#c603ff,#cd00ff,#d400ff,#dc00ff,#e300ff,#eb00ff,#f200ff,#f900ff,#ff00fd,#ff00f6,#ff00ef,#ff00e9,#ff00e3,#ff00dd,#ff00d8,#ff00d3,#ff00ce,#ff00c9,#ff00c4,#ff00c0,#ff00bc,#ff00b8,#ff00b4,#ff00b0,#ff00ad,#ff00a9,#ff00a6,#ff00a3,#ff00a0,#ff009d,#ff009a,#ff0097,#ff0095,#ff0092)"></div><div style="height:6px;background:linear-gradient(90deg,#004fff,#004dff,#004bff,#0049ff,#0047ff,#0045ff,#0043ff,#0041ff,#003fff,#0c3cff,#163aff,#1f38ff,#2836ff,#3034ff,#3831ff,#402fff,#482dff,#502aff,#5828ff,#6026ff,#6723ff,#6f21ff,#761eff,#7e1bff,#8519ff,#8d16ff,#9413ff,#9b10ff,#a30dff,#aa0aff,#b107ff,#b903ff,#c000ff,#c700ff,#ce00ff,#d600ff,#dd00ff,#e400ff,#eb00ff,#f200ff,#fa00ff,#ff00fd,#ff00f6,#ff00f0,#ff00ea,#ff00e4,#ff00de,#ff00d9,#ff00d4,#ff00cf,#ff00ca,#ff00c6,#ff00c1,#ff00bd,#ff00b9,#ff00b5,#ff00b2,#ff00ae,#ff00ab,#ff00a8,#ff00a4,#ff00a1,#ff009f,#ff009c,#ff0099,#ff0096)"></div><div style="height:6px;background:linear-gradient(90deg,#004bff,#0049ff,#0047ff,#0045ff,#0043ff,#0041ff,#003fff,#003dff,#003bff,#0a39ff,#1437ff,#1d35ff,#2532ff,#2e30ff,#362eff,#3e2cff,#4629ff,#4d27ff,#5525ff,#5c22ff,#6420ff,#6b1dff,#731bff,#7a18ff,#8116ff,#8813ff,#9010ff,#970dff,#9e0aff,#a507ff,#ac03ff,#b300ff,#ba00ff,#c100ff,#c800ff,#d000ff,#d700ff,#de00ff,#e500ff,#ec00ff,#f300ff,#fa00ff,#ff00fd,#ff00f7,#ff00f0,#ff00ea,#ff00e4,#ff00df,#ff00d9,#ff00d4,#ff00d0,#ff00cb,#ff00c7,#ff00c2,#ff00be,#ff00bb,#ff00b7,#ff00b3,#ff00b0,#ff00ac,#ff00a9,#ff00a6,#ff00a3,#ff00a0,#ff009d,#ff009b)"></div><div style="height:6px;background:linear-gradient(90deg,#0048ff,#0046ff,#0044ff,#0042ff,#0040ff,#003eff,#003cff,#003aff,#0038ff,#0836ff,#1234ff,#1b31ff,#232fff,#2b2dff,#332bff,#3b29ff,#4326ff,#4a24ff,#5222ff,#591fff,#611dff,#681aff,#6f18ff,#7615ff,#7d12ff,#8410ff,#8b0dff,#920aff,#9907ff,#a003ff,#a700ff,#ae00ff,#b500ff,#bc00ff,#c300ff,#ca00ff,#d100ff,#d800ff,#de00ff,#e500ff,#ec00ff,#f300ff,#fa00ff,#ff00fd,#ff00f7,#ff00f1,#ff00eb,#ff00e5,#ff00df,#ff00da,#ff00d5,#ff00d1,#ff00cc,#ff00c8,#ff00c4,#ff00c0,#ff00bc,#ff00b8,#ff00b5,#ff00b1,#ff00ae,#ff00ab,#ff00a7,#ff00a4,#ff00a2,#ff009f)"></div><div style="height:6px;background:linear-gradient(90deg,#0044ff,#0042ff,#0040ff,#003eff,#003cff,#003bff,#0039ff,#0036ff,#0034ff,#0632ff,#1030ff,#192eff,#212cff,#292aff,#3128ff,#3925ff,#4023ff,#4821ff,#4f1eff,#561cff,#5d1aff,#6517ff,#6c15ff,#7312ff,#7a0fff,#800cff,#870aff,#8e06ff,#9503ff,#9c00ff,#a300ff,#a900ff,#b000ff,#b700ff,#be00ff,#c400ff,#cb00ff,#d200ff,#d800ff,#df00ff,#e600ff,#ed00ff,#f300ff,#fa00ff,#ff00fd,#ff00f7,#ff00f1,#ff00eb,#ff00e5,#ff00e0,#ff00db,#ff00d6,#ff00d2,#ff00cd,#ff00c9,#ff00c5,#ff00c1,#ff00bd,#ff00b9,#ff00b6,#ff00b2,#ff00af,#ff00ac,#ff00a9,#ff00a6,#ff00a3)"></div><div style="height:6px;background:linear-gradient(90deg,#0041ff,#003fff,#003dff,#003bff,#0039ff,#0037ff,#0035ff,#0033ff,#0031ff,#042fff,#0e2dff,#172bff,#1f29ff,#2727ff,#2f25ff,#3622ff,#3e20ff,#451eff,#4c1cff,#5319ff,#5a17ff,#6114ff,#6812ff,#6f0fff,#760cff,#7d09ff,#8306ff,#8a03ff,#9100ff,#9700ff,#9e00ff,#a500ff,#ab00ff,#b200ff,#b900ff,#bf00ff,#c600ff,#cc00ff,#d300ff,#d900ff,#e000ff,#e600ff,#ed00ff,#f300ff,#fa00ff,#ff00fd,#ff00f7,#ff00f1,#ff00eb,#ff00e6,#ff00e1,#ff00dc,#ff00d7,#ff00d2,#ff00ce,#ff00ca,#ff00c6,#ff00c2,#ff00be,#ff00bb,#ff00b7,#ff00b4,#ff00b0,#ff00ad,#ff00aa,#ff00a7)"></div><div style="height:6px;background:linear-gradient(90deg,#003eff,#003cff,#003aff,#0038ff,#0036ff,#0034ff,#0032ff,#0030ff,#002eff,#022cff,#0c2aff,#1528ff,#1d26ff,#2524ff,#2d22ff,#341fff,#3b1dff,#431bff,#4a19ff,#5116ff,#5714ff,#5e11ff,#650fff,#6c0cff,#7209ff,#7906ff,#8003ff,#8600ff,#8d00ff,#9300ff,#9a00ff,#a000ff,#a700ff,#ad00ff,#b400ff,#ba00ff,#c100ff,#c700ff,#cd00ff,#d400ff,#da00ff,#e100ff,#e700ff,#ed00ff,#f400ff,#fa00ff,#ff00fe,#ff00f7,#ff00f2,#ff00ec,#ff00e7,#ff00e1,#ff00dd,#ff00d8,#ff00d3,#ff00cf,#ff00cb,#ff00c7,#ff00c3,#ff00bf,#ff00bc,#ff00b8,#ff00b5,#ff00b2,#ff00af,#ff00ac)"></div><div style="height:6px;background:linear-gradient(90deg,#003bff,#0039ff,#0037ff,#0035ff,#0033ff,#0031ff,#002fff,#002dff,#002bff,#0029ff,#0a27ff,#1325ff,#1b23ff,#2321ff,#2b1fff,#321dff,#391aff,#4018ff,#4716ff,#4e13ff,#5511ff,#5b0eff,#620cff,#6909ff,#6f06ff,#7603ff,#7c00ff,#8300ff,#8900ff,#8f00ff,#9600ff,#9c00ff,#a200ff,#a900ff,#af00ff,#b500ff,#bc00ff,#c200ff,#c800ff,#ce00ff,#d500ff,#db00ff,#e100ff,#e700ff,#ee00ff,#f400ff,#fa00ff,#ff00fe,#ff00f8,#ff00f2,#ff00ec,#ff00e7,#ff00e2,#ff00dd,#ff00d9,#ff00d4,#ff00d0,#ff00cc,#ff00c8,#ff00c4,#ff00c0,#ff00bd,#ff00b9,#ff00b6,#ff00b3,#ff00b0)"></div><div style="height:6px;background:linear-gradient(90deg,#0038ff,#0036ff,#0034ff,#0032ff,#0030ff,#002eff,#002cff,#002bff,#0029ff,#0027ff,#0925ff,#1222ff,#1a20ff,#211eff,#291cff,#301aff,#3718ff,#3e15ff,#4513ff,#4b11ff,#520eff,#590cff,#5f09ff,#6606ff,#6c03ff,#7200ff,#7900ff,#7f00ff,#8500ff,#8c00ff,#9200ff,#9800ff,#9e00ff,#a400ff,#ab00ff,#b100ff,#b700ff,#bd00ff,#c300ff,#c900ff,#cf00ff,#d600ff,#dc00ff,#e200ff,#e800ff,#ee00ff,#f400ff,#fa00ff,#ff00fe,#ff00f8,#ff00f2,#ff00ed,#ff00e8,#ff00e3,#ff00de,#ff00d9,#ff00d5,#ff00d1,#ff00cd,#ff00c9,#ff00c5,#ff00c1,#ff00be,#ff00bb,#ff00b7,#ff00b4)"></div><div style="height:6px;background:linear-gradient(90deg,#0035ff,#0033ff,#0031ff,#002fff,#002eff,#002cff,#002aff,#0028ff,#0026ff,#0024ff,#0722ff,#1020ff,#181eff,#1f1cff,#2719ff,#2e17ff,#3515ff,#3c13ff,#4210ff,#490eff,#4f0bff,#5609ff,#5c06ff,#6303ff,#6900ff,#6f00ff,#7500ff,#7c00ff,#8200ff,#8800ff,#8e00ff,#9400ff,#9a00ff,#a000ff,#a600ff,#ac00ff,#b200ff,#b800ff,#be00ff,#c400ff,#ca00ff,#d000ff,#d600ff,#dc00ff,#e200ff,#e800ff,#ee00ff,#f400ff,#fa00ff,#ff00fe,#ff00f8,#ff00f2,#ff00ed,#ff00e8,#ff00e3,#ff00df,#ff00da,#ff00d6,#ff00d2,#ff00ce,#ff00ca,#ff00c6,#ff00c2,#ff00bf,#ff00bc,#ff00b8)"></div><div style="height:6px;background:linear-gradient(90deg,#0032ff,#0030ff,#002eff,#002dff,#002bff,#0029ff,#0027ff,#0025ff,#0023ff,#0021ff,#051fff,#0e1dff,#161bff,#1e19ff,#2517ff,#2c15ff,#3312ff,#3910ff,#400eff,#470bff,#4d09ff,#5306ff,#5a03ff,#6000ff,#6600ff,#6c00ff,#7200ff,#7800ff,#7e00ff,#8400ff,#8a00ff,#9000ff,#9600ff,#9c00ff,#a200ff,#a800ff,#ae00ff,#b400ff,#ba00ff,#c000ff,#c600ff,#cc00ff,#d100ff,#d700ff,#dd00ff,#e300ff,#e900ff,#ef00ff,#f500ff,#fa00ff,#ff00fe,#ff00f8,#ff00f3,#ff00ed,#ff00e8,#ff00e4,#ff00df,#ff00db,#ff00d6,#ff00d2,#ff00ce,#ff00cb,#ff00c7,#ff00c3,#ff00c0,#ff00bd)"></div><div style="height:6px;background:linear-gradient(90deg,#002fff,#002eff,#002cff,#002aff,#0028ff,#0026ff,#0024ff,#0023ff,#0021ff,#001fff,#041dff,#0d1bff,#1519ff,#1c16ff,#2314ff,#2a12ff,#3110ff,#370eff,#3e0bff,#4409ff,#4b06ff,#5103ff,#5700ff,#5d00ff,#6300ff,#6900ff,#6f00ff,#7500ff,#7b00ff,#8100ff,#8700ff,#8d00ff,#9300ff,#9900ff,#9e00ff,#a400ff,#aa00ff,#b000ff,#b600ff,#bb00ff,#c100ff,#c700ff,#cd00ff,#d200ff,#d800ff,#de00ff,#e400ff,#e900ff,#ef00ff,#f500ff,#fa00ff,#ff00fe,#ff00f8,#ff00f3,#ff00ee,#ff00e9,#ff00e4,#ff00e0,#ff00db,#ff00d7,#ff00d3,#ff00cf,#ff00cc,#ff00c8,#ff00c4,#ff00c1)"></div><div style="height:6px;background:linear-gradient(90deg,#002dff,#002bff,#0029ff,#0027ff,#0026ff,#0024ff,#0022ff,#0020ff,#001eff,#001cff,#021aff,#0b18ff,#1316ff,#1a14ff,#2112ff,#2810ff,#2f0dff,#350bff,#3c08ff,#4206ff,#4803ff,#4e00ff,#5500ff,#5b00ff,#6100ff,#6600ff,#6c00ff,#7200ff,#7800ff,#7e00ff,#8400ff,#8900ff,#8f00ff,#9500ff,#9b00ff,#a000ff,#a600ff,#ac00ff,#b100ff,#b700ff,#bd00ff,#c200ff,#c800ff,#ce00ff,#d300ff,#d900ff,#de00ff,#e400ff,#ea00ff,#ef00ff,#f500ff,#fb00ff,#ff00fe,#ff00f8,#ff00f3,#ff00ee,#ff00e9,#ff00e5,#ff00e0,#ff00dc,#ff00d8,#ff00d4,#ff00d0,#ff00cc,#ff00c9,#ff00c5)"></div><div style="height:6px;background:linear-gradient(90deg,#002aff,#0029ff,#0027ff,#0025ff,#0023ff,#0021ff,#001fff,#001eff,#001cff,#001aff,#0018ff,#0a16ff,#1214ff,#1911ff,#200fff,#270dff,#2d0bff,#3308ff,#3a06ff,#4003ff,#4600ff,#4c00ff,#5200ff,#5800ff,#5e00ff,#6400ff,#6a00ff,#6f00ff,#7500ff,#7b00ff,#8000ff,#8600ff,#8c00ff,#9100ff,#9700ff,#9d00ff,#a200ff,#a800ff,#ad00ff,#b300ff,#b800ff,#be00ff,#c300ff,#c900ff,#cf00ff,#d400ff,#da00ff,#df00ff,#e500ff,#ea00ff,#f000ff,#f500ff,#fb00ff,#ff00fe,#ff00f9,#ff00f3,#ff00ef,#ff00ea,#ff00e5,#ff00e1,#ff00dd,#ff00d9,#ff00d5,#ff00d1,#ff00cd,#ff00ca)"></div><div style="height:6px;background:linear-gradient(90deg,#0028ff,#0026ff,#0024ff,#0023ff,#0021ff,#001fff,#001dff,#001bff,#0019ff,#0017ff,#0015ff,#0813ff,#1011ff,#170fff,#1e0dff,#250bff,#2b08ff,#3206ff,#3803ff,#3e00ff,#4400ff,#4a00ff,#5000ff,#5600ff,#5b00ff,#6100ff,#6700ff,#6d00ff,#7200ff,#7800ff,#7d00ff,#8300ff,#8800ff,#8e00ff,#9400ff,#9900ff,#9f00ff,#a400ff,#a900ff,#af00ff,#b400ff,#ba00ff,#bf00ff,#c500ff,#ca00ff,#cf00ff,#d500ff,#da00ff,#e000ff,#e500ff,#ea00ff,#f000ff,#f500ff,#fb00ff,#ff00fe,#ff00f9,#ff00f4,#ff00ef,#ff00ea,#ff00e6,#ff00e1,#ff00dd,#ff00d9,#ff00d5,#ff00d2,#ff00ce)"></div><div style="height:6px;background:linear-gradient(90deg,#0025ff,#0024ff,#0022ff,#0020ff,#001eff,#001dff,#001bff,#0019ff,#0017ff,#0015ff,#0013ff,#0711ff,#0f0fff,#160dff,#1d0aff,#2308ff,#2a06ff,#3003ff,#3600ff,#3c00ff,#4200ff,#4800ff,#4e00ff,#5300ff,#5900ff,#5f00ff,#6400ff,#6a00ff,#6f00ff,#7500ff,#7a00ff,#8000ff,#8500ff,#8b00ff,#9000ff,#9600ff,#9b00ff,#a000ff,#a600ff,#ab00ff,#b000ff,#b600ff,#bb00ff,#c000ff,#c600ff,#cb00ff,#d000ff,#d600ff,#db00ff,#e000ff,#e600ff,#eb00ff,#f000ff,#f500ff,#fb00ff,#ff00fe,#ff00f9,#ff00f4,#ff00ef,#ff00eb,#ff00e6,#ff00e2,#ff00de,#ff00da,#ff00d6,#ff00d2)"></div><div style="height:6px;background:linear-gradient(90deg,#0023ff,#0021ff,#0020ff,#001eff,#001cff,#001aff,#0018ff,#0017ff,#0015ff,#0013ff,#0011ff,#050fff,#0d0dff,#140aff,#1b08ff,#2206ff,#2803ff,#2e00ff,#3400ff,#3a00ff,#4000ff,#4600ff,#4b00ff,#5100ff,#5700ff,#5c00ff,#6200ff,#6700ff,#6d00ff,#7200ff,#7800ff,#7d00ff,#8200ff,#8800ff,#8d00ff,#9200ff,#9800ff,#9d00ff,#a200ff,#a700ff,#ad00ff,#b200ff,#b700ff,#bc00ff,#c200ff,#c700ff,#cc00ff,#d100ff,#d600ff,#dc00ff,#e100ff,#e600ff,#eb00ff,#f000ff,#f600ff,#fb00ff,#ff00fe,#ff00f9,#ff00f4,#ff00ef,#ff00eb,#ff00e7,#ff00e2,#ff00de,#ff00da,#ff00d7)"></div><div style="height:6px;background:linear-gradient(90deg,#0021ff,#001fff,#001dff,#001cff,#001aff,#0018ff,#0016ff,#0014ff,#0012ff,#0010ff,#000eff,#040cff,#0c0aff,#1308ff,#1a06ff,#2003ff,#2600ff,#2c00ff,#3200ff,#3800ff,#3e00ff,#4400ff,#4900ff,#4f00ff,#5400ff,#5a00ff,#5f00ff,#6500ff,#6a00ff,#6f00ff,#7500ff,#7a00ff,#7f00ff,#8500ff,#8a00ff,#8f00ff,#9400ff,#9900ff,#9f00ff,#a400ff,#a900ff,#ae00ff,#b300ff,#b800ff,#be00ff,#c300ff,#c800ff,#cd00ff,#d200ff,#d700ff,#dc00ff,#e100ff,#e600ff,#ec00ff,#f100ff,#f600ff,#fb00ff,#ff00fe,#ff00f9,#ff00f4,#ff00f0,#ff00eb,#ff00e7,#ff00e3,#ff00df,#ff00db)"></div><div style="height:6px;background:linear-gradient(90deg,#001fff,#001dff,#001bff,#001aff,#0018ff,#0016ff,#0014ff,#0012ff,#0010ff,#000eff,#000cff,#020aff,#0a08ff,#1106ff,#1803ff,#1f00ff,#2500ff,#2b00ff,#3100ff,#3600ff,#3c00ff,#4200ff,#4700ff,#4d00ff,#5200ff,#5800ff,#5d00ff,#6200ff,#6800ff,#6d00ff,#7200ff,#7700ff,#7c00ff,#8200ff,#8700ff,#8c00ff,#9100ff,#9600ff,#9b00ff,#a000ff,#a500ff,#aa00ff,#b000ff,#b500ff,#ba00ff,#bf00ff,#c400ff,#c900ff,#ce00ff,#d300ff,#d800ff,#dd00ff,#e200ff,#e700ff,#ec00ff,#f100ff,#f600ff,#fb00ff,#ff00fe,#ff00f9,#ff00f5,#ff00f0,#ff00ec,#ff00e7,#ff00e3,#ff00df)"></div><div style="height:6px;background:linear-gradient(90deg,#001dff,#001bff,#0019ff,#0017ff,#0016ff,#0014ff,#0012ff,#0010ff,#000eff,#000cff,#000aff,#0008ff,#0906ff,#1003ff,#1700ff,#1d00ff,#2300ff,#2900ff,#2f00ff,#3500ff,#3a00ff,#4000ff,#4500ff,#4b00ff,#5000ff,#5500ff,#5b00ff,#6000ff,#6500ff,#6a00ff,#6f00ff,#7500ff,#7a00ff,#7f00ff,#8400ff,#8900ff,#8e00ff,#9300ff,#9800ff,#9d00ff,#a200ff,#a700ff,#ac00ff,#b100ff,#b600ff,#bb00ff,#c000ff,#c500ff,#ca00ff,#cf00ff,#d400ff,#d800ff,#dd00ff,#e200ff,#e700ff,#ec00ff,#f100ff,#f600ff,#fb00ff,#ff00fe,#ff00f9,#ff00f5,#ff00f0,#ff00ec,#ff00e8,#ff00e4)"></div><div style="height:6px;background:linear-gradient(90deg,#001aff,#0019ff,#0017ff,#0015ff,#0013ff,#0012ff,#0010ff,#000eff,#000cff,#000aff,#0008ff,#0005ff,#0803ff,#0f00ff,#1500ff,#1c00ff,#2200ff,#2800ff,#2d00ff,#3300ff,#3800ff,#3e00ff,#4300ff,#4900ff,#4e00ff,#5300ff,#5800ff,#5e00ff,#6300ff,#6800ff,#6d00ff,#7200ff,#7700ff,#7c00ff,#8100ff,#8600ff,#8b00ff,#9000ff,#9500ff,#9a00ff,#9f00ff,#a400ff,#a900ff,#ad00ff,#b200ff,#b700ff,#bc00ff,#c100ff,#c600ff,#cb00ff,#cf00ff,#d400ff,#d900ff,#de00ff,#e300ff,#e800ff,#ec00ff,#f100ff,#f600ff,#fb00ff,#ff00fe,#ff00f9,#ff00f5,#ff00f1,#ff00ec,#ff00e8)"></div><div style="height:6px;background:linear-gradient(90deg,#0018ff,#0017ff,#0015ff,#0013ff,#0011ff,#0010ff,#000eff,#000cff,#000aff,#0008ff,#0005ff,#0003ff,#0600ff,#0d00ff,#1400ff,#1a00ff,#2000ff,#2600ff,#2c00ff,#3100ff,#3700ff,#3c00ff,#4100ff,#4700ff,#4c00ff,#5100ff,#5600ff,#5b00ff,#6000ff,#6500ff,#6b00ff,#6f00ff,#7400ff,#7900ff,#7e00ff,#8300ff,#8800ff,#8d00ff,#9200ff,#9700ff,#9c00ff,#a000ff,#a500ff,#aa00ff,#af00ff,#b400ff,#b800ff,#bd00ff,#c200ff,#c700ff,#cb00ff,#d000ff,#d500ff,#da00ff,#df00ff,#e300ff,#e800ff,#ed00ff,#f200ff,#f600ff,#fb00ff,#ff00fe,#ff00fa,#ff00f5,#ff00f1,#ff00ed)"></div><div style="height:6px;background:linear-gradient(90deg,#0016ff,#0015ff,#0013ff,#0011ff,#000fff,#000dff,#000cff,#000aff,#0008ff,#0005ff,#0003ff,#0000ff,#0500ff,#0c00ff,#1300ff,#1900ff,#1f00ff,#2500ff,#2a00ff,#3000ff,#3500ff,#3a00ff,#4000ff,#4500ff,#4a00ff,#4f00ff,#5400ff,#5900ff,#5e00ff,#6300ff,#6800ff,#6d00ff,#7200ff,#7700ff,#7c00ff,#8000ff,#8500ff,#8a00ff,#8f00ff,#9400ff,#9800ff,#9d00ff,#a200ff,#a700ff,#ab00ff,#b000ff,#b500ff,#ba00ff,#be00ff,#c300ff,#c800ff,#cc00ff,#d100ff,#d600ff,#da00ff,#df00ff,#e400ff,#e800ff,#ed00ff,#f200ff,#f600ff,#fb00ff,#ff00fe,#ff00fa,#ff00f5,#ff00f1)"></div><div style="height:6px;background:linear-gradient(90deg,#0014ff,#0013ff,#0011ff,#000fff,#000dff,#000bff,#000aff,#0007ff,#0005ff,#0003ff,#0000ff,#0000ff,#0400ff,#0b00ff,#1100ff,#1800ff,#1d00ff,#2300ff,#2900ff,#2e00ff,#3400ff,#3900ff,#3e00ff,#4300ff,#4800ff,#4d00ff,#5200ff,#5700ff,#5c00ff,#6100ff,#6600ff,#6b00ff,#7000ff,#7400ff,#7900ff,#7e00ff,#8300ff,#8700ff,#8c00ff,#9100ff,#9500ff,#9a00ff,#9f00ff,#a300ff,#a800ff,#ad00ff,#b100ff,#b600ff,#bb00ff,#bf00ff,#c400ff,#c900ff,#cd00ff,#d200ff,#d600ff,#db00ff,#e000ff,#e400ff,#e900ff,#ed00ff,#f200ff,#f700ff,#fb00ff,#ff00fe,#ff00fa,#ff00f5)"></div></div></div>
<svg width="1920" height="1050" style="left:0;top:0"><rect x="1220.7" y="141.2" width="687.5" height="529.2" fill="none" stroke="#9c9c9c" stroke-width="1.5"/><rect x="1214.5" y="670.1" width="6.5" height="1.5" fill="#9c9c9c"/><rect x="1220.0" y="670.4" width="1.5" height="7" fill="#9c9c9c"/><rect x="1214.5" y="626.1" width="6.5" height="1.5" fill="#9c9c9c"/><rect x="1277.2" y="670.4" width="1.5" height="7" fill="#9c9c9c"/><rect x="1214.5" y="582.0" width="6.5" height="1.5" fill="#9c9c9c"/><rect x="1334.4" y="670.4" width="1.5" height="7" fill="#9c9c9c"/><rect x="1214.5" y="538.0" width="6.5" height="1.5" fill="#9c9c9c"/><rect x="1391.6" y="670.4" width="1.5" height="7" fill="#9c9c9c"/><rect x="1214.5" y="493.9" width="6.5" height="1.5" fill="#9c9c9c"/><rect x="1448.8" y="670.4" width="1.5" height="7" fill="#9c9c9c"/><rect x="1214.5" y="449.8" width="6.5" height="1.5" fill="#9c9c9c"/><rect x="1506.0" y="670.4" width="1.5" height="7" fill="#9c9c9c"/><rect x="1214.5" y="405.8" width="6.5" height="1.5" fill="#9c9c9c"/><rect x="1563.2" y="670.4" width="1.5" height="7" fill="#9c9c9c"/><rect x="1214.5" y="361.7" width="6.5" height="1.5" fill="#9c9c9c"/><rect x="1620.4" y="670.4" width="1.5" height="7" fill="#9c9c9c"/><rect x="1214.5" y="317.6" width="6.5" height="1.5" fill="#9c9c9c"/><rect x="1677.6" y="670.4" width="1.5" height="7" fill="#9c9c9c"/><rect x="1214.5" y="273.6" width="6.5" height="1.5" fill="#9c9c9c"/><rect x="1734.8" y="670.4" width="1.5" height="7" fill="#9c9c9c"/><rect x="1214.5" y="229.5" width="6.5" height="1.5" fill="#9c9c9c"/><rect x="1792.0" y="670.4" width="1.5" height="7" fill="#9c9c9c"/><rect x="1214.5" y="185.4" width="6.5" height="1.5" fill="#9c9c9c"/><rect x="1849.2" y="670.4" width="1.5" height="7" fill="#9c9c9c"/></svg>
<svg width="1920" height="1050" style="left:0;top:0"><rect x="1355.3" y="166.5" width="14" height="14" fill="none" stroke="#ffffff" stroke-width="1.6"/><rect x="1368.9" y="178.1" width="14" height="14" fill="none" stroke="#ffffff" stroke-width="1.6"/><rect x="1381.9" y="191.1" width="14" height="14" fill="none" stroke="#ffffff" stroke-width="1.6"/><rect x="1396.5" y="207.3" width="14" height="14" fill="none" stroke="#ffffff" stroke-width="1.6"/><rect x="1415.2" y="226.0" width="14" height="14" fill="none" stroke="#ffffff" stroke-width="1.6"/><rect x="1371.4" y="261.2" width="14" height="14" fill="none" stroke="#ffffff" stroke-width="1.6"/><rect x="1384.5" y="258.2" width="14" height="14" fill="none" stroke="#ffffff" stroke-width="1.6"/><rect x="1397.7" y="257.1" width="14" height="14" fill="none" stroke="#ffffff" stroke-width="1.6"/><rect x="1411.2" y="254.4" width="14" height="14" fill="none" stroke="#ffffff" stroke-width="1.6"/><rect x="1424.5" y="252.7" width="14" height="14" fill="none" stroke="#ffffff" stroke-width="1.6"/><rect x="1446.3" y="174.9" width="14" height="14" fill="none" stroke="#ffffff" stroke-width="1.6"/><rect x="1445.2" y="186.0" width="14" height="14" fill="none" stroke="#ffffff" stroke-width="1.6"/><rect x="1444.7" y="198.0" width="14" height="14" fill="none" stroke="#ffffff" stroke-width="1.6"/><rect x="1443.6" y="212.9" width="14" height="14" fill="none" stroke="#ffffff" stroke-width="1.6"/><rect x="1441.9" y="230.4" width="14" height="14" fill="none" stroke="#ffffff" stroke-width="1.6"/><rect x="1728.7" y="201.3" width="14" height="14" fill="none" stroke="#ffffff" stroke-width="1.6"/><rect x="1665.8" y="212.0" width="14" height="14" fill="none" stroke="#ffffff" stroke-width="1.6"/><rect x="1605.9" y="221.8" width="14" height="14" fill="none" stroke="#ffffff" stroke-width="1.6"/><rect x="1551.6" y="231.1" width="14" height="14" fill="none" stroke="#ffffff" stroke-width="1.6"/><rect x="1493.3" y="241.1" width="14" height="14" fill="none" stroke="#ffffff" stroke-width="1.6"/><rect x="1562.1" y="371.5" width="14" height="14" fill="none" stroke="#ffffff" stroke-width="1.6"/><rect x="1528.5" y="339.2" width="14" height="14" fill="none" stroke="#ffffff" stroke-width="1.6"/><rect x="1500.2" y="309.9" width="14" height="14" fill="none" stroke="#ffffff" stroke-width="1.6"/><rect x="1480.3" y="289.3" width="14" height="14" fill="none" stroke="#ffffff" stroke-width="1.6"/><rect x="1458.0" y="267.3" width="14" height="14" fill="none" stroke="#ffffff" stroke-width="1.6"/><rect x="1413.9" y="523.4" width="14" height="14" fill="none" stroke="#ffffff" stroke-width="1.6"/><rect x="1421.4" y="436.1" width="14" height="14" fill="none" stroke="#ffffff" stroke-width="1.6"/><rect x="1427.5" y="372.8" width="14" height="14" fill="none" stroke="#ffffff" stroke-width="1.6"/><rect x="1432.7" y="324.4" width="14" height="14" fill="none" stroke="#ffffff" stroke-width="1.6"/><rect x="1435.8" y="283.2" width="14" height="14" fill="none" stroke="#ffffff" stroke-width="1.6"/><rect x="1439" y="249.8" width="14" height="14" fill="none" stroke="#111" stroke-width="1.8"/><circle cx="1359.7" cy="173.5" r="4.7" fill="rgb(0, 176, 0)" stroke="#1a1a1a" stroke-width="1.3"/><circle cx="1370.0" cy="183.5" r="4.7" fill="rgb(61, 174, 59)" stroke="#1a1a1a" stroke-width="1.3"/><circle cx="1381.6" cy="195.6" r="4.7" fill="rgb(96, 173, 93)" stroke="#1a1a1a" stroke-width="1.3"/><circle cx="1397.8" cy="209.9" r="4.7" fill="rgb(132, 173, 127)" stroke="#1a1a1a" stroke-width="1.3"/><circle cx="1418.2" cy="229.0" r="4.7" fill="rgb(154, 172, 149)" stroke="#1a1a1a" stroke-width="1.3"/><circle cx="1376.9" cy="268.6" r="4.7" fill="rgb(0, 176, 184)" stroke="#1a1a1a" stroke-width="1.3"/><circle cx="1388.6" cy="265.4" r="4.7" fill="rgb(61, 174, 179)" stroke="#1a1a1a" stroke-width="1.3"/><circle cx="1400.7" cy="263.8" r="4.7" fill="rgb(96, 173, 176)" stroke="#1a1a1a" stroke-width="1.3"/><circle cx="1413.6" cy="261.2" r="4.7" fill="rgb(132, 173, 173)" stroke="#1a1a1a" stroke-width="1.3"/><circle cx="1428.2" cy="259.7" r="4.7" fill="rgb(154, 172, 171)" stroke="#1a1a1a" stroke-width="1.3"/><circle cx="1448.8" cy="180.4" r="4.7" fill="rgb(176, 168, 0)" stroke="#1a1a1a" stroke-width="1.3"/><circle cx="1448.8" cy="191.0" r="4.7" fill="rgb(176, 169, 59)" stroke="#1a1a1a" stroke-width="1.3"/><circle cx="1448.8" cy="202.6" r="4.7" fill="rgb(176, 170, 93)" stroke="#1a1a1a" stroke-width="1.3"/><circle cx="1447.2" cy="216.0" r="4.7" fill="rgb(176, 171, 127)" stroke="#1a1a1a" stroke-width="1.3"/><circle cx="1446.0" cy="234.7" r="4.7" fill="rgb(176, 171, 149)" stroke="#1a1a1a" stroke-width="1.3"/><circle cx="1734.7" cy="205.6" r="4.7" fill="rgb(192, 0, 16)" stroke="#1a1a1a" stroke-width="1.3"/><circle cx="1682.9" cy="214.2" r="4.7" fill="rgb(186, 60, 69)" stroke="#1a1a1a" stroke-width="1.3"/><circle cx="1624.6" cy="224.6" r="4.7" fill="rgb(183, 94, 100)" stroke="#1a1a1a" stroke-width="1.3"/><circle cx="1570.3" cy="233.7" r="4.7" fill="rgb(180, 129, 131)" stroke="#1a1a1a" stroke-width="1.3"/><circle cx="1505.8" cy="245.4" r="4.7" fill="rgb(177, 151, 151)" stroke="#1a1a1a" stroke-width="1.3"/><circle cx="1573.3" cy="381.2" r="4.7" fill="rgb(176, 0, 192)" stroke="#1a1a1a" stroke-width="1.3"/><circle cx="1542.5" cy="352.3" r="4.7" fill="rgb(176, 60, 184)" stroke="#1a1a1a" stroke-width="1.3"/><circle cx="1514.6" cy="324.2" r="4.7" fill="rgb(176, 94, 179)" stroke="#1a1a1a" stroke-width="1.3"/><circle cx="1491.5" cy="300.9" r="4.7" fill="rgb(176, 129, 175)" stroke="#1a1a1a" stroke-width="1.3"/><circle cx="1466.3" cy="277.4" r="4.7" fill="rgb(176, 151, 172)" stroke="#1a1a1a" stroke-width="1.3"/><circle cx="1427.0" cy="540.9" r="4.7" fill="rgb(16, 16, 160)" stroke="#1a1a1a" stroke-width="1.3"/><circle cx="1432.5" cy="460.8" r="4.7" fill="rgb(72, 70, 163)" stroke="#1a1a1a" stroke-width="1.3"/><circle cx="1435.3" cy="396.1" r="4.7" fill="rgb(104, 101, 165)" stroke="#1a1a1a" stroke-width="1.3"/><circle cx="1440.0" cy="341.9" r="4.7" fill="rgb(136, 133, 167)" stroke="#1a1a1a" stroke-width="1.3"/><circle cx="1442.8" cy="294.9" r="4.7" fill="rgb(156, 153, 168)" stroke="#1a1a1a" stroke-width="1.3"/><circle cx="1446" cy="256.8" r="4.7" fill="#ffffff" stroke="#1a1a1a" stroke-width="1.3"/><circle cx="1429.8" cy="305.1" r="5" fill="#000"/></svg>
<div style="position:absolute;left:1670px;top:504.4px;width:235px;height:160px;background:#2a2a2a"></div>
<div style="position:absolute;left:1673.6px;top:507.2px;width:228.4px;height:154.8px;border:2px solid #8c8c8c;overflow:hidden;background:#000"></div>
<svg width="224.4" height="150.8" style="left:1675.6px;top:509.2px"><defs><linearGradient id="ib" x1="0" y1="0" x2="1" y2="1"><stop offset="0" stop-color="#a8ff00"/><stop offset="0.45" stop-color="#ffff10"/><stop offset="1" stop-color="#ffb000"/></linearGradient><linearGradient id="id" x1="0" y1="0" x2="1" y2="1"><stop offset="0" stop-color="#609800"/><stop offset="0.5" stop-color="#989400"/><stop offset="1" stop-color="#9a6c00"/></linearGradient></defs><rect x="0" y="0" width="230" height="156" fill="url(#ib)"/><path d="M0,0 H230 V139 L0,16 Z" fill="url(#id)"/></svg>
<svg width="1920" height="1050" style="left:0;top:0"><circle cx="1768.9" cy="567.9" r="4.7" fill="#c0b800" stroke="#1a1a1a" stroke-width="1.3"/><rect x="1779.8" y="576.6" width="14" height="14" fill="none" stroke="#fff" stroke-width="1.6"/></svg>
<svg width="20" height="8" style="left:1680px;top:654px"><circle cx="10" cy="6.5" r="4.7" fill="#c0c060" stroke="#1a1a1a" stroke-width="1.3"/></svg>
<div class="t" style="left:1204.38px;top:663.33px;font-size:15.5px;color:#d8d8d8;">0</div>
<div class="t" style="left:1216.44px;top:680.83px;font-size:15.5px;color:#d8d8d8;">0</div>
<div class="t" style="left:1182.83px;top:619.26px;font-size:15.5px;color:#d8d8d8;">0,05</div>
<div class="t" style="left:1262.87px;top:680.83px;font-size:15.5px;color:#d8d8d8;">0,05</div>
<div class="t" style="left:1191.45px;top:575.20px;font-size:15.5px;color:#d8d8d8;">0,1</div>
<div class="t" style="left:1324.38px;top:680.83px;font-size:15.5px;color:#d8d8d8;">0,1</div>
<div class="t" style="left:1182.83px;top:531.13px;font-size:15.5px;color:#d8d8d8;">0,15</div>
<div class="t" style="left:1377.27px;top:680.83px;font-size:15.5px;color:#d8d8d8;">0,15</div>
<div class="t" style="left:1191.45px;top:487.06px;font-size:15.5px;color:#d8d8d8;">0,2</div>
<div class="t" style="left:1438.78px;top:680.83px;font-size:15.5px;color:#d8d8d8;">0,2</div>
<div class="t" style="left:1182.83px;top:443.00px;font-size:15.5px;color:#d8d8d8;">0,25</div>
<div class="t" style="left:1491.67px;top:680.83px;font-size:15.5px;color:#d8d8d8;">0,25</div>
<div class="t" style="left:1191.45px;top:398.93px;font-size:15.5px;color:#d8d8d8;">0,3</div>
<div class="t" style="left:1553.18px;top:680.83px;font-size:15.5px;color:#d8d8d8;">0,3</div>
<div class="t" style="left:1182.83px;top:354.87px;font-size:15.5px;color:#d8d8d8;">0,35</div>
<div class="t" style="left:1606.07px;top:680.83px;font-size:15.5px;color:#d8d8d8;">0,35</div>
<div class="t" style="left:1191.45px;top:310.81px;font-size:15.5px;color:#d8d8d8;">0,4</div>
<div class="t" style="left:1667.58px;top:680.83px;font-size:15.5px;color:#d8d8d8;">0,4</div>
<div class="t" style="left:1182.83px;top:266.74px;font-size:15.5px;color:#d8d8d8;">0,45</div>
<div class="t" style="left:1720.47px;top:680.83px;font-size:15.5px;color:#d8d8d8;">0,45</div>
<div class="t" style="left:1191.45px;top:222.67px;font-size:15.5px;color:#d8d8d8;">0,5</div>
<div class="t" style="left:1781.98px;top:680.83px;font-size:15.5px;color:#d8d8d8;">0,5</div>
<div class="t" style="left:1182.83px;top:178.61px;font-size:15.5px;color:#d8d8d8;">0,55</div>
<div class="t" style="left:1834.87px;top:680.83px;font-size:15.5px;color:#d8d8d8;">0,55</div>
<div style="position:absolute;left:799px;top:716px;width:786px;height:254px;background:#0c0c0c"></div>
<div style="position:absolute;left:800px;top:718px;width:784px;height:15px;background:#2f2f2f"></div>
<div style="position:absolute;left:800px;top:733px;width:784px;height:14.5px;background:#181818"></div>
<div style="position:absolute;left:800px;top:747.50px;width:784px;height:28.15px;background:#414141"></div>
<div class="t" style="left:820.60px;top:752.77px;font-size:18.5px;color:#f2f2f2;font-weight:bold;transform:scaleX(1.2601);transform-origin:0 0;">x: CIE31</div>
<div class="t" style="left:1017.50px;top:753.62px;font-size:17.5px;color:#f2f2f2;transform:scaleX(1.3190);transform-origin:0 0;">0,3361</div>
<div class="t" style="left:1131.90px;top:753.62px;font-size:17.5px;color:#f2f2f2;transform:scaleX(1.3190);transform-origin:0 0;">0,3597</div>
<div class="t" style="left:1246.30px;top:753.62px;font-size:17.5px;color:#f2f2f2;transform:scaleX(1.3190);transform-origin:0 0;">0,3805</div>
<div class="t" style="left:1360.70px;top:753.62px;font-size:17.5px;color:#f2f2f2;transform:scaleX(1.3190);transform-origin:0 0;">0,3981</div>
<div class="t" style="left:1475.10px;top:753.62px;font-size:17.5px;color:#f2f2f2;transform:scaleX(1.3190);transform-origin:0 0;">0,4155</div>
<div style="position:absolute;left:800px;top:775.35px;width:784px;height:28.15px;background:#808080"></div>
<div class="t" style="left:820.60px;top:780.62px;font-size:18.5px;color:#f2f2f2;font-weight:bold;transform:scaleX(1.2601);transform-origin:0 0;">y: CIE31</div>
<div class="t" style="left:1017.50px;top:781.48px;font-size:17.5px;color:#f2f2f2;transform:scaleX(1.3190);transform-origin:0 0;">0,3731</div>
<div class="t" style="left:1131.90px;top:781.48px;font-size:17.5px;color:#f2f2f2;transform:scaleX(1.3190);transform-origin:0 0;">0,4139</div>
<div class="t" style="left:1246.30px;top:781.48px;font-size:17.5px;color:#f2f2f2;transform:scaleX(1.3190);transform-origin:0 0;">0,4498</div>
<div class="t" style="left:1360.70px;top:781.48px;font-size:17.5px;color:#f2f2f2;transform:scaleX(1.3190);transform-origin:0 0;">0,4802</div>
<div class="t" style="left:1475.10px;top:781.48px;font-size:17.5px;color:#f2f2f2;transform:scaleX(1.3190);transform-origin:0 0;">0,5105</div>
<div style="position:absolute;left:800px;top:803.20px;width:784px;height:28.15px;background:#414141"></div>
<div class="t" style="left:820.60px;top:808.48px;font-size:18.5px;color:#f2f2f2;font-weight:bold;transform:scaleX(1.1345);transform-origin:0 0;">Y</div>
<div class="t" style="left:1017.50px;top:809.33px;font-size:17.5px;color:#f2f2f2;transform:scaleX(1.3190);transform-origin:0 0;">190,8311</div>
<div class="t" style="left:1131.90px;top:809.33px;font-size:17.5px;color:#f2f2f2;transform:scaleX(1.3190);transform-origin:0 0;">187,5908</div>
<div class="t" style="left:1246.30px;top:809.33px;font-size:17.5px;color:#f2f2f2;transform:scaleX(1.3190);transform-origin:0 0;">185,3798</div>
<div class="t" style="left:1360.70px;top:809.33px;font-size:17.5px;color:#f2f2f2;transform:scaleX(1.3190);transform-origin:0 0;">183,7072</div>
<div class="t" style="left:1475.10px;top:809.33px;font-size:17.5px;color:#f2f2f2;transform:scaleX(1.3190);transform-origin:0 0;">182,0171</div>
<div style="position:absolute;left:800px;top:831.05px;width:784px;height:28.15px;background:#808080"></div>
<div class="t" style="left:820.60px;top:836.32px;font-size:18.5px;color:#f2f2f2;font-weight:bold;transform:scaleX(1.3060);transform-origin:0 0;">Target x:CIE31</div>
<div class="t" style="left:1017.50px;top:837.17px;font-size:17.5px;color:#f2f2f2;transform:scaleX(1.3190);transform-origin:0 0;">0,3348</div>
<div class="t" style="left:1131.90px;top:837.17px;font-size:17.5px;color:#f2f2f2;transform:scaleX(1.3190);transform-origin:0 0;">0,3571</div>
<div class="t" style="left:1246.30px;top:837.17px;font-size:17.5px;color:#f2f2f2;transform:scaleX(1.3190);transform-origin:0 0;">0,3783</div>
<div class="t" style="left:1360.70px;top:837.17px;font-size:17.5px;color:#f2f2f2;transform:scaleX(1.3190);transform-origin:0 0;">0,3980</div>
<div class="t" style="left:1475.10px;top:837.17px;font-size:17.5px;color:#f2f2f2;transform:scaleX(1.3190);transform-origin:0 0;">0,4193</div>
<div style="position:absolute;left:800px;top:858.90px;width:784px;height:28.15px;background:#414141"></div>
<div class="t" style="left:820.60px;top:864.17px;font-size:18.5px;color:#f2f2f2;font-weight:bold;transform:scaleX(1.3060);transform-origin:0 0;">Target y:CIE31</div>
<div class="t" style="left:1017.50px;top:865.02px;font-size:17.5px;color:#f2f2f2;transform:scaleX(1.3190);transform-origin:0 0;">0,3654</div>
<div class="t" style="left:1131.90px;top:865.02px;font-size:17.5px;color:#f2f2f2;transform:scaleX(1.3190);transform-origin:0 0;">0,4025</div>
<div class="t" style="left:1246.30px;top:865.02px;font-size:17.5px;color:#f2f2f2;transform:scaleX(1.3190);transform-origin:0 0;">0,4374</div>
<div class="t" style="left:1360.70px;top:865.02px;font-size:17.5px;color:#f2f2f2;transform:scaleX(1.3190);transform-origin:0 0;">0,4699</div>
<div class="t" style="left:1475.10px;top:865.02px;font-size:17.5px;color:#f2f2f2;transform:scaleX(1.3190);transform-origin:0 0;">0,5053</div>
<div style="position:absolute;left:800px;top:886.75px;width:784px;height:28.15px;background:#808080"></div>
<div class="t" style="left:820.60px;top:892.02px;font-size:18.5px;color:#f2f2f2;font-weight:bold;transform:scaleX(1.3552);transform-origin:0 0;">Target Y</div>
<div class="t" style="left:1017.50px;top:892.88px;font-size:17.5px;color:#f2f2f2;transform:scaleX(1.3190);transform-origin:0 0;">214,8249</div>
<div class="t" style="left:1131.90px;top:892.88px;font-size:17.5px;color:#f2f2f2;transform:scaleX(1.3190);transform-origin:0 0;">211,0161</div>
<div class="t" style="left:1246.30px;top:892.88px;font-size:17.5px;color:#f2f2f2;transform:scaleX(1.3190);transform-origin:0 0;">208,1061</div>
<div class="t" style="left:1360.70px;top:892.88px;font-size:17.5px;color:#f2f2f2;transform:scaleX(1.3190);transform-origin:0 0;">205,8430</div>
<div class="t" style="left:1475.10px;top:892.88px;font-size:17.5px;color:#f2f2f2;transform:scaleX(1.3190);transform-origin:0 0;">203,7605</div>
<div style="position:absolute;left:800px;top:914.60px;width:784px;height:28.15px;background:#414141"></div>
<div class="t" style="left:820.60px;top:919.88px;font-size:18.5px;color:#f2f2f2;font-weight:bold;transform:scaleX(1.3387);transform-origin:0 0;">&#916;E 2000</div>
<div class="t" style="left:1017.50px;top:920.73px;font-size:17.5px;color:#f2f2f2;transform:scaleX(1.3190);transform-origin:0 0;">3,2869</div>
<div class="t" style="left:1131.90px;top:920.73px;font-size:17.5px;color:#f2f2f2;transform:scaleX(1.3190);transform-origin:0 0;">3,0668</div>
<div class="t" style="left:1246.30px;top:920.73px;font-size:17.5px;color:#f2f2f2;transform:scaleX(1.3190);transform-origin:0 0;">2,8892</div>
<div class="t" style="left:1360.70px;top:920.73px;font-size:17.5px;color:#f2f2f2;transform:scaleX(1.3190);transform-origin:0 0;">2,7344</div>
<div class="t" style="left:1475.10px;top:920.73px;font-size:17.5px;color:#f2f2f2;transform:scaleX(1.3190);transform-origin:0 0;">2,7600</div>
<div style="position:absolute;left:800px;top:942.45px;width:784px;height:28.15px;background:#808080"></div>
<div class="t" style="left:820.60px;top:947.73px;font-size:18.5px;color:#f2f2f2;font-weight:bold;transform:scaleX(1.2912);transform-origin:0 0;">&#916;E ITP</div>
<div class="t" style="left:1017.50px;top:948.58px;font-size:17.5px;color:#f2f2f2;transform:scaleX(1.3190);transform-origin:0 0;">9,5894</div>
<div class="t" style="left:1131.90px;top:948.58px;font-size:17.5px;color:#f2f2f2;transform:scaleX(1.3190);transform-origin:0 0;">10,2375</div>
<div class="t" style="left:1246.30px;top:948.58px;font-size:17.5px;color:#f2f2f2;transform:scaleX(1.3190);transform-origin:0 0;">10,4701</div>
<div class="t" style="left:1360.70px;top:948.58px;font-size:17.5px;color:#f2f2f2;transform:scaleX(1.3190);transform-origin:0 0;">9,9425</div>
<div class="t" style="left:1475.10px;top:948.58px;font-size:17.5px;color:#f2f2f2;transform:scaleX(1.3190);transform-origin:0 0;">9,0583</div>
<div class="t" style="left:1046.55px;top:724.73px;font-size:16.5px;color:#f2f2f2;font-weight:bold;transform:scaleX(1.2990);transform-origin:0 0;">20%</div>
<div class="t" style="left:1160.95px;top:724.73px;font-size:16.5px;color:#f2f2f2;font-weight:bold;transform:scaleX(1.2990);transform-origin:0 0;">40%</div>
<div class="t" style="left:1275.35px;top:724.73px;font-size:16.5px;color:#f2f2f2;font-weight:bold;transform:scaleX(1.2990);transform-origin:0 0;">60%</div>
<div class="t" style="left:1389.75px;top:724.73px;font-size:16.5px;color:#f2f2f2;font-weight:bold;transform:scaleX(1.2990);transform-origin:0 0;">80%</div>
<div class="t" style="left:1498.19px;top:724.73px;font-size:16.5px;color:#f2f2f2;font-weight:bold;transform:scaleX(1.2990);transform-origin:0 0;">100%</div>
<div style="position:absolute;left:125px;top:1010.6px;width:1795px;height:39.4px;background:linear-gradient(#4a4a4a,#2e2e2e 60%,#262626)"></div>
<div style="position:absolute;left:126px;top:1011px;width:27.5px;height:39px;background:linear-gradient(#a8a8a8,#7a7a7a 40%,#5c5c5c);border-radius:3px 3px 0 0"></div>
<svg width="12" height="12" style="left:133.6px;top:1010.3px"><circle cx="6" cy="6" r="4.5" fill="#6a6a6a" stroke="#888" stroke-width="0.8"/><path d="M3.5 7.3 L6 4.6 L8.5 7.3 Z" fill="#111"/></svg>
<div style="position:absolute;left:128.8px;top:1027.5px;width:21.8px;height:18.8px;background:#ffff00;border:1px solid #8a8a00;border-radius:2px"></div>
<div style="position:absolute;left:157.5px;top:1011.2px;width:93.5px;height:38.8px;background:linear-gradient(#a8a8a8,#858585 30%,#6e6e6e 70%,#5e5e5e);border-radius:3px 3px 0 0"></div>
<div style="position:absolute;left:161.0px;top:1015px;width:87.1px;height:21.9px;background:#c2c4a4;border-radius:2px;box-shadow:0 0 1px #777"></div>
<div class="t" style="left:197.90px;top:1040.97px;font-size:6.5px;color:#333333;">20%</div>
<div style="position:absolute;left:252.6px;top:1011.2px;width:93.5px;height:38.8px;background:linear-gradient(#a8a8a8,#858585 30%,#6e6e6e 70%,#5e5e5e);border-radius:3px 3px 0 0"></div>
<div style="position:absolute;left:256.1px;top:1015px;width:87.1px;height:21.9px;background:#c2c387;border-radius:2px;box-shadow:0 0 1px #777"></div>
<div class="t" style="left:293.00px;top:1040.97px;font-size:6.5px;color:#333333;">40%</div>
<div style="position:absolute;left:347.7px;top:1011.2px;width:93.5px;height:38.8px;background:linear-gradient(#a8a8a8,#858585 30%,#6e6e6e 70%,#5e5e5e);border-radius:3px 3px 0 0"></div>
<div style="position:absolute;left:351.2px;top:1015px;width:87.1px;height:21.9px;background:#c2c06c;border-radius:2px;box-shadow:0 0 1px #777"></div>
<div class="t" style="left:388.10px;top:1040.97px;font-size:6.5px;color:#333333;">60%</div>
<div style="position:absolute;left:442.8px;top:1011.2px;width:93.5px;height:38.8px;background:linear-gradient(#a8a8a8,#858585 30%,#6e6e6e 70%,#5e5e5e);border-radius:3px 3px 0 0"></div>
<div style="position:absolute;left:446.3px;top:1015px;width:87.1px;height:21.9px;background:#c1bf4a;border-radius:2px;box-shadow:0 0 1px #777"></div>
<div class="t" style="left:483.20px;top:1040.97px;font-size:6.5px;color:#333333;">80%</div>
<div style="position:absolute;left:538px;top:1011.2px;width:93px;height:38.8px;background:linear-gradient(#1a1a1a,#2c2c2c 60%,#3a3a3a);border-radius:3px 3px 0 0"></div>
<div style="position:absolute;left:540.6px;top:1014.4px;width:87.5px;height:22.6px;background:#c4c000;border-radius:2px"></div>
<div class="t" style="left:576.19px;top:1040.97px;font-size:6.5px;color:#ffffff;font-weight:bold;">100%</div>
<div style="position:absolute;left:1917.5px;top:56px;width:2.5px;height:955px;background:linear-gradient(90deg,#262626,#1c1c1c)"></div>
<div style="position:absolute;left:1718px;top:1011px;width:29.5px;height:39px;background:linear-gradient(#a0a0a0,#7c7c7c 40%,#6a6a6a);border-radius:3px 3px 0 0"></div>
<div style="position:absolute;left:1718px;top:1021px;width:29.5px;height:1px;background:#666"></div>
<svg width="12" height="12" style="left:1727px;top:1010px"><circle cx="6" cy="6" r="4" fill="#7a7a7a" stroke="#999" stroke-width="0.8"/><path d="M3.8 7 L6 4.8 L8.2 7 Z" fill="#111"/></svg>
<div style="position:absolute;left:1724px;top:1027px;width:19.5px;height:19px;background:linear-gradient(#aaa,#888);border:1.5px solid #222;border-radius:2px"></div>
<div style="position:absolute;left:1729px;top:1032px;width:9.5px;height:9px;background:#000"></div>
<div style="position:absolute;left:1748.8px;top:1011px;width:141.2px;height:19px;background:linear-gradient(#b0b0b0,#8a8a8a 60%,#7a7a7a);border-radius:3px 3px 0 0"></div>
<div style="position:absolute;left:1776.0px;top:1011px;width:1px;height:19px;background:#666"></div>
<div style="position:absolute;left:1804.0px;top:1011px;width:1px;height:19px;background:#666"></div>
<div style="position:absolute;left:1832.0px;top:1011px;width:1px;height:19px;background:#666"></div>
<div style="position:absolute;left:1860.0px;top:1011px;width:1px;height:19px;background:#666"></div>
<svg width="14" height="14" style="left:1755.9px;top:1013.5px"><circle cx="7" cy="7" r="6.3" fill="#9a9a9a" stroke="#b8b8b8" stroke-width="0.6"/><rect x="4.6" y="4.6" width="4.8" height="4.8" fill="#111"/></svg>
<svg width="14" height="14" style="left:1784.0px;top:1013.5px"><circle cx="7" cy="7" r="6.3" fill="#9a9a9a" stroke="#b8b8b8" stroke-width="0.6"/><path d="M5 3.6 L10 7 L5 10.4 Z" fill="#111"/></svg>
<svg width="14" height="14" style="left:1812.0px;top:1013.5px"><circle cx="7" cy="7" r="6.3" fill="#9a9a9a" stroke="#b8b8b8" stroke-width="0.6"/><path d="M3.8 3.8 V10.2 M10.2 3.8 V10.2 M3.8 7 H10.2" stroke="#111" stroke-width="1.2" fill="none"/></svg>
<svg width="14" height="14" style="left:1840.0px;top:1013.5px"><circle cx="7" cy="7" r="6.3" fill="#9a9a9a" stroke="#b8b8b8" stroke-width="0.6"/><path d="M2.8 7 C2.8 4.2 6.6 4.2 7 7 C7.4 9.8 11.2 9.8 11.2 7 C11.2 4.2 7.4 4.2 7 7 C6.6 9.8 2.8 9.8 2.8 7 Z" stroke="#111" stroke-width="1.1" fill="none"/></svg>
<svg width="14" height="14" style="left:1868.5px;top:1013.5px"><circle cx="7" cy="7" r="6.3" fill="#9a9a9a" stroke="#b8b8b8" stroke-width="0.6"/><path d="M4 6 A3.2 3.2 0 0 1 10 5.5 M10 8 A3.2 3.2 0 0 1 4 8.5" stroke="#111" stroke-width="1.3" fill="none"/><path d="M10.5 3.5 L10.5 6.5 L7.8 6 Z M3.5 10.5 L3.5 7.5 L6.2 8 Z" fill="#111"/></svg>
<div style="position:absolute;left:1890px;top:1011px;width:30px;height:19px;background:linear-gradient(#3a3a3a,#2a2a2a)"></div>
<svg width="14" height="14" style="left:1897px;top:1013.5px"><circle cx="7" cy="7" r="6.2" fill="#2c2c2c" stroke="#333"/></svg>
<div style="position:absolute;left:1748.8px;top:1030px;width:84px;height:20px;background:linear-gradient(#b4b4b4,#9a9a9a 50%,#8e8e8e);border-radius:3px 3px 0 0"></div>
<div style="position:absolute;left:1834.5px;top:1030px;width:84px;height:20px;background:linear-gradient(#b4b4b4,#9a9a9a 50%,#8e8e8e);border-radius:3px 3px 0 0"></div>
<div class="t" style="left:1784.50px;top:1034.17px;font-size:14.5px;color:#1a1a1a;transform:scaleX(0.9616);transform-origin:0 0;">Back</div>
<div class="t" style="left:1851.00px;top:1034.17px;font-size:14.5px;color:#1a1a1a;transform:scaleX(1.0733);transform-origin:0 0;">Next</div>
<svg width="14" height="14" style="left:1761px;top:1033px"><circle cx="7" cy="7" r="6" fill="#aaa" stroke="#c8c8c8" stroke-width="0.6"/><path d="M8 4.5 L5.5 7 L8 9.5 M10 4.5 L7.5 7 L10 9.5" stroke="#333" stroke-width="1" fill="none"/></svg>
<svg width="14" height="14" style="left:1894px;top:1033px"><circle cx="7" cy="7" r="6" fill="#aaa" stroke="#c8c8c8" stroke-width="0.6"/><path d="M4 4.5 L6.5 7 L4 9.5 M6 4.5 L8.5 7 L6 9.5" stroke="#333" stroke-width="1" fill="none"/></svg>
</body></html>
